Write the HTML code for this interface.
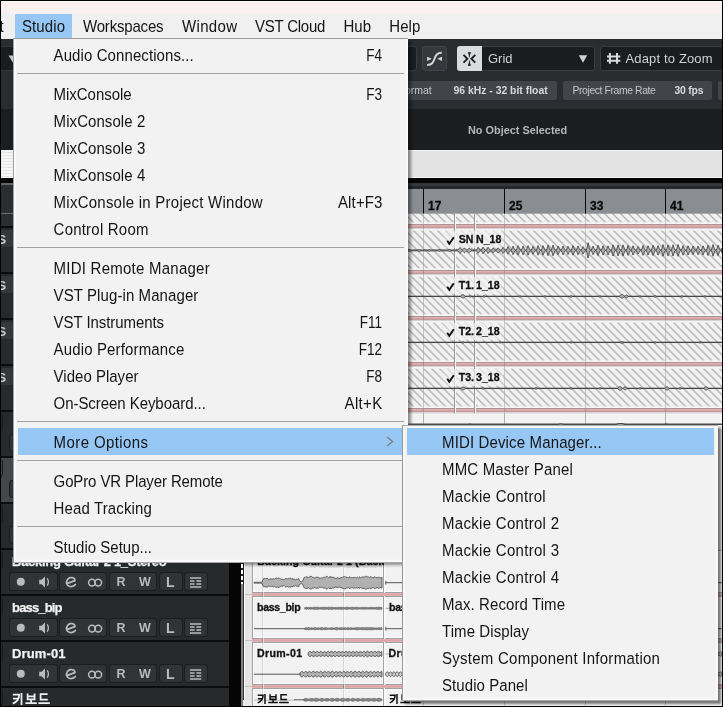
<!DOCTYPE html><html><head><meta charset="utf-8"><title>Cubase</title><style>
*{margin:0;padding:0;box-sizing:border-box}
html,body{width:723px;height:707px;overflow:hidden;background:#000}
body{font-family:"Liberation Sans",sans-serif;position:relative}
#root{position:absolute;left:0;top:0;width:723px;height:707px;overflow:hidden;background:#000;will-change:transform;transform:translateZ(0)}
.a{position:absolute}
.t{position:absolute;white-space:pre;line-height:1}
.mi{position:absolute;white-space:pre;font-size:15px;line-height:27px;height:27px;color:#141414;transform:scaleY(1.07);transform-origin:0 19px}
.sc{position:absolute;white-space:pre;font-size:15px;line-height:27px;height:27px;color:#141414;text-align:right;transform:scaleY(1.07);transform-origin:100% 19px}
.sep{position:absolute;height:1px;background:#a2a2a2}
.grp{position:absolute;height:17.6px;background:#303437;box-shadow:0 0 0 0.9px #1b1d1f;border-radius:2.5px}
.tn{position:absolute;white-space:pre;font-size:13px;font-weight:700;color:#f2f2f2;line-height:1;-webkit-text-stroke:0.25px #f2f2f2}
.ev{position:absolute;background:#ececec;border:1px solid #8e8e8e;box-shadow:inset 0 0 0 1px #fbfbfb}
.el{position:absolute;white-space:pre;font-size:10.6px;font-weight:700;color:#111;line-height:1;-webkit-text-stroke:0.3px #111}
</style></head><body><div id="root">
<div class="a" style="left:1px;top:1px;width:721px;height:13px;background:#f8f0f0;border-top:1px solid #fcf8f8"></div>
<div class="a" style="left:1px;top:14px;width:721px;height:25px;background:#f0f0f0"></div>
<div class="a" style="left:1px;top:39px;width:721px;height:70px;background:#292d30"></div>
<div class="a" style="left:1px;top:46px;width:14px;height:25px;background:#1a1d1f;border-top:1px solid #34383b;border-bottom:1px solid #34383b"></div>
<svg class="a" style="left:6px;top:55px" width="10" height="8"><path d="M2.5 0.5 L11 0.5 L6.8 7.5Z" fill="#c4c6c8"/></svg>
<div class="a" style="left:1px;top:109px;width:721px;height:41px;background:#1b1d1f"></div>
<div class="a" style="left:1px;top:150px;width:721px;height:28px;background:#e3e3e3;border-top:1px solid #f4f4f4;border-bottom:1px solid #f4f4f4"></div>
<div class="a" style="left:1px;top:150px;width:13px;height:28px;background:repeating-linear-gradient(#f6f6f6 0,#f6f6f6 2px,#e6e6e6 2px,#e6e6e6 3px)"></div>
<div class="a" style="left:1px;top:178px;width:721px;height:5px;background:#050505"></div>
<div class="a" style="left:1px;top:183px;width:721px;height:3px;background:#34383c"></div>
<div class="a" style="left:1px;top:186px;width:721px;height:3px;background:#24282b"></div>
<div class="a" style="left:395px;top:46px;width:22px;height:25px;background:#1a1d1f;border:1px solid #3a3e41;border-radius:3px"></div>
<div class="a" style="left:422px;top:46px;width:25px;height:25px;background:#35393c;border:1px solid #41454a;border-radius:3px"></div>
<svg class="a" style="left:422px;top:46px" width="25" height="25" viewBox="0 0 25 25"><path d="M5.2 19 C10.5 19 11.3 15.8 12.5 12.8 C13.7 9.8 14.5 6.8 19.8 6.8" fill="none" stroke="#d6d8da" stroke-width="1.9"/><path d="M5.1 10.7 L9.9 12.8 L5.1 14.9Z M20 10.7 L15.3 12.8 L20 14.9Z" fill="#d6d8da"/></svg>
<div class="a" style="left:457px;top:46px;width:138px;height:25px;background:#1a1d1f;border:1px solid #3a3e41;border-radius:3px"></div>
<div class="a" style="left:457px;top:46px;width:25.2px;height:25px;background:#d9dbdc;border-radius:3px 0 0 3px"></div>
<svg class="a" style="left:457px;top:46px" width="26" height="25" viewBox="0 0 26 25"><g fill="none" stroke="#17191b" stroke-width="1.8"><path d="M6.5 8.9 L10.4 12.8 L6.5 16.7"/><path d="M18.3 8.9 L14.4 12.8 L18.3 16.7"/></g><path d="M10.7 6.2 L14.1 6.2 L12.95 9 L12.7 11.6 L12.1 11.6 L11.85 9 Z M10.7 19.7 L14.1 19.7 L12.95 16.9 L12.7 14.2 L12.1 14.2 L11.85 16.9 Z" fill="#17191b"/></svg>
<div class="t" style="left:488px;top:52px;font-size:13px;color:#cfd1d3">Grid</div>
<svg class="a" style="left:578px;top:54px" width="12" height="10"><path d="M0.8 1.2 L9.2 1.2 L5 8.7Z" fill="#d0d2d4"/></svg>
<div class="a" style="left:600px;top:46px;width:131px;height:25px;background:#1a1d1f;border:1px solid #3a3e41;border-radius:3px"></div>
<svg class="a" style="left:606px;top:51px" width="16" height="15" viewBox="0 0 16 15"><g stroke="#d8dadc" stroke-width="2" fill="none"><path d="M3.9 2 V12.8 M11 2 V12.8 M1 5.6 H14.3 M1 9.8 H14.3"/></g></svg>
<div class="t" style="left:625.5px;top:52px;font-size:13px;color:#cfd1d3;letter-spacing:0.15px">Adapt to Zoom</div>
<div class="a" style="left:380px;top:81px;width:177px;height:19px;background:#41454a;border-radius:2px"></div>
<div class="a" style="left:563px;top:81px;width:149px;height:19px;background:#41454a;border-radius:2px"></div>
<div class="a" style="left:718px;top:81px;width:10px;height:19px;background:#41454a;border-radius:2px"></div>
<div class="t" style="left:405px;top:85.5px;font-size:10.4px;color:#c4c6c8">ormat</div>
<div class="t" style="left:453.5px;top:85.5px;font-size:10.4px;font-weight:700;color:#d6d8da">96 kHz - 32 bit float</div>
<div class="t" style="left:572.5px;top:85.5px;font-size:10.4px;color:#c4c6c8;letter-spacing:-0.4px">Project Frame Rate</div>
<div class="t" style="left:674.5px;top:85.5px;font-size:10.4px;font-weight:700;color:#d6d8da;letter-spacing:-0.2px">30 fps</div>
<div class="t" style="left:468px;top:125px;font-size:10.9px;font-weight:700;color:#b4b7ba">No Object Selected</div>
<div class="a" style="left:229px;top:189px;width:493px;height:25px;background:#8a8d92"></div>
<div class="a" style="left:422.9px;top:189px;width:1.3px;height:25px;background:#0a0a0a"></div>
<div class="t" style="left:428px;top:199.7px;font-size:12px;font-weight:700;color:#0a0a0a;letter-spacing:0.1px;-webkit-text-stroke:0.3px #0a0a0a">17</div>
<div class="a" style="left:503.9px;top:189px;width:1.3px;height:25px;background:#0a0a0a"></div>
<div class="t" style="left:509px;top:199.7px;font-size:12px;font-weight:700;color:#0a0a0a;letter-spacing:0.1px;-webkit-text-stroke:0.3px #0a0a0a">25</div>
<div class="a" style="left:584.9px;top:189px;width:1.3px;height:25px;background:#0a0a0a"></div>
<div class="t" style="left:590px;top:199.7px;font-size:12px;font-weight:700;color:#0a0a0a;letter-spacing:0.1px;-webkit-text-stroke:0.3px #0a0a0a">33</div>
<div class="a" style="left:664.9px;top:189px;width:1.3px;height:25px;background:#0a0a0a"></div>
<div class="t" style="left:670px;top:199.7px;font-size:12px;font-weight:700;color:#0a0a0a;letter-spacing:0.1px;-webkit-text-stroke:0.3px #0a0a0a">41</div>
<div class="a" style="left:229px;top:214px;width:493px;height:215px;background:#f4f4f4"></div>
<svg class="a" style="left:0;top:0" width="723" height="707" viewBox="0 0 723 707"><defs><pattern id="h" width="8" height="8" patternUnits="userSpaceOnUse" patternTransform="translate(7.05 0)"><rect width="8" height="8" fill="#f1f1f1"/><path d="M-2 -2 L10 10 M-2 6 L2 10 M6 -2 L10 2" stroke="#b4b4b4" stroke-width="1.35" fill="none"/></pattern></defs><rect x="229" y="213.7" width="493" height="8.5" fill="url(#h)"/><rect x="229" y="230.7" width="493" height="37.6" fill="url(#h)"/><rect x="229" y="276.7" width="493" height="37.6" fill="url(#h)"/><rect x="229" y="322.7" width="493" height="37.6" fill="url(#h)"/><rect x="229" y="368.7" width="493" height="37.6" fill="url(#h)"/></svg>
<div class="a" style="left:229px;top:224px;width:493px;height:5px;background:linear-gradient(#a89494 0,#a89494 1px,#e6aeb0 1px,#e6aeb0 2px,#d2a5a7 2px,#d2a5a7 3px,#c29e9f 3px,#c29e9f 4px,#d9d2d2 4px,#d9d2d2 5px)"></div>
<div class="a" style="left:422.9px;top:224.2px;width:1.1px;height:4px;background:#858282"></div>
<div class="a" style="left:503.9px;top:224.2px;width:1.1px;height:4px;background:#858282"></div>
<div class="a" style="left:584.9px;top:224.2px;width:1.1px;height:4px;background:#858282"></div>
<div class="a" style="left:664.9px;top:224.2px;width:1.1px;height:4px;background:#858282"></div>
<div class="a" style="left:229px;top:270px;width:493px;height:5px;background:linear-gradient(#a89494 0,#a89494 1px,#e6aeb0 1px,#e6aeb0 2px,#d2a5a7 2px,#d2a5a7 3px,#c29e9f 3px,#c29e9f 4px,#d9d2d2 4px,#d9d2d2 5px)"></div>
<div class="a" style="left:422.9px;top:270.2px;width:1.1px;height:4px;background:#858282"></div>
<div class="a" style="left:503.9px;top:270.2px;width:1.1px;height:4px;background:#858282"></div>
<div class="a" style="left:584.9px;top:270.2px;width:1.1px;height:4px;background:#858282"></div>
<div class="a" style="left:664.9px;top:270.2px;width:1.1px;height:4px;background:#858282"></div>
<div class="a" style="left:229px;top:316px;width:493px;height:5px;background:linear-gradient(#a89494 0,#a89494 1px,#e6aeb0 1px,#e6aeb0 2px,#d2a5a7 2px,#d2a5a7 3px,#c29e9f 3px,#c29e9f 4px,#d9d2d2 4px,#d9d2d2 5px)"></div>
<div class="a" style="left:422.9px;top:316.2px;width:1.1px;height:4px;background:#858282"></div>
<div class="a" style="left:503.9px;top:316.2px;width:1.1px;height:4px;background:#858282"></div>
<div class="a" style="left:584.9px;top:316.2px;width:1.1px;height:4px;background:#858282"></div>
<div class="a" style="left:664.9px;top:316.2px;width:1.1px;height:4px;background:#858282"></div>
<div class="a" style="left:229px;top:362px;width:493px;height:5px;background:linear-gradient(#a89494 0,#a89494 1px,#e6aeb0 1px,#e6aeb0 2px,#d2a5a7 2px,#d2a5a7 3px,#c29e9f 3px,#c29e9f 4px,#d9d2d2 4px,#d9d2d2 5px)"></div>
<div class="a" style="left:422.9px;top:362.2px;width:1.1px;height:4px;background:#858282"></div>
<div class="a" style="left:503.9px;top:362.2px;width:1.1px;height:4px;background:#858282"></div>
<div class="a" style="left:584.9px;top:362.2px;width:1.1px;height:4px;background:#858282"></div>
<div class="a" style="left:664.9px;top:362.2px;width:1.1px;height:4px;background:#858282"></div>
<div class="a" style="left:229px;top:408px;width:493px;height:5px;background:linear-gradient(#a89494 0,#a89494 1px,#e6aeb0 1px,#e6aeb0 2px,#d2a5a7 2px,#d2a5a7 3px,#c29e9f 3px,#c29e9f 4px,#d9d2d2 4px,#d9d2d2 5px)"></div>
<div class="a" style="left:422.9px;top:408.2px;width:1.1px;height:4px;background:#858282"></div>
<div class="a" style="left:503.9px;top:408.2px;width:1.1px;height:4px;background:#858282"></div>
<div class="a" style="left:584.9px;top:408.2px;width:1.1px;height:4px;background:#858282"></div>
<div class="a" style="left:664.9px;top:408.2px;width:1.1px;height:4px;background:#858282"></div>
<div class="a" style="left:423px;top:214px;width:1px;height:200px;background:rgba(165,165,165,0.6)"></div>
<div class="a" style="left:504px;top:214px;width:1px;height:200px;background:rgba(165,165,165,0.6)"></div>
<div class="a" style="left:585px;top:214px;width:1px;height:200px;background:rgba(165,165,165,0.6)"></div>
<div class="a" style="left:665px;top:214px;width:1px;height:200px;background:rgba(165,165,165,0.6)"></div>
<div class="a" style="left:453.8px;top:214px;width:1.1px;height:199px;background:#979797"></div>
<div class="a" style="left:454.90000000000003px;top:214px;width:1px;height:199px;background:#f8f8f8"></div>
<div class="a" style="left:473.8px;top:214px;width:1.1px;height:199px;background:#979797"></div>
<div class="a" style="left:474.90000000000003px;top:214px;width:1px;height:199px;background:#f8f8f8"></div>
<div class="a" style="left:438px;top:231px;width:68px;height:17px;background:linear-gradient(90deg,rgba(242,242,242,0),rgba(242,242,242,0.7) 22%,rgba(242,242,242,0.7) 85%,rgba(242,242,242,0))"></div>
<div class="a" style="left:438px;top:277px;width:68px;height:17px;background:linear-gradient(90deg,rgba(242,242,242,0),rgba(242,242,242,0.7) 22%,rgba(242,242,242,0.7) 85%,rgba(242,242,242,0))"></div>
<div class="a" style="left:438px;top:323px;width:68px;height:17px;background:linear-gradient(90deg,rgba(242,242,242,0),rgba(242,242,242,0.7) 22%,rgba(242,242,242,0.7) 85%,rgba(242,242,242,0))"></div>
<div class="a" style="left:438px;top:369px;width:68px;height:17px;background:linear-gradient(90deg,rgba(242,242,242,0),rgba(242,242,242,0.7) 22%,rgba(242,242,242,0.7) 85%,rgba(242,242,242,0))"></div>
<svg class="a" style="left:0;top:0" width="723" height="707" viewBox="0 0 723 707"><path d="M408 250.4 H722" stroke="#3a3a3a" stroke-width="0.9" fill="none"/><path d="M408.0 249.95 L408.5 249.66 L409.0 249.48 L409.5 249.47 L410.0 249.65 L410.5 249.94 L411.0 249.95 L411.5 249.95 L412.0 249.95 L412.5 249.95 L413.0 249.95 L413.5 249.87 L414.0 249.81 L414.5 249.81 L415.0 249.86 L415.5 249.94 L416.0 249.95 L416.5 249.95 L417.0 249.95 L417.5 249.95 L418.0 249.95 L418.5 249.68 L419.0 249.49 L419.5 249.46 L420.0 249.62 L420.5 249.91 L421.0 249.95 L421.5 249.95 L422.0 249.95 L422.5 249.95 L423.0 249.95 L423.5 249.87 L424.0 249.81 L424.5 249.80 L425.0 249.85 L425.5 249.93 L426.0 249.95 L426.5 249.95 L427.0 249.95 L427.5 249.95 L428.0 249.95 L428.5 249.71 L429.0 249.50 L429.5 249.46 L430.0 249.60 L430.5 249.88 L431.0 249.95 L431.5 249.95 L432.0 249.95 L432.5 249.95 L433.0 249.95 L433.5 249.88 L434.0 249.82 L434.5 249.80 L435.0 249.84 L435.5 249.92 L436.0 249.95 L436.5 249.95 L437.0 249.95 L437.5 249.95 L438.0 249.95 L438.5 249.74 L439.0 249.52 L439.5 249.45 L440.0 249.58 L440.5 249.84 L441.0 249.95 L441.5 249.95 L442.0 249.95 L442.5 249.95 L443.0 249.95 L443.5 249.89 L444.0 249.82 L444.5 249.80 L445.0 249.83 L445.5 249.91 L446.0 249.95 L446.5 249.95 L447.0 249.95 L447.5 249.95 L448.0 249.95 L448.5 249.77 L449.0 249.53 L449.5 249.45 L450.0 249.56 L450.5 249.81 L451.0 249.95 L451.5 249.95 L452.0 249.95 L452.5 249.95 L453.0 249.95 L453.5 249.90 L454.0 249.83 L454.5 249.95 L455.0 249.95 L455.5 249.95 L456.0 249.95 L456.5 249.95 L457.0 249.95 L457.5 249.95 L458.0 249.95 L458.5 249.29 L459.0 248.62 L459.5 247.96 L460.0 247.41 L460.5 248.07 L461.0 248.74 L461.5 249.40 L462.0 249.95 L462.5 249.95 L463.0 249.54 L463.5 249.03 L464.0 248.52 L464.5 248.01 L465.0 248.41 L465.5 248.92 L466.0 249.43 L466.5 249.94 L467.0 249.95 L467.5 249.64 L468.0 249.13 L468.5 248.62 L469.0 248.11 L469.5 248.30 L470.0 248.81 L470.5 249.33 L471.0 249.84 L471.5 249.95 L472.0 249.75 L472.5 249.95 L473.0 249.95 L473.5 249.95 L474.0 249.95 L474.5 249.95 L475.0 249.95 L475.5 249.95 L476.0 249.95 L476.5 249.95 L477.0 249.11 L477.5 248.26 L478.0 247.42 L478.5 247.93 L479.0 248.77 L479.5 249.61 L480.0 249.95 L480.5 249.95 L481.0 249.95 L481.5 249.95 L482.0 248.99 L482.5 248.02 L483.0 247.06 L483.5 247.64 L484.0 248.60 L484.5 249.56 L485.0 249.95 L485.5 249.95 L486.0 249.95 L486.5 249.95 L487.0 249.04 L487.5 248.13 L488.0 247.23 L488.5 247.77 L489.0 248.68 L489.5 249.59 L490.0 249.95 L490.5 249.95 L491.0 249.95 L491.5 249.95 L492.0 249.19 L492.5 248.43 L493.0 247.68 L493.5 248.13 L494.0 248.89 L494.5 249.65 L495.0 249.95 L495.5 249.95 L496.0 249.95 L496.5 249.95 L497.0 249.22 L497.5 248.48 L498.0 247.75 L498.5 248.19 L499.0 248.92 L499.5 249.66 L500.0 249.95 L500.5 249.95 L501.0 249.95 L501.5 249.95 L502.0 249.08 L502.5 248.21 L503.0 247.34 L503.5 247.86 L504.0 248.73 L504.5 249.60 L505.0 249.95 L505.5 249.95 L506.0 249.95 L506.5 249.95 L507.0 248.79 L507.5 247.62 L508.0 246.46 L508.5 247.15 L509.0 248.32 L509.5 249.48 L510.0 249.95 L510.5 249.95 L511.0 249.95 L511.5 249.95 L512.0 248.68 L512.5 247.41 L513.0 246.14 L513.5 246.90 L514.0 248.17 L514.5 249.44 L515.0 249.95 L515.5 249.95 L516.0 249.95 L516.5 249.95 L517.0 248.52 L517.5 247.10 L518.0 245.67 L518.5 246.52 L519.0 247.95 L519.5 249.38 L520.0 249.95 L520.5 249.95 L521.0 249.95 L521.5 249.95 L522.0 248.66 L522.5 247.37 L523.0 246.08 L523.5 246.85 L524.0 248.14 L524.5 249.43 L525.0 249.95 L525.5 249.95 L526.0 249.95 L526.5 249.95 L527.0 248.50 L527.5 247.04 L528.0 245.59 L528.5 246.46 L529.0 247.91 L529.5 249.37 L530.0 249.95 L530.5 249.95 L531.0 249.95 L531.5 249.95 L532.0 248.76 L532.5 247.57 L533.0 246.38 L533.5 247.10 L534.0 248.29 L534.5 249.47 L535.0 249.95 L535.5 249.95 L536.0 249.95 L536.5 249.95 L537.0 248.50 L537.5 247.05 L538.0 245.60 L538.5 246.47 L539.0 247.92 L539.5 249.37 L540.0 249.95 L540.5 249.95 L541.0 249.95 L541.5 249.95 L542.0 248.51 L542.5 247.08 L543.0 245.64 L543.5 246.51 L544.0 247.94 L544.5 249.38 L545.0 249.95 L545.5 249.95 L546.0 249.95 L546.5 249.95 L547.0 248.34 L547.5 246.73 L548.0 245.12 L548.5 246.08 L549.0 247.69 L549.5 249.31 L550.0 249.95 L550.5 249.95 L551.0 249.95 L551.5 249.95 L552.0 248.34 L552.5 246.72 L553.0 245.11 L553.5 246.08 L554.0 247.69 L554.5 249.30 L555.0 249.95 L555.5 249.95 L556.0 249.95 L556.5 249.95 L557.0 248.65 L557.5 247.36 L558.0 246.06 L558.5 246.84 L559.0 248.13 L559.5 249.43 L560.0 249.95 L560.5 249.95 L561.0 249.95 L561.5 249.95 L562.0 248.66 L562.5 247.36 L563.0 246.07 L563.5 246.85 L564.0 248.14 L564.5 249.43 L565.0 249.95 L565.5 249.95 L566.0 249.95 L566.5 249.95 L567.0 248.73 L567.5 247.51 L568.0 246.29 L568.5 247.02 L569.0 248.24 L569.5 249.46 L570.0 249.95 L570.5 249.95 L571.0 249.95 L571.5 249.95 L572.0 248.52 L572.5 247.08 L573.0 245.65 L573.5 246.51 L574.0 247.94 L574.5 249.38 L575.0 249.95 L575.5 249.95 L576.0 249.95 L576.5 249.95 L577.0 248.61 L577.5 247.27 L578.0 245.94 L578.5 246.74 L579.0 248.08 L579.5 249.41 L580.0 249.95 L580.5 249.95 L581.0 249.95 L581.5 249.95 L582.0 248.86 L582.5 247.76 L583.0 246.67 L583.5 247.33 L584.0 248.42 L584.5 249.51 L585.0 249.95 L585.5 249.95 L586.0 249.95 L586.5 249.95 L587.0 247.58 L587.5 245.20 L588.0 242.83 L588.5 244.25 L589.0 246.62 L589.5 249.00 L590.0 249.95 L590.5 249.95 L591.0 249.95 L591.5 249.95 L592.0 248.69 L592.5 247.43 L593.0 246.17 L593.5 246.93 L594.0 248.19 L594.5 249.45 L595.0 249.95 L595.5 249.95 L596.0 249.95 L596.5 249.95 L597.0 248.38 L597.5 246.81 L598.0 245.24 L598.5 246.18 L599.0 247.75 L599.5 249.32 L600.0 249.95 L600.5 249.95 L601.0 249.95 L601.5 249.95 L602.0 248.54 L602.5 247.13 L603.0 245.71 L603.5 246.56 L604.0 247.97 L604.5 249.39 L605.0 249.95 L605.5 249.95 L606.0 249.95 L606.5 249.95 L607.0 248.58 L607.5 247.22 L608.0 245.85 L608.5 246.67 L609.0 248.04 L609.5 249.40 L610.0 249.95 L610.5 249.95 L611.0 249.95 L611.5 249.95 L612.0 248.23 L612.5 246.52 L613.0 244.80 L613.5 245.83 L614.0 247.55 L614.5 249.26 L615.0 249.95 L615.5 249.95 L616.0 249.95 L616.5 249.95 L617.0 248.26 L617.5 246.58 L618.0 244.89 L618.5 245.90 L619.0 247.59 L619.5 249.28 L620.0 249.95 L620.5 249.95 L621.0 249.95 L621.5 249.95 L622.0 248.26 L622.5 246.58 L623.0 244.89 L623.5 245.90 L624.0 247.59 L624.5 249.28 L625.0 249.95 L625.5 249.95 L626.0 249.95 L626.5 249.95 L627.0 248.46 L627.5 246.97 L628.0 245.48 L628.5 246.37 L629.0 247.86 L629.5 249.35 L630.0 249.95 L630.5 249.95 L631.0 249.95 L631.5 249.95 L632.0 248.56 L632.5 247.17 L633.0 245.78 L633.5 246.61 L634.0 248.00 L634.5 249.39 L635.0 249.95 L635.5 249.95 L636.0 249.95 L636.5 249.95 L637.0 248.82 L637.5 247.68 L638.0 246.55 L638.5 247.23 L639.0 248.36 L639.5 249.50 L640.0 249.95 L640.5 249.95 L641.0 249.95 L641.5 249.95 L642.0 248.46 L642.5 246.96 L643.0 245.47 L643.5 246.37 L644.0 247.86 L644.5 249.35 L645.0 249.95 L645.5 249.95 L646.0 249.95 L646.5 249.95 L647.0 248.55 L647.5 247.16 L648.0 245.76 L648.5 246.60 L649.0 248.00 L649.5 249.39 L650.0 249.95 L650.5 249.95 L651.0 249.95 L651.5 249.95 L652.0 248.39 L652.5 246.83 L653.0 245.27 L653.5 246.21 L654.0 247.77 L654.5 249.33 L655.0 249.95 L655.5 249.95 L656.0 249.95 L656.5 249.95 L657.0 248.52 L657.5 247.10 L658.0 245.67 L658.5 246.53 L659.0 247.95 L659.5 249.38 L660.0 249.95 L660.5 249.95 L661.0 249.95 L661.5 249.95 L662.0 248.16 L662.5 246.37 L663.0 244.57 L663.5 245.65 L664.0 247.44 L664.5 249.23 L665.0 249.95 L665.5 249.95 L666.0 249.95 L666.5 249.95 L667.0 248.29 L667.5 246.63 L668.0 244.97 L668.5 245.97 L669.0 247.63 L669.5 249.29 L670.0 249.95 L670.5 249.95 L671.0 249.95 L671.5 249.95 L672.0 248.24 L672.5 246.52 L673.0 244.81 L673.5 245.84 L674.0 247.55 L674.5 249.26 L675.0 249.95 L675.5 249.95 L676.0 249.95 L676.5 249.95 L677.0 248.15 L677.5 246.35 L678.0 244.55 L678.5 245.63 L679.0 247.43 L679.5 249.23 L680.0 249.95 L680.5 249.95 L681.0 249.95 L681.5 249.95 L682.0 248.51 L682.5 247.08 L683.0 245.64 L683.5 246.51 L684.0 247.94 L684.5 249.38 L685.0 249.95 L685.5 249.95 L686.0 249.95 L686.5 249.95 L687.0 248.56 L687.5 247.16 L688.0 245.77 L688.5 246.60 L689.0 248.00 L689.5 249.39 L690.0 249.95 L690.5 249.95 L691.0 249.95 L691.5 249.95 L692.0 248.66 L692.5 247.37 L693.0 246.09 L693.5 246.86 L694.0 248.15 L694.5 249.43 L695.0 249.95 L695.5 249.95 L696.0 249.95 L696.5 249.95 L697.0 248.64 L697.5 247.32 L698.0 246.01 L698.5 246.79 L699.0 248.11 L699.5 249.42 L700.0 249.95 L700.5 249.95 L701.0 249.95 L701.5 249.95 L702.0 248.59 L702.5 247.23 L703.0 245.87 L703.5 246.69 L704.0 248.05 L704.5 249.41 L705.0 249.95 L705.5 249.95 L706.0 249.95 L706.5 249.95 L707.0 248.38 L707.5 246.82 L708.0 245.25 L708.5 246.19 L709.0 247.76 L709.5 249.32 L710.0 249.95 L710.5 249.95 L711.0 249.95 L711.5 249.95 L712.0 248.16 L712.5 246.36 L713.0 244.57 L713.5 245.64 L714.0 247.44 L714.5 249.23 L715.0 249.95 L715.5 249.95 L716.0 249.95 L716.5 249.95 L717.0 248.37 L717.5 246.79 L718.0 245.21 L718.5 246.16 L719.0 247.74 L719.5 249.32 L720.0 249.95 L720.5 249.95 L721.0 249.95 L721.5 249.95 L722.0 248.06 L722.0 252.74 L721.5 250.85 L721.0 250.85 L720.5 250.85 L720.0 250.85 L719.5 251.48 L719.0 253.06 L718.5 254.64 L718.0 255.59 L717.5 254.01 L717.0 252.43 L716.5 250.85 L716.0 250.85 L715.5 250.85 L715.0 250.85 L714.5 251.57 L714.0 253.36 L713.5 255.16 L713.0 256.23 L712.5 254.44 L712.0 252.64 L711.5 250.85 L711.0 250.85 L710.5 250.85 L710.0 250.85 L709.5 251.48 L709.0 253.04 L708.5 254.61 L708.0 255.55 L707.5 253.98 L707.0 252.42 L706.5 250.85 L706.0 250.85 L705.5 250.85 L705.0 250.85 L704.5 251.39 L704.0 252.75 L703.5 254.11 L703.0 254.93 L702.5 253.57 L702.0 252.21 L701.5 250.85 L701.0 250.85 L700.5 250.85 L700.0 250.85 L699.5 251.38 L699.0 252.69 L698.5 254.01 L698.0 254.79 L697.5 253.48 L697.0 252.16 L696.5 250.85 L696.0 250.85 L695.5 250.85 L695.0 250.85 L694.5 251.37 L694.0 252.65 L693.5 253.94 L693.0 254.71 L692.5 253.43 L692.0 252.14 L691.5 250.85 L691.0 250.85 L690.5 250.85 L690.0 250.85 L689.5 251.41 L689.0 252.80 L688.5 254.20 L688.0 255.03 L687.5 253.64 L687.0 252.24 L686.5 250.85 L686.0 250.85 L685.5 250.85 L685.0 250.85 L684.5 251.42 L684.0 252.86 L683.5 254.29 L683.0 255.16 L682.5 253.72 L682.0 252.29 L681.5 250.85 L681.0 250.85 L680.5 250.85 L680.0 250.85 L679.5 251.57 L679.0 253.37 L678.5 255.17 L678.0 256.25 L677.5 254.45 L677.0 252.65 L676.5 250.85 L676.0 250.85 L675.5 250.85 L675.0 250.85 L674.5 251.54 L674.0 253.25 L673.5 254.96 L673.0 255.99 L672.5 254.28 L672.0 252.56 L671.5 250.85 L671.0 250.85 L670.5 250.85 L670.0 250.85 L669.5 251.51 L669.0 253.17 L668.5 254.83 L668.0 255.83 L667.5 254.17 L667.0 252.51 L666.5 250.85 L666.0 250.85 L665.5 250.85 L665.0 250.85 L664.5 251.57 L664.0 253.36 L663.5 255.15 L663.0 256.23 L662.5 254.43 L662.0 252.64 L661.5 250.85 L661.0 250.85 L660.5 250.85 L660.0 250.85 L659.5 251.42 L659.0 252.85 L658.5 254.27 L658.0 255.13 L657.5 253.70 L657.0 252.28 L656.5 250.85 L656.0 250.85 L655.5 250.85 L655.0 250.85 L654.5 251.47 L654.0 253.03 L653.5 254.59 L653.0 255.53 L652.5 253.97 L652.0 252.41 L651.5 250.85 L651.0 250.85 L650.5 250.85 L650.0 250.85 L649.5 251.41 L649.0 252.80 L648.5 254.20 L648.0 255.04 L647.5 253.64 L647.0 252.25 L646.5 250.85 L646.0 250.85 L645.5 250.85 L645.0 250.85 L644.5 251.45 L644.0 252.94 L643.5 254.43 L643.0 255.33 L642.5 253.84 L642.0 252.34 L641.5 250.85 L641.0 250.85 L640.5 250.85 L640.0 250.85 L639.5 251.30 L639.0 252.44 L638.5 253.57 L638.0 254.25 L637.5 253.12 L637.0 251.98 L636.5 250.85 L636.0 250.85 L635.5 250.85 L635.0 250.85 L634.5 251.41 L634.0 252.80 L633.5 254.19 L633.0 255.02 L632.5 253.63 L632.0 252.24 L631.5 250.85 L631.0 250.85 L630.5 250.85 L630.0 250.85 L629.5 251.45 L629.0 252.94 L628.5 254.43 L628.0 255.32 L627.5 253.83 L627.0 252.34 L626.5 250.85 L626.0 250.85 L625.5 250.85 L625.0 250.85 L624.5 251.53 L624.0 253.21 L623.5 254.90 L623.0 255.91 L622.5 254.22 L622.0 252.54 L621.5 250.85 L621.0 250.85 L620.5 250.85 L620.0 250.85 L619.5 251.53 L619.0 253.21 L618.5 254.90 L618.0 255.91 L617.5 254.22 L617.0 252.54 L616.5 250.85 L616.0 250.85 L615.5 250.85 L615.0 250.85 L614.5 251.54 L614.0 253.25 L613.5 254.97 L613.0 256.00 L612.5 254.28 L612.0 252.57 L611.5 250.85 L611.0 250.85 L610.5 250.85 L610.0 250.85 L609.5 251.40 L609.0 252.76 L608.5 254.13 L608.0 254.95 L607.5 253.58 L607.0 252.22 L606.5 250.85 L606.0 250.85 L605.5 250.85 L605.0 250.85 L604.5 251.41 L604.0 252.83 L603.5 254.24 L603.0 255.09 L602.5 253.67 L602.0 252.26 L601.5 250.85 L601.0 250.85 L600.5 250.85 L600.0 250.85 L599.5 251.48 L599.0 253.05 L598.5 254.62 L598.0 255.56 L597.5 253.99 L597.0 252.42 L596.5 250.85 L596.0 250.85 L595.5 250.85 L595.0 250.85 L594.5 251.35 L594.0 252.61 L593.5 253.87 L593.0 254.63 L592.5 253.37 L592.0 252.11 L591.5 250.85 L591.0 250.85 L590.5 250.85 L590.0 250.85 L589.5 251.80 L589.0 254.18 L588.5 256.55 L588.0 257.98 L587.5 255.60 L587.0 253.22 L586.5 250.85 L586.0 250.85 L585.5 250.85 L585.0 250.85 L584.5 251.29 L584.0 252.38 L583.5 253.47 L583.0 254.13 L582.5 253.04 L582.0 251.94 L581.5 250.85 L581.0 250.85 L580.5 250.85 L580.0 250.85 L579.5 251.39 L579.0 252.72 L578.5 254.06 L578.0 254.86 L577.5 253.53 L577.0 252.19 L576.5 250.85 L576.0 250.85 L575.5 250.85 L575.0 250.85 L574.5 251.42 L574.0 252.86 L573.5 254.29 L573.0 255.15 L572.5 253.72 L572.0 252.28 L571.5 250.85 L571.0 250.85 L570.5 250.85 L570.0 250.85 L569.5 251.34 L569.0 252.56 L568.5 253.78 L568.0 254.51 L567.5 253.29 L567.0 252.07 L566.5 250.85 L566.0 250.85 L565.5 250.85 L565.0 250.85 L564.5 251.37 L564.0 252.66 L563.5 253.95 L563.0 254.73 L562.5 253.44 L562.0 252.14 L561.5 250.85 L561.0 250.85 L560.5 250.85 L560.0 250.85 L559.5 251.37 L559.0 252.67 L558.5 253.96 L558.0 254.74 L557.5 253.44 L557.0 252.15 L556.5 250.85 L556.0 250.85 L555.5 250.85 L555.0 250.85 L554.5 251.50 L554.0 253.11 L553.5 254.72 L553.0 255.69 L552.5 254.08 L552.0 252.46 L551.5 250.85 L551.0 250.85 L550.5 250.85 L550.0 250.85 L549.5 251.49 L549.0 253.11 L548.5 254.72 L548.0 255.68 L547.5 254.07 L547.0 252.46 L546.5 250.85 L546.0 250.85 L545.5 250.85 L545.0 250.85 L544.5 251.42 L544.0 252.86 L543.5 254.29 L543.0 255.16 L542.5 253.72 L542.0 252.29 L541.5 250.85 L541.0 250.85 L540.5 250.85 L540.0 250.85 L539.5 251.43 L539.0 252.88 L538.5 254.33 L538.0 255.20 L537.5 253.75 L537.0 252.30 L536.5 250.85 L536.0 250.85 L535.5 250.85 L535.0 250.85 L534.5 251.33 L534.0 252.51 L533.5 253.70 L533.0 254.42 L532.5 253.23 L532.0 252.04 L531.5 250.85 L531.0 250.85 L530.5 250.85 L530.0 250.85 L529.5 251.43 L529.0 252.89 L528.5 254.34 L528.0 255.21 L527.5 253.76 L527.0 252.30 L526.5 250.85 L526.0 250.85 L525.5 250.85 L525.0 250.85 L524.5 251.37 L524.0 252.66 L523.5 253.95 L523.0 254.72 L522.5 253.43 L522.0 252.14 L521.5 250.85 L521.0 250.85 L520.5 250.85 L520.0 250.85 L519.5 251.42 L519.0 252.85 L518.5 254.28 L518.0 255.13 L517.5 253.70 L517.0 252.28 L516.5 250.85 L516.0 250.85 L515.5 250.85 L515.0 250.85 L514.5 251.36 L514.0 252.63 L513.5 253.90 L513.0 254.66 L512.5 253.39 L512.0 252.12 L511.5 250.85 L511.0 250.85 L510.5 250.85 L510.0 250.85 L509.5 251.32 L509.0 252.48 L508.5 253.65 L508.0 254.34 L507.5 253.18 L507.0 252.01 L506.5 250.85 L506.0 250.85 L505.5 250.85 L505.0 250.85 L504.5 251.20 L504.0 252.07 L503.5 252.94 L503.0 253.46 L502.5 252.59 L502.0 251.72 L501.5 250.85 L501.0 250.85 L500.5 250.85 L500.0 250.85 L499.5 251.14 L499.0 251.88 L498.5 252.61 L498.0 253.05 L497.5 252.32 L497.0 251.58 L496.5 250.85 L496.0 250.85 L495.5 250.85 L495.0 250.85 L494.5 251.15 L494.0 251.91 L493.5 252.67 L493.0 253.12 L492.5 252.37 L492.0 251.61 L491.5 250.85 L491.0 250.85 L490.5 250.85 L490.0 250.85 L489.5 251.21 L489.0 252.12 L488.5 253.03 L488.0 253.57 L487.5 252.67 L487.0 251.76 L486.5 250.85 L486.0 250.85 L485.5 250.85 L485.0 250.85 L484.5 251.24 L484.0 252.20 L483.5 253.16 L483.0 253.74 L482.5 252.78 L482.0 251.81 L481.5 250.85 L481.0 250.85 L480.5 250.85 L480.0 250.85 L479.5 251.19 L479.0 252.03 L478.5 252.88 L478.0 253.38 L477.5 252.54 L477.0 251.69 L476.5 250.85 L476.0 250.85 L475.5 250.85 L475.0 250.85 L474.5 250.85 L474.0 250.85 L473.5 250.85 L473.0 250.85 L472.5 250.85 L472.0 251.05 L471.5 250.85 L471.0 250.96 L470.5 251.47 L470.0 251.99 L469.5 252.50 L469.0 252.69 L468.5 252.18 L468.0 251.67 L467.5 251.16 L467.0 250.85 L466.5 250.86 L466.0 251.37 L465.5 251.88 L465.0 252.39 L464.5 252.79 L464.0 252.28 L463.5 251.77 L463.0 251.26 L462.5 250.85 L462.0 250.85 L461.5 251.40 L461.0 252.06 L460.5 252.73 L460.0 253.39 L459.5 252.84 L459.0 252.18 L458.5 251.51 L458.0 250.85 L457.5 250.85 L457.0 250.85 L456.5 250.85 L456.0 250.85 L455.5 250.85 L455.0 250.85 L454.5 250.85 L454.0 250.97 L453.5 250.90 L453.0 250.85 L452.5 250.85 L452.0 250.85 L451.5 250.85 L451.0 250.85 L450.5 250.99 L450.0 251.24 L449.5 251.35 L449.0 251.27 L448.5 251.03 L448.0 250.85 L447.5 250.85 L447.0 250.85 L446.5 250.85 L446.0 250.85 L445.5 250.89 L445.0 250.97 L444.5 251.00 L444.0 250.98 L443.5 250.91 L443.0 250.85 L442.5 250.85 L442.0 250.85 L441.5 250.85 L441.0 250.85 L440.5 250.96 L440.0 251.22 L439.5 251.35 L439.0 251.28 L438.5 251.06 L438.0 250.85 L437.5 250.85 L437.0 250.85 L436.5 250.85 L436.0 250.85 L435.5 250.88 L435.0 250.96 L434.5 251.00 L434.0 250.98 L433.5 250.92 L433.0 250.85 L432.5 250.85 L432.0 250.85 L431.5 250.85 L431.0 250.85 L430.5 250.92 L430.0 251.20 L429.5 251.34 L429.0 251.30 L428.5 251.09 L428.0 250.85 L427.5 250.85 L427.0 250.85 L426.5 250.85 L426.0 250.85 L425.5 250.87 L425.0 250.95 L424.5 251.00 L424.0 250.99 L423.5 250.93 L423.0 250.85 L422.5 250.85 L422.0 250.85 L421.5 250.85 L421.0 250.85 L420.5 250.89 L420.0 251.18 L419.5 251.34 L419.0 251.31 L418.5 251.12 L418.0 250.85 L417.5 250.85 L417.0 250.85 L416.5 250.85 L416.0 250.85 L415.5 250.86 L415.0 250.94 L414.5 250.99 L414.0 250.99 L413.5 250.93 L413.0 250.85 L412.5 250.85 L412.0 250.85 L411.5 250.85 L411.0 250.85 L410.5 250.86 L410.0 251.15 L409.5 251.33 L409.0 251.32 L408.5 251.14 L408.0 250.85Z" fill="#b0b0b0" stroke="#404040" stroke-width="0.9" stroke-linejoin="round"/><path d="M408 296.4 H722" stroke="#3a3a3a" stroke-width="0.9" fill="none"/><path d="M408.0 296.28 L408.5 296.28 L409.0 296.28 L409.5 296.28 L410.0 296.28 L410.5 296.28 L411.0 296.28 L411.5 296.28 L412.0 296.28 L412.5 296.28 L413.0 296.28 L413.5 296.28 L414.0 296.28 L414.5 296.28 L415.0 296.28 L415.5 296.28 L416.0 296.28 L416.5 296.28 L417.0 296.28 L417.5 296.28 L418.0 296.28 L418.5 296.28 L419.0 296.28 L419.5 296.28 L420.0 296.28 L420.5 296.28 L421.0 296.28 L421.5 296.28 L422.0 296.28 L422.5 296.28 L423.0 296.28 L423.5 296.28 L424.0 296.28 L424.5 296.28 L425.0 296.28 L425.5 296.28 L426.0 296.28 L426.5 296.28 L427.0 296.28 L427.5 296.28 L428.0 296.28 L428.5 296.28 L429.0 296.28 L429.5 296.28 L430.0 296.28 L430.5 296.28 L431.0 296.28 L431.5 296.28 L432.0 296.28 L432.5 296.28 L433.0 296.28 L433.5 296.28 L434.0 296.28 L434.5 296.28 L435.0 296.28 L435.5 296.28 L436.0 296.28 L436.5 296.28 L437.0 296.28 L437.5 296.28 L438.0 296.28 L438.5 296.28 L439.0 296.28 L439.5 296.28 L440.0 296.28 L440.5 296.28 L441.0 296.28 L441.5 296.28 L442.0 296.28 L442.5 296.28 L443.0 296.28 L443.5 296.28 L444.0 296.28 L444.5 296.28 L445.0 296.28 L445.5 296.28 L446.0 296.28 L446.5 296.28 L447.0 296.28 L447.5 296.28 L448.0 296.28 L448.5 296.28 L449.0 296.28 L449.5 296.28 L450.0 296.28 L450.5 296.28 L451.0 296.28 L451.5 296.28 L452.0 296.28 L452.5 296.28 L453.0 296.28 L453.5 296.28 L454.0 296.28 L454.5 296.28 L455.0 296.28 L455.5 296.28 L456.0 296.28 L456.5 296.28 L457.0 296.28 L457.5 296.28 L458.0 296.28 L458.5 296.28 L459.0 296.28 L459.5 296.28 L460.0 296.28 L460.5 296.28 L461.0 295.85 L461.5 295.54 L462.0 295.22 L462.5 294.91 L463.0 294.60 L463.5 294.91 L464.0 295.22 L464.5 295.54 L465.0 295.85 L465.5 296.28 L466.0 296.28 L466.5 296.28 L467.0 296.28 L467.5 296.28 L468.0 296.28 L468.5 296.28 L469.0 295.97 L469.5 295.83 L470.0 295.70 L470.5 295.83 L471.0 295.97 L471.5 296.28 L472.0 296.28 L472.5 296.28 L473.0 296.28 L473.5 296.28 L474.0 296.28 L474.5 296.28 L475.0 296.28 L475.5 296.28 L476.0 296.28 L476.5 296.28 L477.0 296.28 L477.5 296.28 L478.0 296.28 L478.5 296.28 L479.0 296.28 L479.5 296.28 L480.0 296.28 L480.5 296.28 L481.0 296.28 L481.5 296.28 L482.0 296.28 L482.5 296.28 L483.0 295.97 L483.5 295.83 L484.0 295.70 L484.5 295.83 L485.0 295.97 L485.5 296.28 L486.0 296.28 L486.5 296.28 L487.0 296.28 L487.5 296.28 L488.0 296.28 L488.5 296.28 L489.0 296.28 L489.5 296.28 L490.0 296.28 L490.5 296.28 L491.0 296.28 L491.5 296.28 L492.0 296.28 L492.5 296.28 L493.0 296.28 L493.5 296.28 L494.0 296.28 L494.5 296.28 L495.0 296.28 L495.5 296.28 L496.0 296.28 L496.5 296.28 L497.0 296.28 L497.5 296.28 L498.0 296.28 L498.5 296.28 L499.0 296.28 L499.5 296.28 L500.0 296.28 L500.5 296.28 L501.0 296.28 L501.5 296.28 L502.0 296.28 L502.5 296.28 L503.0 296.28 L503.5 296.28 L504.0 296.28 L504.5 296.28 L505.0 296.28 L505.5 296.28 L506.0 296.28 L506.5 296.28 L507.0 296.28 L507.5 296.28 L508.0 296.28 L508.5 296.28 L509.0 296.28 L509.5 296.28 L510.0 296.28 L510.5 296.28 L511.0 296.28 L511.5 296.28 L512.0 296.28 L512.5 296.28 L513.0 296.28 L513.5 296.28 L514.0 296.28 L514.5 296.28 L515.0 296.28 L515.5 296.28 L516.0 296.28 L516.5 296.28 L517.0 296.28 L517.5 296.28 L518.0 296.28 L518.5 296.28 L519.0 295.98 L519.5 295.87 L520.0 295.75 L520.5 295.87 L521.0 295.98 L521.5 296.28 L522.0 296.28 L522.5 296.28 L523.0 296.28 L523.5 296.28 L524.0 296.28 L524.5 296.28 L525.0 296.28 L525.5 296.28 L526.0 296.28 L526.5 296.28 L527.0 296.28 L527.5 296.28 L528.0 296.28 L528.5 296.28 L529.0 296.28 L529.5 296.28 L530.0 296.28 L530.5 296.28 L531.0 296.28 L531.5 296.28 L532.0 296.28 L532.5 296.28 L533.0 296.28 L533.5 296.28 L534.0 296.28 L534.5 296.28 L535.0 296.28 L535.5 296.28 L536.0 296.28 L536.5 296.28 L537.0 296.28 L537.5 296.28 L538.0 296.28 L538.5 296.28 L539.0 296.28 L539.5 296.28 L540.0 296.28 L540.5 296.28 L541.0 296.28 L541.5 296.28 L542.0 296.28 L542.5 296.28 L543.0 296.28 L543.5 296.28 L544.0 295.97 L544.5 295.83 L545.0 295.70 L545.5 295.83 L546.0 295.97 L546.5 296.28 L547.0 296.28 L547.5 296.28 L548.0 296.28 L548.5 296.28 L549.0 296.28 L549.5 296.28 L550.0 296.28 L550.5 296.28 L551.0 296.28 L551.5 296.28 L552.0 296.28 L552.5 296.28 L553.0 296.28 L553.5 296.28 L554.0 296.28 L554.5 296.28 L555.0 296.28 L555.5 296.28 L556.0 296.28 L556.5 296.28 L557.0 296.28 L557.5 296.28 L558.0 296.28 L558.5 296.28 L559.0 296.28 L559.5 296.28 L560.0 296.28 L560.5 296.28 L561.0 296.28 L561.5 296.28 L562.0 296.28 L562.5 296.28 L563.0 296.28 L563.5 296.28 L564.0 296.28 L564.5 296.28 L565.0 296.28 L565.5 296.28 L566.0 296.28 L566.5 296.28 L567.0 296.28 L567.5 296.28 L568.0 296.28 L568.5 296.28 L569.0 296.28 L569.5 296.28 L570.0 295.93 L570.5 295.77 L571.0 295.60 L571.5 295.77 L572.0 295.93 L572.5 296.28 L573.0 296.28 L573.5 296.28 L574.0 296.28 L574.5 296.28 L575.0 296.28 L575.5 296.28 L576.0 296.28 L576.5 296.28 L577.0 296.28 L577.5 296.28 L578.0 296.28 L578.5 296.28 L579.0 296.28 L579.5 296.28 L580.0 296.28 L580.5 296.28 L581.0 296.28 L581.5 296.28 L582.0 296.28 L582.5 296.28 L583.0 296.28 L583.5 296.28 L584.0 296.28 L584.5 296.28 L585.0 296.28 L585.5 296.28 L586.0 296.28 L586.5 296.28 L587.0 296.28 L587.5 296.28 L588.0 296.28 L588.5 296.28 L589.0 296.28 L589.5 296.28 L590.0 296.28 L590.5 296.28 L591.0 296.28 L591.5 296.28 L592.0 296.28 L592.5 296.28 L593.0 296.28 L593.5 296.28 L594.0 296.28 L594.5 296.28 L595.0 296.28 L595.5 296.28 L596.0 296.28 L596.5 296.28 L597.0 296.28 L597.5 296.28 L598.0 296.28 L598.5 296.28 L599.0 295.97 L599.5 295.83 L600.0 295.70 L600.5 295.83 L601.0 295.97 L601.5 296.28 L602.0 296.28 L602.5 296.28 L603.0 296.28 L603.5 296.28 L604.0 296.28 L604.5 296.28 L605.0 296.28 L605.5 296.28 L606.0 296.28 L606.5 296.28 L607.0 296.28 L607.5 296.28 L608.0 296.28 L608.5 296.28 L609.0 296.28 L609.5 296.28 L610.0 296.28 L610.5 296.28 L611.0 296.28 L611.5 296.28 L612.0 296.28 L612.5 296.28 L613.0 296.28 L613.5 296.28 L614.0 296.28 L614.5 296.28 L615.0 296.28 L615.5 296.28 L616.0 296.28 L616.5 296.28 L617.0 296.28 L617.5 296.28 L618.0 296.28 L618.5 296.28 L619.0 296.28 L619.5 296.03 L620.0 295.68 L620.5 295.34 L621.0 294.99 L621.5 294.65 L622.0 294.30 L622.5 294.65 L623.0 294.99 L623.5 295.34 L624.0 295.68 L624.5 296.03 L625.0 295.82 L625.5 295.55 L626.0 295.27 L626.5 295.00 L627.0 295.27 L627.5 295.55 L628.0 295.82 L628.5 296.28 L629.0 296.28 L629.5 296.28 L630.0 296.28 L630.5 296.28 L631.0 296.28 L631.5 296.28 L632.0 296.28 L632.5 296.28 L633.0 296.28 L633.5 296.28 L634.0 296.28 L634.5 296.28 L635.0 296.28 L635.5 296.28 L636.0 296.28 L636.5 296.28 L637.0 296.28 L637.5 296.28 L638.0 296.28 L638.5 296.28 L639.0 295.97 L639.5 295.83 L640.0 295.70 L640.5 295.83 L641.0 295.97 L641.5 296.28 L642.0 296.28 L642.5 296.28 L643.0 296.28 L643.5 296.28 L644.0 296.28 L644.5 296.28 L645.0 296.28 L645.5 296.28 L646.0 296.28 L646.5 296.28 L647.0 296.28 L647.5 296.28 L648.0 296.28 L648.5 296.28 L649.0 296.28 L649.5 296.28 L650.0 296.28 L650.5 296.28 L651.0 296.28 L651.5 296.28 L652.0 296.28 L652.5 296.28 L653.0 296.28 L653.5 296.28 L654.0 295.90 L654.5 295.70 L655.0 295.50 L655.5 295.70 L656.0 295.90 L656.5 296.28 L657.0 296.28 L657.5 296.28 L658.0 296.28 L658.5 296.28 L659.0 296.28 L659.5 296.28 L660.0 296.28 L660.5 296.28 L661.0 296.28 L661.5 296.28 L662.0 296.28 L662.5 296.28 L663.0 296.28 L663.5 296.28 L664.0 296.28 L664.5 296.28 L665.0 296.28 L665.5 296.28 L666.0 296.28 L666.5 296.28 L667.0 296.28 L667.5 296.28 L668.0 296.28 L668.5 296.28 L669.0 296.28 L669.5 296.28 L670.0 296.28 L670.5 296.28 L671.0 296.28 L671.5 296.28 L672.0 296.28 L672.5 296.28 L673.0 296.28 L673.5 296.28 L674.0 296.28 L674.5 296.28 L675.0 296.28 L675.5 296.28 L676.0 296.28 L676.5 296.28 L677.0 296.28 L677.5 296.28 L678.0 296.28 L678.5 296.28 L679.0 296.28 L679.5 296.28 L680.0 296.28 L680.5 296.28 L681.0 295.93 L681.5 295.77 L682.0 295.60 L682.5 295.77 L683.0 295.93 L683.5 296.28 L684.0 296.28 L684.5 296.28 L685.0 296.28 L685.5 296.28 L686.0 296.28 L686.5 296.28 L687.0 296.28 L687.5 296.28 L688.0 296.28 L688.5 296.28 L689.0 296.28 L689.5 296.28 L690.0 296.28 L690.5 296.28 L691.0 296.28 L691.5 296.28 L692.0 296.28 L692.5 296.28 L693.0 296.28 L693.5 296.28 L694.0 296.28 L694.5 296.28 L695.0 296.28 L695.5 296.28 L696.0 296.28 L696.5 296.28 L697.0 296.28 L697.5 296.28 L698.0 296.28 L698.5 296.28 L699.0 296.28 L699.5 296.28 L700.0 296.28 L700.5 296.28 L701.0 296.28 L701.5 296.28 L702.0 296.28 L702.5 296.28 L703.0 296.28 L703.5 296.28 L704.0 295.97 L704.5 295.83 L705.0 295.70 L705.5 295.83 L706.0 295.97 L706.5 296.28 L707.0 296.28 L707.5 296.28 L708.0 296.28 L708.5 296.28 L709.0 296.28 L709.5 296.28 L710.0 296.28 L710.5 296.28 L711.0 296.28 L711.5 296.28 L712.0 296.28 L712.5 296.28 L713.0 296.28 L713.5 296.28 L714.0 296.28 L714.5 296.28 L715.0 296.28 L715.5 296.28 L716.0 296.28 L716.5 296.28 L717.0 296.28 L717.5 296.28 L718.0 296.28 L718.5 296.28 L719.0 296.28 L719.5 296.28 L720.0 296.28 L720.5 296.28 L721.0 296.28 L721.5 296.28 L722.0 296.28 L722.0 296.52 L721.5 296.52 L721.0 296.52 L720.5 296.52 L720.0 296.52 L719.5 296.52 L719.0 296.52 L718.5 296.52 L718.0 296.52 L717.5 296.52 L717.0 296.52 L716.5 296.52 L716.0 296.52 L715.5 296.52 L715.0 296.52 L714.5 296.52 L714.0 296.52 L713.5 296.52 L713.0 296.52 L712.5 296.52 L712.0 296.52 L711.5 296.52 L711.0 296.52 L710.5 296.52 L710.0 296.52 L709.5 296.52 L709.0 296.52 L708.5 296.52 L708.0 296.52 L707.5 296.52 L707.0 296.52 L706.5 296.52 L706.0 296.83 L705.5 296.97 L705.0 297.10 L704.5 296.97 L704.0 296.83 L703.5 296.52 L703.0 296.52 L702.5 296.52 L702.0 296.52 L701.5 296.52 L701.0 296.52 L700.5 296.52 L700.0 296.52 L699.5 296.52 L699.0 296.52 L698.5 296.52 L698.0 296.52 L697.5 296.52 L697.0 296.52 L696.5 296.52 L696.0 296.52 L695.5 296.52 L695.0 296.52 L694.5 296.52 L694.0 296.52 L693.5 296.52 L693.0 296.52 L692.5 296.52 L692.0 296.52 L691.5 296.52 L691.0 296.52 L690.5 296.52 L690.0 296.52 L689.5 296.52 L689.0 296.52 L688.5 296.52 L688.0 296.52 L687.5 296.52 L687.0 296.52 L686.5 296.52 L686.0 296.52 L685.5 296.52 L685.0 296.52 L684.5 296.52 L684.0 296.52 L683.5 296.52 L683.0 296.87 L682.5 297.03 L682.0 297.20 L681.5 297.03 L681.0 296.87 L680.5 296.52 L680.0 296.52 L679.5 296.52 L679.0 296.52 L678.5 296.52 L678.0 296.52 L677.5 296.52 L677.0 296.52 L676.5 296.52 L676.0 296.52 L675.5 296.52 L675.0 296.52 L674.5 296.52 L674.0 296.52 L673.5 296.52 L673.0 296.52 L672.5 296.52 L672.0 296.52 L671.5 296.52 L671.0 296.52 L670.5 296.52 L670.0 296.52 L669.5 296.52 L669.0 296.52 L668.5 296.52 L668.0 296.52 L667.5 296.52 L667.0 296.52 L666.5 296.52 L666.0 296.52 L665.5 296.52 L665.0 296.52 L664.5 296.52 L664.0 296.52 L663.5 296.52 L663.0 296.52 L662.5 296.52 L662.0 296.52 L661.5 296.52 L661.0 296.52 L660.5 296.52 L660.0 296.52 L659.5 296.52 L659.0 296.52 L658.5 296.52 L658.0 296.52 L657.5 296.52 L657.0 296.52 L656.5 296.52 L656.0 296.90 L655.5 297.10 L655.0 297.30 L654.5 297.10 L654.0 296.90 L653.5 296.52 L653.0 296.52 L652.5 296.52 L652.0 296.52 L651.5 296.52 L651.0 296.52 L650.5 296.52 L650.0 296.52 L649.5 296.52 L649.0 296.52 L648.5 296.52 L648.0 296.52 L647.5 296.52 L647.0 296.52 L646.5 296.52 L646.0 296.52 L645.5 296.52 L645.0 296.52 L644.5 296.52 L644.0 296.52 L643.5 296.52 L643.0 296.52 L642.5 296.52 L642.0 296.52 L641.5 296.52 L641.0 296.83 L640.5 296.97 L640.0 297.10 L639.5 296.97 L639.0 296.83 L638.5 296.52 L638.0 296.52 L637.5 296.52 L637.0 296.52 L636.5 296.52 L636.0 296.52 L635.5 296.52 L635.0 296.52 L634.5 296.52 L634.0 296.52 L633.5 296.52 L633.0 296.52 L632.5 296.52 L632.0 296.52 L631.5 296.52 L631.0 296.52 L630.5 296.52 L630.0 296.52 L629.5 296.52 L629.0 296.52 L628.5 296.52 L628.0 296.97 L627.5 297.25 L627.0 297.52 L626.5 297.80 L626.0 297.52 L625.5 297.25 L625.0 296.97 L624.5 296.77 L624.0 297.12 L623.5 297.46 L623.0 297.81 L622.5 298.15 L622.0 298.50 L621.5 298.15 L621.0 297.81 L620.5 297.46 L620.0 297.12 L619.5 296.77 L619.0 296.52 L618.5 296.52 L618.0 296.52 L617.5 296.52 L617.0 296.52 L616.5 296.52 L616.0 296.52 L615.5 296.52 L615.0 296.52 L614.5 296.52 L614.0 296.52 L613.5 296.52 L613.0 296.52 L612.5 296.52 L612.0 296.52 L611.5 296.52 L611.0 296.52 L610.5 296.52 L610.0 296.52 L609.5 296.52 L609.0 296.52 L608.5 296.52 L608.0 296.52 L607.5 296.52 L607.0 296.52 L606.5 296.52 L606.0 296.52 L605.5 296.52 L605.0 296.52 L604.5 296.52 L604.0 296.52 L603.5 296.52 L603.0 296.52 L602.5 296.52 L602.0 296.52 L601.5 296.52 L601.0 296.83 L600.5 296.97 L600.0 297.10 L599.5 296.97 L599.0 296.83 L598.5 296.52 L598.0 296.52 L597.5 296.52 L597.0 296.52 L596.5 296.52 L596.0 296.52 L595.5 296.52 L595.0 296.52 L594.5 296.52 L594.0 296.52 L593.5 296.52 L593.0 296.52 L592.5 296.52 L592.0 296.52 L591.5 296.52 L591.0 296.52 L590.5 296.52 L590.0 296.52 L589.5 296.52 L589.0 296.52 L588.5 296.52 L588.0 296.52 L587.5 296.52 L587.0 296.52 L586.5 296.52 L586.0 296.52 L585.5 296.52 L585.0 296.52 L584.5 296.52 L584.0 296.52 L583.5 296.52 L583.0 296.52 L582.5 296.52 L582.0 296.52 L581.5 296.52 L581.0 296.52 L580.5 296.52 L580.0 296.52 L579.5 296.52 L579.0 296.52 L578.5 296.52 L578.0 296.52 L577.5 296.52 L577.0 296.52 L576.5 296.52 L576.0 296.52 L575.5 296.52 L575.0 296.52 L574.5 296.52 L574.0 296.52 L573.5 296.52 L573.0 296.52 L572.5 296.52 L572.0 296.87 L571.5 297.03 L571.0 297.20 L570.5 297.03 L570.0 296.87 L569.5 296.52 L569.0 296.52 L568.5 296.52 L568.0 296.52 L567.5 296.52 L567.0 296.52 L566.5 296.52 L566.0 296.52 L565.5 296.52 L565.0 296.52 L564.5 296.52 L564.0 296.52 L563.5 296.52 L563.0 296.52 L562.5 296.52 L562.0 296.52 L561.5 296.52 L561.0 296.52 L560.5 296.52 L560.0 296.52 L559.5 296.52 L559.0 296.52 L558.5 296.52 L558.0 296.52 L557.5 296.52 L557.0 296.52 L556.5 296.52 L556.0 296.52 L555.5 296.52 L555.0 296.52 L554.5 296.52 L554.0 296.52 L553.5 296.52 L553.0 296.52 L552.5 296.52 L552.0 296.52 L551.5 296.52 L551.0 296.52 L550.5 296.52 L550.0 296.52 L549.5 296.52 L549.0 296.52 L548.5 296.52 L548.0 296.52 L547.5 296.52 L547.0 296.52 L546.5 296.52 L546.0 296.83 L545.5 296.97 L545.0 297.10 L544.5 296.97 L544.0 296.83 L543.5 296.52 L543.0 296.52 L542.5 296.52 L542.0 296.52 L541.5 296.52 L541.0 296.52 L540.5 296.52 L540.0 296.52 L539.5 296.52 L539.0 296.52 L538.5 296.52 L538.0 296.52 L537.5 296.52 L537.0 296.52 L536.5 296.52 L536.0 296.52 L535.5 296.52 L535.0 296.52 L534.5 296.52 L534.0 296.52 L533.5 296.52 L533.0 296.52 L532.5 296.52 L532.0 296.52 L531.5 296.52 L531.0 296.52 L530.5 296.52 L530.0 296.52 L529.5 296.52 L529.0 296.52 L528.5 296.52 L528.0 296.52 L527.5 296.52 L527.0 296.52 L526.5 296.52 L526.0 296.52 L525.5 296.52 L525.0 296.52 L524.5 296.52 L524.0 296.52 L523.5 296.52 L523.0 296.52 L522.5 296.52 L522.0 296.52 L521.5 296.52 L521.0 296.82 L520.5 296.93 L520.0 297.05 L519.5 296.93 L519.0 296.82 L518.5 296.52 L518.0 296.52 L517.5 296.52 L517.0 296.52 L516.5 296.52 L516.0 296.52 L515.5 296.52 L515.0 296.52 L514.5 296.52 L514.0 296.52 L513.5 296.52 L513.0 296.52 L512.5 296.52 L512.0 296.52 L511.5 296.52 L511.0 296.52 L510.5 296.52 L510.0 296.52 L509.5 296.52 L509.0 296.52 L508.5 296.52 L508.0 296.52 L507.5 296.52 L507.0 296.52 L506.5 296.52 L506.0 296.52 L505.5 296.52 L505.0 296.52 L504.5 296.52 L504.0 296.52 L503.5 296.52 L503.0 296.52 L502.5 296.52 L502.0 296.52 L501.5 296.52 L501.0 296.52 L500.5 296.52 L500.0 296.52 L499.5 296.52 L499.0 296.52 L498.5 296.52 L498.0 296.52 L497.5 296.52 L497.0 296.52 L496.5 296.52 L496.0 296.52 L495.5 296.52 L495.0 296.52 L494.5 296.52 L494.0 296.52 L493.5 296.52 L493.0 296.52 L492.5 296.52 L492.0 296.52 L491.5 296.52 L491.0 296.52 L490.5 296.52 L490.0 296.52 L489.5 296.52 L489.0 296.52 L488.5 296.52 L488.0 296.52 L487.5 296.52 L487.0 296.52 L486.5 296.52 L486.0 296.52 L485.5 296.52 L485.0 296.83 L484.5 296.97 L484.0 297.10 L483.5 296.97 L483.0 296.83 L482.5 296.52 L482.0 296.52 L481.5 296.52 L481.0 296.52 L480.5 296.52 L480.0 296.52 L479.5 296.52 L479.0 296.52 L478.5 296.52 L478.0 296.52 L477.5 296.52 L477.0 296.52 L476.5 296.52 L476.0 296.52 L475.5 296.52 L475.0 296.52 L474.5 296.52 L474.0 296.52 L473.5 296.52 L473.0 296.52 L472.5 296.52 L472.0 296.52 L471.5 296.52 L471.0 296.83 L470.5 296.97 L470.0 297.10 L469.5 296.97 L469.0 296.83 L468.5 296.52 L468.0 296.52 L467.5 296.52 L467.0 296.52 L466.5 296.52 L466.0 296.52 L465.5 296.52 L465.0 296.95 L464.5 297.26 L464.0 297.57 L463.5 297.89 L463.0 298.20 L462.5 297.89 L462.0 297.57 L461.5 297.26 L461.0 296.95 L460.5 296.52 L460.0 296.52 L459.5 296.52 L459.0 296.52 L458.5 296.52 L458.0 296.52 L457.5 296.52 L457.0 296.52 L456.5 296.52 L456.0 296.52 L455.5 296.52 L455.0 296.52 L454.5 296.52 L454.0 296.52 L453.5 296.52 L453.0 296.52 L452.5 296.52 L452.0 296.52 L451.5 296.52 L451.0 296.52 L450.5 296.52 L450.0 296.52 L449.5 296.52 L449.0 296.52 L448.5 296.52 L448.0 296.52 L447.5 296.52 L447.0 296.52 L446.5 296.52 L446.0 296.52 L445.5 296.52 L445.0 296.52 L444.5 296.52 L444.0 296.52 L443.5 296.52 L443.0 296.52 L442.5 296.52 L442.0 296.52 L441.5 296.52 L441.0 296.52 L440.5 296.52 L440.0 296.52 L439.5 296.52 L439.0 296.52 L438.5 296.52 L438.0 296.52 L437.5 296.52 L437.0 296.52 L436.5 296.52 L436.0 296.52 L435.5 296.52 L435.0 296.52 L434.5 296.52 L434.0 296.52 L433.5 296.52 L433.0 296.52 L432.5 296.52 L432.0 296.52 L431.5 296.52 L431.0 296.52 L430.5 296.52 L430.0 296.52 L429.5 296.52 L429.0 296.52 L428.5 296.52 L428.0 296.52 L427.5 296.52 L427.0 296.52 L426.5 296.52 L426.0 296.52 L425.5 296.52 L425.0 296.52 L424.5 296.52 L424.0 296.52 L423.5 296.52 L423.0 296.52 L422.5 296.52 L422.0 296.52 L421.5 296.52 L421.0 296.52 L420.5 296.52 L420.0 296.52 L419.5 296.52 L419.0 296.52 L418.5 296.52 L418.0 296.52 L417.5 296.52 L417.0 296.52 L416.5 296.52 L416.0 296.52 L415.5 296.52 L415.0 296.52 L414.5 296.52 L414.0 296.52 L413.5 296.52 L413.0 296.52 L412.5 296.52 L412.0 296.52 L411.5 296.52 L411.0 296.52 L410.5 296.52 L410.0 296.52 L409.5 296.52 L409.0 296.52 L408.5 296.52 L408.0 296.52Z" fill="#b0b0b0" stroke="#404040" stroke-width="0.9" stroke-linejoin="round"/><path d="M408 342.4 H722" stroke="#3a3a3a" stroke-width="0.9" fill="none"/><path d="M408.0 342.28 L408.5 342.28 L409.0 342.28 L409.5 342.28 L410.0 342.28 L410.5 342.28 L411.0 342.28 L411.5 342.28 L412.0 342.28 L412.5 342.28 L413.0 342.28 L413.5 342.28 L414.0 342.28 L414.5 342.28 L415.0 342.28 L415.5 342.28 L416.0 342.28 L416.5 342.28 L417.0 342.28 L417.5 342.28 L418.0 342.28 L418.5 342.28 L419.0 342.28 L419.5 342.28 L420.0 342.28 L420.5 342.28 L421.0 342.28 L421.5 342.28 L422.0 342.28 L422.5 342.28 L423.0 342.28 L423.5 342.28 L424.0 342.28 L424.5 342.28 L425.0 342.28 L425.5 342.28 L426.0 342.28 L426.5 342.28 L427.0 342.28 L427.5 342.28 L428.0 342.28 L428.5 342.28 L429.0 342.28 L429.5 342.28 L430.0 342.28 L430.5 342.28 L431.0 342.28 L431.5 342.28 L432.0 342.28 L432.5 342.28 L433.0 342.28 L433.5 342.28 L434.0 342.28 L434.5 342.28 L435.0 342.28 L435.5 342.28 L436.0 342.28 L436.5 342.28 L437.0 342.28 L437.5 342.28 L438.0 342.28 L438.5 342.28 L439.0 342.28 L439.5 342.28 L440.0 342.28 L440.5 342.28 L441.0 342.28 L441.5 342.28 L442.0 342.28 L442.5 342.28 L443.0 342.28 L443.5 342.28 L444.0 342.28 L444.5 342.28 L445.0 342.28 L445.5 342.28 L446.0 342.28 L446.5 342.28 L447.0 342.28 L447.5 342.28 L448.0 342.28 L448.5 342.28 L449.0 342.28 L449.5 342.28 L450.0 342.28 L450.5 342.28 L451.0 342.28 L451.5 342.28 L452.0 342.28 L452.5 342.28 L453.0 342.28 L453.5 342.28 L454.0 342.28 L454.5 342.28 L455.0 342.28 L455.5 342.28 L456.0 342.28 L456.5 342.28 L457.0 342.28 L457.5 342.28 L458.0 342.28 L458.5 342.28 L459.0 342.28 L459.5 342.28 L460.0 342.28 L460.5 342.28 L461.0 342.28 L461.5 342.28 L462.0 341.93 L462.5 341.77 L463.0 341.60 L463.5 341.77 L464.0 341.93 L464.5 342.28 L465.0 342.28 L465.5 342.28 L466.0 342.28 L466.5 342.28 L467.0 342.28 L467.5 342.28 L468.0 342.28 L468.5 342.28 L469.0 342.28 L469.5 342.28 L470.0 342.28 L470.5 342.28 L471.0 342.28 L471.5 342.28 L472.0 342.28 L472.5 342.28 L473.0 342.28 L473.5 342.28 L474.0 342.28 L474.5 342.28 L475.0 342.28 L475.5 342.28 L476.0 342.28 L476.5 342.28 L477.0 342.28 L477.5 342.28 L478.0 342.28 L478.5 342.28 L479.0 342.28 L479.5 342.28 L480.0 342.28 L480.5 342.28 L481.0 342.28 L481.5 342.28 L482.0 342.28 L482.5 342.28 L483.0 342.28 L483.5 342.28 L484.0 342.28 L484.5 342.28 L485.0 342.28 L485.5 342.28 L486.0 342.28 L486.5 342.28 L487.0 342.28 L487.5 342.28 L488.0 342.28 L488.5 342.28 L489.0 342.28 L489.5 342.28 L490.0 342.28 L490.5 342.28 L491.0 342.28 L491.5 342.28 L492.0 342.28 L492.5 342.28 L493.0 342.28 L493.5 342.28 L494.0 342.28 L494.5 342.28 L495.0 342.28 L495.5 342.28 L496.0 342.28 L496.5 342.28 L497.0 342.28 L497.5 342.28 L498.0 342.28 L498.5 342.28 L499.0 342.00 L499.5 341.90 L500.0 341.80 L500.5 341.90 L501.0 342.00 L501.5 342.28 L502.0 342.28 L502.5 342.28 L503.0 342.28 L503.5 342.28 L504.0 342.28 L504.5 342.28 L505.0 342.28 L505.5 342.28 L506.0 342.28 L506.5 342.28 L507.0 342.28 L507.5 342.28 L508.0 342.28 L508.5 342.28 L509.0 342.28 L509.5 342.28 L510.0 342.28 L510.5 342.28 L511.0 342.28 L511.5 342.28 L512.0 342.28 L512.5 342.28 L513.0 342.28 L513.5 342.28 L514.0 342.28 L514.5 342.28 L515.0 342.28 L515.5 342.28 L516.0 342.28 L516.5 342.28 L517.0 342.28 L517.5 342.28 L518.0 342.28 L518.5 342.28 L519.0 342.28 L519.5 342.28 L520.0 342.28 L520.5 342.28 L521.0 342.28 L521.5 342.28 L522.0 342.28 L522.5 342.28 L523.0 342.28 L523.5 342.28 L524.0 342.28 L524.5 342.28 L525.0 342.28 L525.5 342.28 L526.0 342.28 L526.5 342.28 L527.0 342.28 L527.5 342.28 L528.0 342.28 L528.5 342.28 L529.0 342.28 L529.5 342.28 L530.0 342.28 L530.5 342.28 L531.0 342.28 L531.5 342.28 L532.0 342.28 L532.5 342.28 L533.0 342.28 L533.5 342.28 L534.0 342.28 L534.5 342.28 L535.0 342.28 L535.5 342.28 L536.0 342.28 L536.5 342.28 L537.0 342.28 L537.5 342.28 L538.0 342.28 L538.5 342.28 L539.0 342.28 L539.5 342.28 L540.0 342.28 L540.5 342.28 L541.0 342.28 L541.5 342.28 L542.0 342.28 L542.5 342.28 L543.0 342.28 L543.5 342.28 L544.0 342.28 L544.5 342.28 L545.0 342.28 L545.5 342.28 L546.0 342.28 L546.5 342.28 L547.0 342.28 L547.5 342.28 L548.0 342.28 L548.5 342.28 L549.0 342.28 L549.5 342.28 L550.0 342.28 L550.5 342.28 L551.0 342.28 L551.5 342.28 L552.0 342.28 L552.5 342.28 L553.0 342.28 L553.5 342.28 L554.0 342.28 L554.5 342.28 L555.0 342.28 L555.5 342.28 L556.0 342.28 L556.5 342.28 L557.0 342.28 L557.5 342.28 L558.0 342.28 L558.5 342.28 L559.0 342.28 L559.5 342.28 L560.0 342.28 L560.5 342.28 L561.0 342.28 L561.5 342.28 L562.0 342.28 L562.5 342.28 L563.0 342.28 L563.5 342.28 L564.0 342.28 L564.5 342.28 L565.0 342.28 L565.5 342.28 L566.0 342.28 L566.5 342.28 L567.0 342.28 L567.5 342.28 L568.0 342.28 L568.5 342.28 L569.0 342.28 L569.5 342.28 L570.0 342.00 L570.5 341.90 L571.0 341.80 L571.5 341.90 L572.0 342.00 L572.5 342.28 L573.0 342.28 L573.5 342.28 L574.0 342.28 L574.5 342.28 L575.0 342.28 L575.5 342.28 L576.0 342.28 L576.5 342.28 L577.0 342.28 L577.5 342.28 L578.0 342.28 L578.5 342.28 L579.0 342.28 L579.5 342.28 L580.0 342.28 L580.5 342.28 L581.0 342.28 L581.5 342.28 L582.0 342.28 L582.5 342.28 L583.0 342.28 L583.5 342.28 L584.0 342.28 L584.5 342.28 L585.0 342.28 L585.5 342.28 L586.0 342.28 L586.5 342.28 L587.0 342.28 L587.5 342.28 L588.0 342.28 L588.5 342.28 L589.0 342.28 L589.5 342.28 L590.0 342.28 L590.5 342.28 L591.0 342.28 L591.5 342.28 L592.0 342.28 L592.5 342.28 L593.0 342.28 L593.5 342.28 L594.0 342.28 L594.5 342.28 L595.0 342.28 L595.5 342.28 L596.0 342.28 L596.5 342.28 L597.0 342.28 L597.5 342.28 L598.0 342.28 L598.5 342.28 L599.0 342.28 L599.5 342.28 L600.0 342.28 L600.5 342.28 L601.0 342.28 L601.5 342.28 L602.0 342.28 L602.5 342.28 L603.0 342.28 L603.5 342.28 L604.0 342.28 L604.5 342.28 L605.0 342.28 L605.5 342.28 L606.0 342.28 L606.5 342.28 L607.0 342.28 L607.5 342.28 L608.0 342.28 L608.5 342.28 L609.0 342.28 L609.5 342.28 L610.0 342.28 L610.5 342.28 L611.0 342.28 L611.5 342.28 L612.0 342.28 L612.5 342.28 L613.0 342.28 L613.5 342.28 L614.0 342.28 L614.5 342.28 L615.0 342.28 L615.5 342.28 L616.0 342.28 L616.5 342.28 L617.0 342.28 L617.5 342.28 L618.0 342.28 L618.5 342.28 L619.0 342.28 L619.5 342.28 L620.0 342.28 L620.5 341.95 L621.0 341.80 L621.5 341.65 L622.0 341.50 L622.5 341.65 L623.0 341.80 L623.5 341.95 L624.0 342.28 L624.5 342.28 L625.0 342.28 L625.5 342.28 L626.0 342.28 L626.5 342.28 L627.0 342.28 L627.5 342.28 L628.0 342.28 L628.5 342.28 L629.0 342.28 L629.5 342.28 L630.0 342.28 L630.5 342.28 L631.0 342.28 L631.5 342.28 L632.0 342.28 L632.5 342.28 L633.0 342.28 L633.5 342.28 L634.0 342.28 L634.5 342.28 L635.0 342.28 L635.5 342.28 L636.0 342.28 L636.5 342.28 L637.0 342.28 L637.5 342.28 L638.0 342.28 L638.5 342.28 L639.0 342.28 L639.5 342.28 L640.0 342.28 L640.5 342.28 L641.0 342.28 L641.5 342.28 L642.0 342.28 L642.5 342.28 L643.0 342.28 L643.5 342.28 L644.0 342.28 L644.5 342.28 L645.0 342.28 L645.5 342.28 L646.0 342.28 L646.5 342.28 L647.0 342.28 L647.5 342.28 L648.0 342.28 L648.5 342.28 L649.0 342.28 L649.5 342.28 L650.0 342.28 L650.5 342.28 L651.0 342.28 L651.5 342.28 L652.0 342.28 L652.5 342.28 L653.0 342.28 L653.5 342.28 L654.0 341.97 L654.5 341.83 L655.0 341.70 L655.5 341.83 L656.0 341.97 L656.5 342.28 L657.0 342.28 L657.5 342.28 L658.0 342.28 L658.5 342.28 L659.0 342.28 L659.5 342.28 L660.0 342.28 L660.5 342.28 L661.0 342.28 L661.5 342.28 L662.0 342.28 L662.5 342.28 L663.0 342.28 L663.5 342.28 L664.0 342.28 L664.5 342.28 L665.0 342.28 L665.5 342.28 L666.0 342.28 L666.5 342.28 L667.0 342.28 L667.5 342.28 L668.0 342.28 L668.5 342.28 L669.0 342.28 L669.5 342.28 L670.0 342.28 L670.5 342.28 L671.0 342.28 L671.5 342.28 L672.0 342.28 L672.5 342.28 L673.0 342.28 L673.5 342.28 L674.0 342.28 L674.5 342.28 L675.0 342.28 L675.5 342.28 L676.0 342.28 L676.5 342.28 L677.0 342.28 L677.5 342.28 L678.0 342.28 L678.5 342.28 L679.0 342.28 L679.5 342.28 L680.0 342.28 L680.5 342.28 L681.0 342.28 L681.5 342.28 L682.0 342.28 L682.5 342.28 L683.0 342.28 L683.5 342.28 L684.0 342.28 L684.5 342.28 L685.0 342.28 L685.5 342.28 L686.0 342.28 L686.5 342.28 L687.0 342.28 L687.5 342.28 L688.0 342.28 L688.5 342.28 L689.0 342.28 L689.5 342.28 L690.0 342.28 L690.5 342.28 L691.0 342.28 L691.5 342.28 L692.0 342.28 L692.5 342.28 L693.0 342.28 L693.5 342.28 L694.0 342.28 L694.5 342.28 L695.0 342.28 L695.5 342.28 L696.0 342.28 L696.5 342.28 L697.0 342.28 L697.5 342.28 L698.0 342.28 L698.5 342.28 L699.0 342.00 L699.5 341.90 L700.0 341.80 L700.5 341.90 L701.0 342.00 L701.5 342.28 L702.0 342.28 L702.5 342.28 L703.0 342.28 L703.5 342.28 L704.0 342.28 L704.5 342.28 L705.0 342.28 L705.5 342.28 L706.0 342.28 L706.5 342.28 L707.0 342.28 L707.5 342.28 L708.0 342.28 L708.5 342.28 L709.0 342.28 L709.5 342.28 L710.0 342.28 L710.5 342.28 L711.0 342.28 L711.5 342.28 L712.0 342.28 L712.5 342.28 L713.0 342.28 L713.5 342.28 L714.0 342.28 L714.5 342.28 L715.0 342.28 L715.5 342.28 L716.0 342.28 L716.5 342.28 L717.0 342.28 L717.5 342.28 L718.0 342.28 L718.5 342.28 L719.0 342.28 L719.5 342.28 L720.0 342.28 L720.5 342.28 L721.0 342.28 L721.5 342.28 L722.0 342.28 L722.0 342.52 L721.5 342.52 L721.0 342.52 L720.5 342.52 L720.0 342.52 L719.5 342.52 L719.0 342.52 L718.5 342.52 L718.0 342.52 L717.5 342.52 L717.0 342.52 L716.5 342.52 L716.0 342.52 L715.5 342.52 L715.0 342.52 L714.5 342.52 L714.0 342.52 L713.5 342.52 L713.0 342.52 L712.5 342.52 L712.0 342.52 L711.5 342.52 L711.0 342.52 L710.5 342.52 L710.0 342.52 L709.5 342.52 L709.0 342.52 L708.5 342.52 L708.0 342.52 L707.5 342.52 L707.0 342.52 L706.5 342.52 L706.0 342.52 L705.5 342.52 L705.0 342.52 L704.5 342.52 L704.0 342.52 L703.5 342.52 L703.0 342.52 L702.5 342.52 L702.0 342.52 L701.5 342.52 L701.0 342.80 L700.5 342.90 L700.0 343.00 L699.5 342.90 L699.0 342.80 L698.5 342.52 L698.0 342.52 L697.5 342.52 L697.0 342.52 L696.5 342.52 L696.0 342.52 L695.5 342.52 L695.0 342.52 L694.5 342.52 L694.0 342.52 L693.5 342.52 L693.0 342.52 L692.5 342.52 L692.0 342.52 L691.5 342.52 L691.0 342.52 L690.5 342.52 L690.0 342.52 L689.5 342.52 L689.0 342.52 L688.5 342.52 L688.0 342.52 L687.5 342.52 L687.0 342.52 L686.5 342.52 L686.0 342.52 L685.5 342.52 L685.0 342.52 L684.5 342.52 L684.0 342.52 L683.5 342.52 L683.0 342.52 L682.5 342.52 L682.0 342.52 L681.5 342.52 L681.0 342.52 L680.5 342.52 L680.0 342.52 L679.5 342.52 L679.0 342.52 L678.5 342.52 L678.0 342.52 L677.5 342.52 L677.0 342.52 L676.5 342.52 L676.0 342.52 L675.5 342.52 L675.0 342.52 L674.5 342.52 L674.0 342.52 L673.5 342.52 L673.0 342.52 L672.5 342.52 L672.0 342.52 L671.5 342.52 L671.0 342.52 L670.5 342.52 L670.0 342.52 L669.5 342.52 L669.0 342.52 L668.5 342.52 L668.0 342.52 L667.5 342.52 L667.0 342.52 L666.5 342.52 L666.0 342.52 L665.5 342.52 L665.0 342.52 L664.5 342.52 L664.0 342.52 L663.5 342.52 L663.0 342.52 L662.5 342.52 L662.0 342.52 L661.5 342.52 L661.0 342.52 L660.5 342.52 L660.0 342.52 L659.5 342.52 L659.0 342.52 L658.5 342.52 L658.0 342.52 L657.5 342.52 L657.0 342.52 L656.5 342.52 L656.0 342.83 L655.5 342.97 L655.0 343.10 L654.5 342.97 L654.0 342.83 L653.5 342.52 L653.0 342.52 L652.5 342.52 L652.0 342.52 L651.5 342.52 L651.0 342.52 L650.5 342.52 L650.0 342.52 L649.5 342.52 L649.0 342.52 L648.5 342.52 L648.0 342.52 L647.5 342.52 L647.0 342.52 L646.5 342.52 L646.0 342.52 L645.5 342.52 L645.0 342.52 L644.5 342.52 L644.0 342.52 L643.5 342.52 L643.0 342.52 L642.5 342.52 L642.0 342.52 L641.5 342.52 L641.0 342.52 L640.5 342.52 L640.0 342.52 L639.5 342.52 L639.0 342.52 L638.5 342.52 L638.0 342.52 L637.5 342.52 L637.0 342.52 L636.5 342.52 L636.0 342.52 L635.5 342.52 L635.0 342.52 L634.5 342.52 L634.0 342.52 L633.5 342.52 L633.0 342.52 L632.5 342.52 L632.0 342.52 L631.5 342.52 L631.0 342.52 L630.5 342.52 L630.0 342.52 L629.5 342.52 L629.0 342.52 L628.5 342.52 L628.0 342.52 L627.5 342.52 L627.0 342.52 L626.5 342.52 L626.0 342.52 L625.5 342.52 L625.0 342.52 L624.5 342.52 L624.0 342.52 L623.5 342.85 L623.0 343.00 L622.5 343.15 L622.0 343.30 L621.5 343.15 L621.0 343.00 L620.5 342.85 L620.0 342.52 L619.5 342.52 L619.0 342.52 L618.5 342.52 L618.0 342.52 L617.5 342.52 L617.0 342.52 L616.5 342.52 L616.0 342.52 L615.5 342.52 L615.0 342.52 L614.5 342.52 L614.0 342.52 L613.5 342.52 L613.0 342.52 L612.5 342.52 L612.0 342.52 L611.5 342.52 L611.0 342.52 L610.5 342.52 L610.0 342.52 L609.5 342.52 L609.0 342.52 L608.5 342.52 L608.0 342.52 L607.5 342.52 L607.0 342.52 L606.5 342.52 L606.0 342.52 L605.5 342.52 L605.0 342.52 L604.5 342.52 L604.0 342.52 L603.5 342.52 L603.0 342.52 L602.5 342.52 L602.0 342.52 L601.5 342.52 L601.0 342.52 L600.5 342.52 L600.0 342.52 L599.5 342.52 L599.0 342.52 L598.5 342.52 L598.0 342.52 L597.5 342.52 L597.0 342.52 L596.5 342.52 L596.0 342.52 L595.5 342.52 L595.0 342.52 L594.5 342.52 L594.0 342.52 L593.5 342.52 L593.0 342.52 L592.5 342.52 L592.0 342.52 L591.5 342.52 L591.0 342.52 L590.5 342.52 L590.0 342.52 L589.5 342.52 L589.0 342.52 L588.5 342.52 L588.0 342.52 L587.5 342.52 L587.0 342.52 L586.5 342.52 L586.0 342.52 L585.5 342.52 L585.0 342.52 L584.5 342.52 L584.0 342.52 L583.5 342.52 L583.0 342.52 L582.5 342.52 L582.0 342.52 L581.5 342.52 L581.0 342.52 L580.5 342.52 L580.0 342.52 L579.5 342.52 L579.0 342.52 L578.5 342.52 L578.0 342.52 L577.5 342.52 L577.0 342.52 L576.5 342.52 L576.0 342.52 L575.5 342.52 L575.0 342.52 L574.5 342.52 L574.0 342.52 L573.5 342.52 L573.0 342.52 L572.5 342.52 L572.0 342.80 L571.5 342.90 L571.0 343.00 L570.5 342.90 L570.0 342.80 L569.5 342.52 L569.0 342.52 L568.5 342.52 L568.0 342.52 L567.5 342.52 L567.0 342.52 L566.5 342.52 L566.0 342.52 L565.5 342.52 L565.0 342.52 L564.5 342.52 L564.0 342.52 L563.5 342.52 L563.0 342.52 L562.5 342.52 L562.0 342.52 L561.5 342.52 L561.0 342.52 L560.5 342.52 L560.0 342.52 L559.5 342.52 L559.0 342.52 L558.5 342.52 L558.0 342.52 L557.5 342.52 L557.0 342.52 L556.5 342.52 L556.0 342.52 L555.5 342.52 L555.0 342.52 L554.5 342.52 L554.0 342.52 L553.5 342.52 L553.0 342.52 L552.5 342.52 L552.0 342.52 L551.5 342.52 L551.0 342.52 L550.5 342.52 L550.0 342.52 L549.5 342.52 L549.0 342.52 L548.5 342.52 L548.0 342.52 L547.5 342.52 L547.0 342.52 L546.5 342.52 L546.0 342.52 L545.5 342.52 L545.0 342.52 L544.5 342.52 L544.0 342.52 L543.5 342.52 L543.0 342.52 L542.5 342.52 L542.0 342.52 L541.5 342.52 L541.0 342.52 L540.5 342.52 L540.0 342.52 L539.5 342.52 L539.0 342.52 L538.5 342.52 L538.0 342.52 L537.5 342.52 L537.0 342.52 L536.5 342.52 L536.0 342.52 L535.5 342.52 L535.0 342.52 L534.5 342.52 L534.0 342.52 L533.5 342.52 L533.0 342.52 L532.5 342.52 L532.0 342.52 L531.5 342.52 L531.0 342.52 L530.5 342.52 L530.0 342.52 L529.5 342.52 L529.0 342.52 L528.5 342.52 L528.0 342.52 L527.5 342.52 L527.0 342.52 L526.5 342.52 L526.0 342.52 L525.5 342.52 L525.0 342.52 L524.5 342.52 L524.0 342.52 L523.5 342.52 L523.0 342.52 L522.5 342.52 L522.0 342.52 L521.5 342.52 L521.0 342.52 L520.5 342.52 L520.0 342.52 L519.5 342.52 L519.0 342.52 L518.5 342.52 L518.0 342.52 L517.5 342.52 L517.0 342.52 L516.5 342.52 L516.0 342.52 L515.5 342.52 L515.0 342.52 L514.5 342.52 L514.0 342.52 L513.5 342.52 L513.0 342.52 L512.5 342.52 L512.0 342.52 L511.5 342.52 L511.0 342.52 L510.5 342.52 L510.0 342.52 L509.5 342.52 L509.0 342.52 L508.5 342.52 L508.0 342.52 L507.5 342.52 L507.0 342.52 L506.5 342.52 L506.0 342.52 L505.5 342.52 L505.0 342.52 L504.5 342.52 L504.0 342.52 L503.5 342.52 L503.0 342.52 L502.5 342.52 L502.0 342.52 L501.5 342.52 L501.0 342.80 L500.5 342.90 L500.0 343.00 L499.5 342.90 L499.0 342.80 L498.5 342.52 L498.0 342.52 L497.5 342.52 L497.0 342.52 L496.5 342.52 L496.0 342.52 L495.5 342.52 L495.0 342.52 L494.5 342.52 L494.0 342.52 L493.5 342.52 L493.0 342.52 L492.5 342.52 L492.0 342.52 L491.5 342.52 L491.0 342.52 L490.5 342.52 L490.0 342.52 L489.5 342.52 L489.0 342.52 L488.5 342.52 L488.0 342.52 L487.5 342.52 L487.0 342.52 L486.5 342.52 L486.0 342.52 L485.5 342.52 L485.0 342.52 L484.5 342.52 L484.0 342.52 L483.5 342.52 L483.0 342.52 L482.5 342.52 L482.0 342.52 L481.5 342.52 L481.0 342.52 L480.5 342.52 L480.0 342.52 L479.5 342.52 L479.0 342.52 L478.5 342.52 L478.0 342.52 L477.5 342.52 L477.0 342.52 L476.5 342.52 L476.0 342.52 L475.5 342.52 L475.0 342.52 L474.5 342.52 L474.0 342.52 L473.5 342.52 L473.0 342.52 L472.5 342.52 L472.0 342.52 L471.5 342.52 L471.0 342.52 L470.5 342.52 L470.0 342.52 L469.5 342.52 L469.0 342.52 L468.5 342.52 L468.0 342.52 L467.5 342.52 L467.0 342.52 L466.5 342.52 L466.0 342.52 L465.5 342.52 L465.0 342.52 L464.5 342.52 L464.0 342.87 L463.5 343.03 L463.0 343.20 L462.5 343.03 L462.0 342.87 L461.5 342.52 L461.0 342.52 L460.5 342.52 L460.0 342.52 L459.5 342.52 L459.0 342.52 L458.5 342.52 L458.0 342.52 L457.5 342.52 L457.0 342.52 L456.5 342.52 L456.0 342.52 L455.5 342.52 L455.0 342.52 L454.5 342.52 L454.0 342.52 L453.5 342.52 L453.0 342.52 L452.5 342.52 L452.0 342.52 L451.5 342.52 L451.0 342.52 L450.5 342.52 L450.0 342.52 L449.5 342.52 L449.0 342.52 L448.5 342.52 L448.0 342.52 L447.5 342.52 L447.0 342.52 L446.5 342.52 L446.0 342.52 L445.5 342.52 L445.0 342.52 L444.5 342.52 L444.0 342.52 L443.5 342.52 L443.0 342.52 L442.5 342.52 L442.0 342.52 L441.5 342.52 L441.0 342.52 L440.5 342.52 L440.0 342.52 L439.5 342.52 L439.0 342.52 L438.5 342.52 L438.0 342.52 L437.5 342.52 L437.0 342.52 L436.5 342.52 L436.0 342.52 L435.5 342.52 L435.0 342.52 L434.5 342.52 L434.0 342.52 L433.5 342.52 L433.0 342.52 L432.5 342.52 L432.0 342.52 L431.5 342.52 L431.0 342.52 L430.5 342.52 L430.0 342.52 L429.5 342.52 L429.0 342.52 L428.5 342.52 L428.0 342.52 L427.5 342.52 L427.0 342.52 L426.5 342.52 L426.0 342.52 L425.5 342.52 L425.0 342.52 L424.5 342.52 L424.0 342.52 L423.5 342.52 L423.0 342.52 L422.5 342.52 L422.0 342.52 L421.5 342.52 L421.0 342.52 L420.5 342.52 L420.0 342.52 L419.5 342.52 L419.0 342.52 L418.5 342.52 L418.0 342.52 L417.5 342.52 L417.0 342.52 L416.5 342.52 L416.0 342.52 L415.5 342.52 L415.0 342.52 L414.5 342.52 L414.0 342.52 L413.5 342.52 L413.0 342.52 L412.5 342.52 L412.0 342.52 L411.5 342.52 L411.0 342.52 L410.5 342.52 L410.0 342.52 L409.5 342.52 L409.0 342.52 L408.5 342.52 L408.0 342.52Z" fill="#b0b0b0" stroke="#404040" stroke-width="0.9" stroke-linejoin="round"/><path d="M408 388.4 H722" stroke="#3a3a3a" stroke-width="0.9" fill="none"/><path d="M408.0 388.28 L408.5 388.28 L409.0 388.28 L409.5 388.28 L410.0 388.28 L410.5 388.28 L411.0 388.28 L411.5 388.28 L412.0 388.28 L412.5 388.28 L413.0 388.28 L413.5 388.28 L414.0 388.28 L414.5 388.28 L415.0 388.28 L415.5 388.28 L416.0 388.28 L416.5 388.28 L417.0 388.28 L417.5 388.28 L418.0 388.28 L418.5 388.28 L419.0 388.28 L419.5 388.28 L420.0 388.28 L420.5 388.28 L421.0 388.28 L421.5 388.28 L422.0 388.28 L422.5 388.28 L423.0 388.28 L423.5 388.28 L424.0 388.28 L424.5 388.28 L425.0 388.28 L425.5 388.28 L426.0 388.28 L426.5 388.28 L427.0 388.28 L427.5 388.28 L428.0 388.28 L428.5 388.28 L429.0 388.28 L429.5 388.28 L430.0 388.28 L430.5 388.28 L431.0 388.28 L431.5 388.28 L432.0 388.28 L432.5 388.28 L433.0 388.28 L433.5 388.28 L434.0 388.28 L434.5 388.28 L435.0 388.28 L435.5 388.28 L436.0 388.28 L436.5 388.28 L437.0 388.28 L437.5 388.28 L438.0 388.28 L438.5 388.28 L439.0 388.28 L439.5 388.28 L440.0 388.28 L440.5 388.28 L441.0 388.28 L441.5 388.28 L442.0 388.28 L442.5 388.28 L443.0 388.28 L443.5 388.28 L444.0 388.28 L444.5 388.28 L445.0 388.28 L445.5 388.28 L446.0 388.28 L446.5 388.28 L447.0 388.28 L447.5 388.28 L448.0 388.28 L448.5 388.28 L449.0 388.28 L449.5 388.28 L450.0 388.28 L450.5 388.28 L451.0 388.28 L451.5 388.28 L452.0 388.28 L452.5 388.28 L453.0 388.28 L453.5 388.28 L454.0 388.28 L454.5 388.28 L455.0 388.28 L455.5 388.28 L456.0 388.28 L456.5 388.28 L457.0 388.28 L457.5 388.28 L458.0 388.28 L458.5 388.28 L459.0 388.28 L459.5 388.28 L460.0 388.28 L460.5 388.28 L461.0 387.93 L461.5 387.65 L462.0 387.37 L462.5 387.08 L463.0 386.80 L463.5 387.08 L464.0 387.37 L464.5 387.65 L465.0 387.93 L465.5 388.28 L466.0 388.28 L466.5 388.28 L467.0 388.28 L467.5 388.28 L468.0 388.28 L468.5 388.28 L469.0 388.28 L469.5 388.28 L470.0 388.28 L470.5 388.28 L471.0 388.28 L471.5 388.28 L472.0 388.28 L472.5 388.28 L473.0 388.28 L473.5 388.28 L474.0 388.28 L474.5 388.28 L475.0 388.28 L475.5 388.28 L476.0 388.28 L476.5 388.28 L477.0 388.28 L477.5 388.28 L478.0 388.28 L478.5 388.28 L479.0 388.28 L479.5 388.28 L480.0 388.28 L480.5 388.28 L481.0 388.28 L481.5 388.28 L482.0 387.97 L482.5 387.83 L483.0 387.70 L483.5 387.83 L484.0 387.97 L484.5 388.28 L485.0 388.28 L485.5 388.28 L486.0 388.28 L486.5 388.28 L487.0 388.28 L487.5 388.28 L488.0 388.28 L488.5 388.28 L489.0 388.28 L489.5 388.28 L490.0 388.28 L490.5 388.28 L491.0 388.28 L491.5 388.28 L492.0 388.28 L492.5 388.28 L493.0 388.28 L493.5 388.28 L494.0 388.28 L494.5 388.28 L495.0 388.28 L495.5 388.28 L496.0 388.28 L496.5 388.28 L497.0 388.28 L497.5 388.28 L498.0 388.28 L498.5 388.28 L499.0 388.28 L499.5 388.28 L500.0 388.28 L500.5 388.28 L501.0 388.28 L501.5 388.28 L502.0 388.28 L502.5 388.28 L503.0 388.28 L503.5 388.28 L504.0 388.28 L504.5 388.28 L505.0 388.28 L505.5 388.28 L506.0 388.28 L506.5 388.28 L507.0 388.28 L507.5 388.28 L508.0 388.28 L508.5 388.28 L509.0 388.28 L509.5 388.28 L510.0 388.28 L510.5 388.28 L511.0 388.28 L511.5 388.28 L512.0 388.28 L512.5 388.28 L513.0 388.28 L513.5 388.28 L514.0 388.28 L514.5 388.28 L515.0 388.28 L515.5 388.28 L516.0 388.28 L516.5 388.28 L517.0 388.28 L517.5 388.28 L518.0 388.28 L518.5 388.28 L519.0 388.28 L519.5 388.28 L520.0 388.28 L520.5 388.28 L521.0 388.28 L521.5 388.28 L522.0 388.28 L522.5 388.28 L523.0 388.28 L523.5 388.28 L524.0 388.28 L524.5 388.28 L525.0 388.28 L525.5 388.28 L526.0 388.28 L526.5 388.28 L527.0 388.28 L527.5 388.28 L528.0 388.28 L528.5 388.28 L529.0 388.28 L529.5 388.28 L530.0 388.28 L530.5 388.28 L531.0 388.28 L531.5 388.28 L532.0 388.28 L532.5 388.28 L533.0 388.28 L533.5 388.28 L534.0 388.28 L534.5 388.28 L535.0 387.93 L535.5 387.77 L536.0 387.60 L536.5 387.77 L537.0 387.93 L537.5 388.28 L538.0 388.28 L538.5 388.28 L539.0 388.28 L539.5 388.28 L540.0 388.28 L540.5 388.28 L541.0 388.28 L541.5 388.28 L542.0 388.28 L542.5 388.28 L543.0 388.28 L543.5 388.28 L544.0 388.28 L544.5 388.28 L545.0 388.28 L545.5 388.28 L546.0 388.28 L546.5 388.28 L547.0 388.28 L547.5 388.28 L548.0 388.28 L548.5 388.28 L549.0 388.28 L549.5 388.28 L550.0 388.28 L550.5 388.28 L551.0 388.28 L551.5 388.28 L552.0 388.28 L552.5 388.28 L553.0 388.28 L553.5 388.28 L554.0 388.28 L554.5 388.28 L555.0 388.28 L555.5 388.28 L556.0 388.28 L556.5 388.28 L557.0 388.28 L557.5 388.28 L558.0 388.28 L558.5 388.28 L559.0 388.28 L559.5 388.28 L560.0 388.28 L560.5 388.28 L561.0 388.28 L561.5 388.28 L562.0 388.28 L562.5 388.28 L563.0 388.28 L563.5 388.28 L564.0 388.28 L564.5 388.28 L565.0 388.28 L565.5 388.28 L566.0 388.28 L566.5 388.28 L567.0 388.28 L567.5 388.28 L568.0 388.28 L568.5 388.28 L569.0 388.28 L569.5 388.28 L570.0 387.97 L570.5 387.83 L571.0 387.70 L571.5 387.83 L572.0 387.97 L572.5 388.28 L573.0 388.28 L573.5 388.28 L574.0 388.28 L574.5 388.28 L575.0 388.28 L575.5 388.28 L576.0 388.28 L576.5 388.28 L577.0 388.28 L577.5 388.28 L578.0 388.28 L578.5 388.28 L579.0 388.28 L579.5 388.28 L580.0 388.28 L580.5 388.28 L581.0 388.28 L581.5 388.28 L582.0 388.28 L582.5 388.28 L583.0 388.28 L583.5 388.28 L584.0 388.28 L584.5 388.28 L585.0 388.28 L585.5 388.28 L586.0 388.28 L586.5 388.28 L587.0 388.28 L587.5 388.28 L588.0 388.28 L588.5 388.28 L589.0 388.28 L589.5 388.28 L590.0 388.28 L590.5 388.28 L591.0 388.28 L591.5 388.28 L592.0 388.28 L592.5 388.28 L593.0 388.28 L593.5 388.28 L594.0 388.28 L594.5 388.28 L595.0 388.28 L595.5 388.28 L596.0 388.28 L596.5 388.28 L597.0 388.28 L597.5 388.28 L598.0 388.28 L598.5 388.28 L599.0 387.97 L599.5 387.83 L600.0 387.70 L600.5 387.83 L601.0 387.97 L601.5 388.28 L602.0 388.28 L602.5 388.28 L603.0 388.28 L603.5 388.28 L604.0 388.28 L604.5 388.28 L605.0 388.28 L605.5 388.28 L606.0 388.28 L606.5 388.28 L607.0 388.28 L607.5 388.28 L608.0 388.28 L608.5 388.28 L609.0 388.28 L609.5 388.28 L610.0 388.28 L610.5 388.28 L611.0 388.28 L611.5 388.28 L612.0 388.28 L612.5 388.28 L613.0 388.28 L613.5 388.28 L614.0 388.28 L614.5 388.28 L615.0 388.28 L615.5 388.28 L616.0 388.28 L616.5 388.28 L617.0 388.28 L617.5 388.28 L618.0 387.74 L618.5 387.38 L619.0 387.02 L619.5 386.66 L620.0 386.30 L620.5 386.66 L621.0 387.02 L621.5 387.38 L622.0 387.74 L622.5 388.28 L623.0 388.28 L623.5 387.75 L624.0 387.40 L624.5 387.05 L625.0 386.70 L625.5 387.05 L626.0 387.40 L626.5 387.75 L627.0 388.28 L627.5 388.28 L628.0 388.28 L628.5 388.28 L629.0 388.28 L629.5 388.28 L630.0 388.28 L630.5 388.28 L631.0 388.28 L631.5 388.28 L632.0 388.28 L632.5 388.28 L633.0 388.28 L633.5 388.28 L634.0 388.28 L634.5 388.28 L635.0 388.28 L635.5 388.28 L636.0 388.28 L636.5 388.28 L637.0 388.28 L637.5 388.28 L638.0 388.28 L638.5 388.28 L639.0 387.97 L639.5 387.83 L640.0 387.70 L640.5 387.83 L641.0 387.97 L641.5 388.28 L642.0 388.28 L642.5 388.28 L643.0 388.28 L643.5 388.28 L644.0 388.28 L644.5 388.28 L645.0 388.28 L645.5 388.28 L646.0 388.28 L646.5 388.28 L647.0 388.28 L647.5 388.28 L648.0 388.28 L648.5 388.28 L649.0 388.28 L649.5 388.28 L650.0 388.28 L650.5 388.28 L651.0 388.28 L651.5 388.28 L652.0 388.28 L652.5 388.28 L653.0 388.28 L653.5 388.28 L654.0 388.28 L654.5 388.28 L655.0 388.28 L655.5 388.28 L656.0 388.28 L656.5 388.28 L657.0 388.28 L657.5 388.28 L658.0 388.28 L658.5 388.28 L659.0 388.28 L659.5 388.28 L660.0 388.28 L660.5 388.28 L661.0 388.28 L661.5 388.28 L662.0 388.28 L662.5 388.28 L663.0 388.28 L663.5 388.28 L664.0 388.28 L664.5 388.28 L665.0 387.89 L665.5 387.54 L666.0 387.20 L666.5 386.85 L667.0 386.50 L667.5 386.85 L668.0 387.20 L668.5 387.54 L669.0 387.89 L669.5 388.28 L670.0 388.28 L670.5 388.28 L671.0 388.28 L671.5 388.28 L672.0 388.28 L672.5 388.28 L673.0 388.28 L673.5 388.28 L674.0 388.28 L674.5 388.28 L675.0 388.28 L675.5 388.28 L676.0 388.28 L676.5 388.28 L677.0 388.28 L677.5 388.28 L678.0 388.28 L678.5 388.28 L679.0 387.93 L679.5 387.77 L680.0 387.60 L680.5 387.77 L681.0 387.93 L681.5 388.28 L682.0 388.28 L682.5 388.28 L683.0 388.28 L683.5 388.28 L684.0 388.28 L684.5 388.28 L685.0 388.28 L685.5 388.28 L686.0 388.28 L686.5 388.28 L687.0 388.28 L687.5 388.28 L688.0 388.28 L688.5 388.28 L689.0 388.28 L689.5 388.28 L690.0 388.28 L690.5 388.28 L691.0 388.28 L691.5 388.28 L692.0 388.28 L692.5 388.28 L693.0 388.28 L693.5 388.28 L694.0 388.28 L694.5 388.28 L695.0 388.28 L695.5 388.28 L696.0 388.28 L696.5 388.28 L697.0 388.28 L697.5 388.28 L698.0 388.28 L698.5 388.28 L699.0 388.28 L699.5 388.28 L700.0 388.28 L700.5 388.28 L701.0 388.28 L701.5 388.28 L702.0 388.28 L702.5 388.28 L703.0 388.28 L703.5 388.28 L704.0 387.96 L704.5 387.62 L705.0 387.28 L705.5 386.94 L706.0 386.60 L706.5 386.94 L707.0 387.28 L707.5 387.62 L708.0 387.96 L708.5 388.28 L709.0 388.28 L709.5 388.28 L710.0 388.28 L710.5 388.28 L711.0 388.28 L711.5 388.28 L712.0 388.28 L712.5 388.28 L713.0 388.28 L713.5 388.28 L714.0 388.28 L714.5 388.28 L715.0 388.28 L715.5 388.28 L716.0 388.28 L716.5 388.28 L717.0 388.28 L717.5 388.28 L718.0 388.28 L718.5 388.28 L719.0 388.28 L719.5 388.28 L720.0 388.28 L720.5 388.28 L721.0 388.28 L721.5 388.28 L722.0 388.28 L722.0 388.52 L721.5 388.52 L721.0 388.52 L720.5 388.52 L720.0 388.52 L719.5 388.52 L719.0 388.52 L718.5 388.52 L718.0 388.52 L717.5 388.52 L717.0 388.52 L716.5 388.52 L716.0 388.52 L715.5 388.52 L715.0 388.52 L714.5 388.52 L714.0 388.52 L713.5 388.52 L713.0 388.52 L712.5 388.52 L712.0 388.52 L711.5 388.52 L711.0 388.52 L710.5 388.52 L710.0 388.52 L709.5 388.52 L709.0 388.52 L708.5 388.52 L708.0 388.84 L707.5 389.18 L707.0 389.52 L706.5 389.86 L706.0 390.20 L705.5 389.86 L705.0 389.52 L704.5 389.18 L704.0 388.84 L703.5 388.52 L703.0 388.52 L702.5 388.52 L702.0 388.52 L701.5 388.52 L701.0 388.52 L700.5 388.52 L700.0 388.52 L699.5 388.52 L699.0 388.52 L698.5 388.52 L698.0 388.52 L697.5 388.52 L697.0 388.52 L696.5 388.52 L696.0 388.52 L695.5 388.52 L695.0 388.52 L694.5 388.52 L694.0 388.52 L693.5 388.52 L693.0 388.52 L692.5 388.52 L692.0 388.52 L691.5 388.52 L691.0 388.52 L690.5 388.52 L690.0 388.52 L689.5 388.52 L689.0 388.52 L688.5 388.52 L688.0 388.52 L687.5 388.52 L687.0 388.52 L686.5 388.52 L686.0 388.52 L685.5 388.52 L685.0 388.52 L684.5 388.52 L684.0 388.52 L683.5 388.52 L683.0 388.52 L682.5 388.52 L682.0 388.52 L681.5 388.52 L681.0 388.87 L680.5 389.03 L680.0 389.20 L679.5 389.03 L679.0 388.87 L678.5 388.52 L678.0 388.52 L677.5 388.52 L677.0 388.52 L676.5 388.52 L676.0 388.52 L675.5 388.52 L675.0 388.52 L674.5 388.52 L674.0 388.52 L673.5 388.52 L673.0 388.52 L672.5 388.52 L672.0 388.52 L671.5 388.52 L671.0 388.52 L670.5 388.52 L670.0 388.52 L669.5 388.52 L669.0 388.91 L668.5 389.26 L668.0 389.60 L667.5 389.95 L667.0 390.30 L666.5 389.95 L666.0 389.60 L665.5 389.26 L665.0 388.91 L664.5 388.52 L664.0 388.52 L663.5 388.52 L663.0 388.52 L662.5 388.52 L662.0 388.52 L661.5 388.52 L661.0 388.52 L660.5 388.52 L660.0 388.52 L659.5 388.52 L659.0 388.52 L658.5 388.52 L658.0 388.52 L657.5 388.52 L657.0 388.52 L656.5 388.52 L656.0 388.52 L655.5 388.52 L655.0 388.52 L654.5 388.52 L654.0 388.52 L653.5 388.52 L653.0 388.52 L652.5 388.52 L652.0 388.52 L651.5 388.52 L651.0 388.52 L650.5 388.52 L650.0 388.52 L649.5 388.52 L649.0 388.52 L648.5 388.52 L648.0 388.52 L647.5 388.52 L647.0 388.52 L646.5 388.52 L646.0 388.52 L645.5 388.52 L645.0 388.52 L644.5 388.52 L644.0 388.52 L643.5 388.52 L643.0 388.52 L642.5 388.52 L642.0 388.52 L641.5 388.52 L641.0 388.83 L640.5 388.97 L640.0 389.10 L639.5 388.97 L639.0 388.83 L638.5 388.52 L638.0 388.52 L637.5 388.52 L637.0 388.52 L636.5 388.52 L636.0 388.52 L635.5 388.52 L635.0 388.52 L634.5 388.52 L634.0 388.52 L633.5 388.52 L633.0 388.52 L632.5 388.52 L632.0 388.52 L631.5 388.52 L631.0 388.52 L630.5 388.52 L630.0 388.52 L629.5 388.52 L629.0 388.52 L628.5 388.52 L628.0 388.52 L627.5 388.52 L627.0 388.52 L626.5 389.05 L626.0 389.40 L625.5 389.75 L625.0 390.10 L624.5 389.75 L624.0 389.40 L623.5 389.05 L623.0 388.52 L622.5 388.52 L622.0 389.06 L621.5 389.42 L621.0 389.78 L620.5 390.14 L620.0 390.50 L619.5 390.14 L619.0 389.78 L618.5 389.42 L618.0 389.06 L617.5 388.52 L617.0 388.52 L616.5 388.52 L616.0 388.52 L615.5 388.52 L615.0 388.52 L614.5 388.52 L614.0 388.52 L613.5 388.52 L613.0 388.52 L612.5 388.52 L612.0 388.52 L611.5 388.52 L611.0 388.52 L610.5 388.52 L610.0 388.52 L609.5 388.52 L609.0 388.52 L608.5 388.52 L608.0 388.52 L607.5 388.52 L607.0 388.52 L606.5 388.52 L606.0 388.52 L605.5 388.52 L605.0 388.52 L604.5 388.52 L604.0 388.52 L603.5 388.52 L603.0 388.52 L602.5 388.52 L602.0 388.52 L601.5 388.52 L601.0 388.83 L600.5 388.97 L600.0 389.10 L599.5 388.97 L599.0 388.83 L598.5 388.52 L598.0 388.52 L597.5 388.52 L597.0 388.52 L596.5 388.52 L596.0 388.52 L595.5 388.52 L595.0 388.52 L594.5 388.52 L594.0 388.52 L593.5 388.52 L593.0 388.52 L592.5 388.52 L592.0 388.52 L591.5 388.52 L591.0 388.52 L590.5 388.52 L590.0 388.52 L589.5 388.52 L589.0 388.52 L588.5 388.52 L588.0 388.52 L587.5 388.52 L587.0 388.52 L586.5 388.52 L586.0 388.52 L585.5 388.52 L585.0 388.52 L584.5 388.52 L584.0 388.52 L583.5 388.52 L583.0 388.52 L582.5 388.52 L582.0 388.52 L581.5 388.52 L581.0 388.52 L580.5 388.52 L580.0 388.52 L579.5 388.52 L579.0 388.52 L578.5 388.52 L578.0 388.52 L577.5 388.52 L577.0 388.52 L576.5 388.52 L576.0 388.52 L575.5 388.52 L575.0 388.52 L574.5 388.52 L574.0 388.52 L573.5 388.52 L573.0 388.52 L572.5 388.52 L572.0 388.83 L571.5 388.97 L571.0 389.10 L570.5 388.97 L570.0 388.83 L569.5 388.52 L569.0 388.52 L568.5 388.52 L568.0 388.52 L567.5 388.52 L567.0 388.52 L566.5 388.52 L566.0 388.52 L565.5 388.52 L565.0 388.52 L564.5 388.52 L564.0 388.52 L563.5 388.52 L563.0 388.52 L562.5 388.52 L562.0 388.52 L561.5 388.52 L561.0 388.52 L560.5 388.52 L560.0 388.52 L559.5 388.52 L559.0 388.52 L558.5 388.52 L558.0 388.52 L557.5 388.52 L557.0 388.52 L556.5 388.52 L556.0 388.52 L555.5 388.52 L555.0 388.52 L554.5 388.52 L554.0 388.52 L553.5 388.52 L553.0 388.52 L552.5 388.52 L552.0 388.52 L551.5 388.52 L551.0 388.52 L550.5 388.52 L550.0 388.52 L549.5 388.52 L549.0 388.52 L548.5 388.52 L548.0 388.52 L547.5 388.52 L547.0 388.52 L546.5 388.52 L546.0 388.52 L545.5 388.52 L545.0 388.52 L544.5 388.52 L544.0 388.52 L543.5 388.52 L543.0 388.52 L542.5 388.52 L542.0 388.52 L541.5 388.52 L541.0 388.52 L540.5 388.52 L540.0 388.52 L539.5 388.52 L539.0 388.52 L538.5 388.52 L538.0 388.52 L537.5 388.52 L537.0 388.87 L536.5 389.03 L536.0 389.20 L535.5 389.03 L535.0 388.87 L534.5 388.52 L534.0 388.52 L533.5 388.52 L533.0 388.52 L532.5 388.52 L532.0 388.52 L531.5 388.52 L531.0 388.52 L530.5 388.52 L530.0 388.52 L529.5 388.52 L529.0 388.52 L528.5 388.52 L528.0 388.52 L527.5 388.52 L527.0 388.52 L526.5 388.52 L526.0 388.52 L525.5 388.52 L525.0 388.52 L524.5 388.52 L524.0 388.52 L523.5 388.52 L523.0 388.52 L522.5 388.52 L522.0 388.52 L521.5 388.52 L521.0 388.52 L520.5 388.52 L520.0 388.52 L519.5 388.52 L519.0 388.52 L518.5 388.52 L518.0 388.52 L517.5 388.52 L517.0 388.52 L516.5 388.52 L516.0 388.52 L515.5 388.52 L515.0 388.52 L514.5 388.52 L514.0 388.52 L513.5 388.52 L513.0 388.52 L512.5 388.52 L512.0 388.52 L511.5 388.52 L511.0 388.52 L510.5 388.52 L510.0 388.52 L509.5 388.52 L509.0 388.52 L508.5 388.52 L508.0 388.52 L507.5 388.52 L507.0 388.52 L506.5 388.52 L506.0 388.52 L505.5 388.52 L505.0 388.52 L504.5 388.52 L504.0 388.52 L503.5 388.52 L503.0 388.52 L502.5 388.52 L502.0 388.52 L501.5 388.52 L501.0 388.52 L500.5 388.52 L500.0 388.52 L499.5 388.52 L499.0 388.52 L498.5 388.52 L498.0 388.52 L497.5 388.52 L497.0 388.52 L496.5 388.52 L496.0 388.52 L495.5 388.52 L495.0 388.52 L494.5 388.52 L494.0 388.52 L493.5 388.52 L493.0 388.52 L492.5 388.52 L492.0 388.52 L491.5 388.52 L491.0 388.52 L490.5 388.52 L490.0 388.52 L489.5 388.52 L489.0 388.52 L488.5 388.52 L488.0 388.52 L487.5 388.52 L487.0 388.52 L486.5 388.52 L486.0 388.52 L485.5 388.52 L485.0 388.52 L484.5 388.52 L484.0 388.83 L483.5 388.97 L483.0 389.10 L482.5 388.97 L482.0 388.83 L481.5 388.52 L481.0 388.52 L480.5 388.52 L480.0 388.52 L479.5 388.52 L479.0 388.52 L478.5 388.52 L478.0 388.52 L477.5 388.52 L477.0 388.52 L476.5 388.52 L476.0 388.52 L475.5 388.52 L475.0 388.52 L474.5 388.52 L474.0 388.52 L473.5 388.52 L473.0 388.52 L472.5 388.52 L472.0 388.52 L471.5 388.52 L471.0 388.52 L470.5 388.52 L470.0 388.52 L469.5 388.52 L469.0 388.52 L468.5 388.52 L468.0 388.52 L467.5 388.52 L467.0 388.52 L466.5 388.52 L466.0 388.52 L465.5 388.52 L465.0 388.87 L464.5 389.15 L464.0 389.43 L463.5 389.72 L463.0 390.00 L462.5 389.72 L462.0 389.43 L461.5 389.15 L461.0 388.87 L460.5 388.52 L460.0 388.52 L459.5 388.52 L459.0 388.52 L458.5 388.52 L458.0 388.52 L457.5 388.52 L457.0 388.52 L456.5 388.52 L456.0 388.52 L455.5 388.52 L455.0 388.52 L454.5 388.52 L454.0 388.52 L453.5 388.52 L453.0 388.52 L452.5 388.52 L452.0 388.52 L451.5 388.52 L451.0 388.52 L450.5 388.52 L450.0 388.52 L449.5 388.52 L449.0 388.52 L448.5 388.52 L448.0 388.52 L447.5 388.52 L447.0 388.52 L446.5 388.52 L446.0 388.52 L445.5 388.52 L445.0 388.52 L444.5 388.52 L444.0 388.52 L443.5 388.52 L443.0 388.52 L442.5 388.52 L442.0 388.52 L441.5 388.52 L441.0 388.52 L440.5 388.52 L440.0 388.52 L439.5 388.52 L439.0 388.52 L438.5 388.52 L438.0 388.52 L437.5 388.52 L437.0 388.52 L436.5 388.52 L436.0 388.52 L435.5 388.52 L435.0 388.52 L434.5 388.52 L434.0 388.52 L433.5 388.52 L433.0 388.52 L432.5 388.52 L432.0 388.52 L431.5 388.52 L431.0 388.52 L430.5 388.52 L430.0 388.52 L429.5 388.52 L429.0 388.52 L428.5 388.52 L428.0 388.52 L427.5 388.52 L427.0 388.52 L426.5 388.52 L426.0 388.52 L425.5 388.52 L425.0 388.52 L424.5 388.52 L424.0 388.52 L423.5 388.52 L423.0 388.52 L422.5 388.52 L422.0 388.52 L421.5 388.52 L421.0 388.52 L420.5 388.52 L420.0 388.52 L419.5 388.52 L419.0 388.52 L418.5 388.52 L418.0 388.52 L417.5 388.52 L417.0 388.52 L416.5 388.52 L416.0 388.52 L415.5 388.52 L415.0 388.52 L414.5 388.52 L414.0 388.52 L413.5 388.52 L413.0 388.52 L412.5 388.52 L412.0 388.52 L411.5 388.52 L411.0 388.52 L410.5 388.52 L410.0 388.52 L409.5 388.52 L409.0 388.52 L408.5 388.52 L408.0 388.52Z" fill="#b0b0b0" stroke="#404040" stroke-width="0.9" stroke-linejoin="round"/></svg>
<svg class="a" style="left:445.5px;top:236px" width="10" height="10" viewBox="0 0 10 10"><path d="M1.2 4.8 L3.3 7.9 L7.8 1.2" fill="none" stroke="#111" stroke-width="1.9"/></svg>
<div class="el" style="left:458.7px;top:234.1px">SN</div>
<div class="el" style="left:476px;top:234.1px">N_18</div>
<svg class="a" style="left:445.5px;top:282px" width="10" height="10" viewBox="0 0 10 10"><path d="M1.2 4.8 L3.3 7.9 L7.8 1.2" fill="none" stroke="#111" stroke-width="1.9"/></svg>
<div class="el" style="left:458.7px;top:280.1px">T1.</div>
<div class="el" style="left:476px;top:280.1px">1_18</div>
<svg class="a" style="left:445.5px;top:328px" width="10" height="10" viewBox="0 0 10 10"><path d="M1.2 4.8 L3.3 7.9 L7.8 1.2" fill="none" stroke="#111" stroke-width="1.9"/></svg>
<div class="el" style="left:458.7px;top:326.1px">T2.</div>
<div class="el" style="left:476px;top:326.1px">2_18</div>
<svg class="a" style="left:445.5px;top:374px" width="10" height="10" viewBox="0 0 10 10"><path d="M1.2 4.8 L3.3 7.9 L7.8 1.2" fill="none" stroke="#111" stroke-width="1.9"/></svg>
<div class="el" style="left:458.7px;top:372.1px">T3.</div>
<div class="el" style="left:476px;top:372.1px">3_18</div>
<div class="a" style="left:1px;top:189px;width:228px;height:517px;background:#262a2d"></div>
<div class="a" style="left:1px;top:183px;width:228px;height:2px;background:#63676b"></div>
<div class="a" style="left:1px;top:185px;width:228px;height:28px;background:#2a2e31"></div>
<div class="a" style="left:1px;top:213px;width:228px;height:1px;background:#6c7074"></div>
<div class="a" style="left:1px;top:214px;width:228px;height:12px;background:#2a2e31"></div>
<div class="a" style="left:1px;top:458px;width:228px;height:44px;background:#45484b"></div>
<div class="a" style="left:1px;top:225.5px;width:228px;height:2px;background:#0b0c0d"></div>
<div class="a" style="left:1px;top:271.5px;width:228px;height:2px;background:#0b0c0d"></div>
<div class="a" style="left:1px;top:317.5px;width:228px;height:2px;background:#0b0c0d"></div>
<div class="a" style="left:1px;top:363.5px;width:228px;height:2px;background:#0b0c0d"></div>
<div class="a" style="left:1px;top:409.5px;width:228px;height:2px;background:#0b0c0d"></div>
<div class="a" style="left:1px;top:455.5px;width:228px;height:2px;background:#0b0c0d"></div>
<div class="a" style="left:1px;top:501.5px;width:228px;height:2px;background:#0b0c0d"></div>
<div class="a" style="left:1px;top:547.5px;width:228px;height:2px;background:#0b0c0d"></div>
<div class="a" style="left:1px;top:593.5px;width:228px;height:2px;background:#0b0c0d"></div>
<div class="a" style="left:1px;top:639.5px;width:228px;height:2px;background:#0b0c0d"></div>
<div class="a" style="left:1px;top:685.5px;width:228px;height:2px;background:#0b0c0d"></div>
<div class="a" style="left:-8px;top:230px;width:21px;height:17px;background:#34383b;border-radius:2px"></div>
<div class="t" style="left:-2.6px;top:232.5px;font-size:13px;font-weight:700;color:#c9cbcd">S</div>
<div class="a" style="left:-8px;top:276px;width:21px;height:17px;background:#34383b;border-radius:2px"></div>
<div class="t" style="left:-2.6px;top:278.5px;font-size:13px;font-weight:700;color:#c9cbcd">S</div>
<div class="a" style="left:-8px;top:322px;width:21px;height:17px;background:#34383b;border-radius:2px"></div>
<div class="t" style="left:-2.6px;top:324.5px;font-size:13px;font-weight:700;color:#c9cbcd">S</div>
<div class="a" style="left:-8px;top:368px;width:21px;height:17px;background:#34383b;border-radius:2px"></div>
<div class="t" style="left:-2.6px;top:370.5px;font-size:13px;font-weight:700;color:#c9cbcd">S</div>
<div class="a" style="left:-6px;top:413px;width:9px;height:18px;border:1px solid #17191b;border-radius:3px"></div>
<div class="a" style="left:-6px;top:459px;width:9px;height:18px;border:1px solid #17191b;border-radius:3px"></div>
<div class="a" style="left:-6px;top:505px;width:9px;height:18px;border:1px solid #17191b;border-radius:3px"></div>
<div class="a" style="left:-6px;top:551px;width:9px;height:18px;border:1px solid #17191b;border-radius:3px"></div>
<div class="a" style="left:-6px;top:597px;width:9px;height:18px;border:1px solid #17191b;border-radius:3px"></div>
<div class="a" style="left:-6px;top:643px;width:9px;height:18px;border:1px solid #17191b;border-radius:3px"></div>
<div class="a" style="left:-6px;top:689px;width:9px;height:18px;border:1px solid #17191b;border-radius:3px"></div>
<div class="a" style="left:9px;top:434px;width:20px;height:18px;background:#2f3336;border:1px solid #191b1d;border-radius:3px"></div>
<div class="a" style="left:9px;top:480px;width:20px;height:18px;background:#2f3336;border:1px solid #191b1d;border-radius:3px"></div>
<div class="a" style="left:9px;top:526px;width:20px;height:18px;background:#2f3336;border:1px solid #191b1d;border-radius:3px"></div>
<div class="grp" style="left:10px;top:572.5px;width:46.5px"></div>
<div class="grp" style="left:59.5px;top:572.5px;width:46.5px"></div>
<div class="grp" style="left:109.5px;top:572.5px;width:46.5px"></div>
<div class="grp" style="left:159.5px;top:572.5px;width:22px"></div>
<div class="grp" style="left:184.5px;top:572.5px;width:22px"></div>
<svg class="a" style="left:0;top:572.5px" width="230" height="18" viewBox="0 0 230 18"><circle cx="20.8" cy="8.8" r="4" fill="#b9bbbd"/><path d="M39.2 6.8 H41.6 L45 3.6 V14.4 L41.6 11.2 H39.2Z" fill="#b9bbbd"/><path d="M47.2 5.4 Q49.6 9 47.2 12.6" fill="none" stroke="#b9bbbd" stroke-width="1.3"/><path d="M67.4 10.4 L74.9 7.7 C75.2 5.3 72.6 4.1 70.3 4.7 C67.5 5.5 65.9 8.4 66.7 10.8 C67.5 13.3 70.5 14 72.9 13.2 C73.9 12.8 74.7 12.2 75.3 11.5" fill="none" stroke="#b9bbbd" stroke-width="1.8" stroke-linecap="round" stroke-linejoin="round"/><circle cx="92" cy="9.6" r="3.4" fill="none" stroke="#b9bbbd" stroke-width="1.5"/><circle cx="98.2" cy="9.6" r="3.4" fill="none" stroke="#b9bbbd" stroke-width="1.5"/><g stroke="#b9bbbd" stroke-width="1.4"><path d="M190 5 H201.2 M190 8 H194.6 M196.4 8 H201.2 M190 11 H194.6 M196.4 11 H201.2 M190 14 H201.2"/></g></svg>
<div class="t" style="left:116.5px;top:575.5px;font-size:12.5px;font-weight:700;color:#b9bbbd">R</div>
<div class="t" style="left:139px;top:575.5px;font-size:12.5px;font-weight:700;color:#b9bbbd">W</div>
<div class="t" style="left:166px;top:575.0px;font-size:14px;font-weight:700;color:#b9bbbd">L</div>
<div class="grp" style="left:10px;top:618.5px;width:46.5px"></div>
<div class="grp" style="left:59.5px;top:618.5px;width:46.5px"></div>
<div class="grp" style="left:109.5px;top:618.5px;width:46.5px"></div>
<div class="grp" style="left:159.5px;top:618.5px;width:22px"></div>
<div class="grp" style="left:184.5px;top:618.5px;width:22px"></div>
<svg class="a" style="left:0;top:618.5px" width="230" height="18" viewBox="0 0 230 18"><circle cx="20.8" cy="8.8" r="4" fill="#b9bbbd"/><path d="M39.2 6.8 H41.6 L45 3.6 V14.4 L41.6 11.2 H39.2Z" fill="#b9bbbd"/><path d="M47.2 5.4 Q49.6 9 47.2 12.6" fill="none" stroke="#b9bbbd" stroke-width="1.3"/><path d="M67.4 10.4 L74.9 7.7 C75.2 5.3 72.6 4.1 70.3 4.7 C67.5 5.5 65.9 8.4 66.7 10.8 C67.5 13.3 70.5 14 72.9 13.2 C73.9 12.8 74.7 12.2 75.3 11.5" fill="none" stroke="#b9bbbd" stroke-width="1.8" stroke-linecap="round" stroke-linejoin="round"/><circle cx="92" cy="9.6" r="3.4" fill="none" stroke="#b9bbbd" stroke-width="1.5"/><circle cx="98.2" cy="9.6" r="3.4" fill="none" stroke="#b9bbbd" stroke-width="1.5"/><g stroke="#b9bbbd" stroke-width="1.4"><path d="M190 5 H201.2 M190 8 H194.6 M196.4 8 H201.2 M190 11 H194.6 M196.4 11 H201.2 M190 14 H201.2"/></g></svg>
<div class="t" style="left:116.5px;top:621.5px;font-size:12.5px;font-weight:700;color:#b9bbbd">R</div>
<div class="t" style="left:139px;top:621.5px;font-size:12.5px;font-weight:700;color:#b9bbbd">W</div>
<div class="t" style="left:166px;top:621.0px;font-size:14px;font-weight:700;color:#b9bbbd">L</div>
<div class="grp" style="left:10px;top:664.5px;width:46.5px"></div>
<div class="grp" style="left:59.5px;top:664.5px;width:46.5px"></div>
<div class="grp" style="left:109.5px;top:664.5px;width:46.5px"></div>
<div class="grp" style="left:159.5px;top:664.5px;width:22px"></div>
<div class="grp" style="left:184.5px;top:664.5px;width:22px"></div>
<svg class="a" style="left:0;top:664.5px" width="230" height="18" viewBox="0 0 230 18"><circle cx="20.8" cy="8.8" r="4" fill="#b9bbbd"/><path d="M39.2 6.8 H41.6 L45 3.6 V14.4 L41.6 11.2 H39.2Z" fill="#b9bbbd"/><path d="M47.2 5.4 Q49.6 9 47.2 12.6" fill="none" stroke="#b9bbbd" stroke-width="1.3"/><path d="M67.4 10.4 L74.9 7.7 C75.2 5.3 72.6 4.1 70.3 4.7 C67.5 5.5 65.9 8.4 66.7 10.8 C67.5 13.3 70.5 14 72.9 13.2 C73.9 12.8 74.7 12.2 75.3 11.5" fill="none" stroke="#b9bbbd" stroke-width="1.8" stroke-linecap="round" stroke-linejoin="round"/><circle cx="92" cy="9.6" r="3.4" fill="none" stroke="#b9bbbd" stroke-width="1.5"/><circle cx="98.2" cy="9.6" r="3.4" fill="none" stroke="#b9bbbd" stroke-width="1.5"/><g stroke="#b9bbbd" stroke-width="1.4"><path d="M190 5 H201.2 M190 8 H194.6 M196.4 8 H201.2 M190 11 H194.6 M196.4 11 H201.2 M190 14 H201.2"/></g></svg>
<div class="t" style="left:116.5px;top:667.5px;font-size:12.5px;font-weight:700;color:#b9bbbd">R</div>
<div class="t" style="left:139px;top:667.5px;font-size:12.5px;font-weight:700;color:#b9bbbd">W</div>
<div class="t" style="left:166px;top:667.0px;font-size:14px;font-weight:700;color:#b9bbbd">L</div>
<div class="tn" style="left:12.1px;top:555.2px;letter-spacing:-0.3px">Backing Guitar 2 1_Stereo</div>
<div class="tn" style="left:12.1px;top:600.5px;letter-spacing:-0.85px">bass_bip</div>
<div class="tn" style="left:12.1px;top:646.5px;letter-spacing:0.12px">Drum-01</div>
<svg class="a" style="left:12.1px;top:692.8px" width="40.0" height="12.0" viewBox="0 0 40 12"><g fill="none" stroke="#f0f0f0" stroke-width="1.75"><path d="M0.8 1.6 H7.2 C7.2 6 5 9 0.8 10.6 M1 5.6 H7"/><path d="M9.5 0 V12"/><path d="M15.6 0.4 V6.4 H22.6 V0.4 M15.6 3.4 H22.6 M19.1 6.4 V10 M13.4 10.2 H24.8"/><path d="M35.6 1 H28.6 V6.6 H35.8 M26.4 10.2 H37.8"/></g></svg>
<div class="a" style="left:229px;top:189px;width:12px;height:517px;background:#050505"></div>
<div class="a" style="left:241px;top:189px;width:2px;height:517px;background:#7e7e7e"></div>
<div class="a" style="left:243px;top:189px;width:1px;height:517px;background:#3a3a3a"></div>
<div class="a" style="left:240.6px;top:540px;width:3px;height:44px;background:#1c1c1c"></div>
<div class="a" style="left:241.3px;top:539.6px;width:1.9px;height:44px;background:repeating-linear-gradient(#fff 0,#fff 4.1px,#222 4.1px,#222 6px)"></div>
<div class="a" style="left:243.7px;top:413px;width:478.3px;height:293px;background:#e5e5e5"></div>
<div class="a" style="left:243.6px;top:413px;width:1px;height:293px;background:#f6f6f6"></div>
<div class="a" style="left:403px;top:413.6px;width:319px;height:12px;background:#f2f2f2"></div>
<div class="a" style="left:423px;top:413px;width:1px;height:11px;background:#b0b0b0"></div>
<div class="a" style="left:504px;top:413px;width:1px;height:11px;background:#b0b0b0"></div>
<div class="a" style="left:585px;top:413px;width:1px;height:11px;background:#b0b0b0"></div>
<div class="a" style="left:665px;top:413px;width:1px;height:11px;background:#b0b0b0"></div>
<div class="a" style="left:243.7px;top:214px;width:160px;height:200px;background:#e5e5e5"></div>
<div class="a" style="left:243px;top:700px;width:479px;height:6px;background:#e9e9e9"></div>
<div class="ev" style="left:252px;top:550px;width:132.2px;height:43px;background:#f2f2f2;border-color:#a2a2a2"></div>
<div class="a" style="left:384.2px;top:550px;width:1px;height:43px;background:#fafafa"></div>
<div class="ev" style="left:385px;top:550px;width:345px;height:43px;background:#f2f2f2;border-color:#a2a2a2;border-left:none"></div>
<div class="ev" style="left:252px;top:596px;width:132.2px;height:43px;background:#f2f2f2;border-color:#a2a2a2"></div>
<div class="a" style="left:384.2px;top:596px;width:1px;height:43px;background:#fafafa"></div>
<div class="ev" style="left:385px;top:596px;width:345px;height:43px;background:#f2f2f2;border-color:#a2a2a2;border-left:none"></div>
<div class="ev" style="left:252px;top:642px;width:132.2px;height:43px;background:#f2f2f2;border-color:#a2a2a2"></div>
<div class="a" style="left:384.2px;top:642px;width:1px;height:43px;background:#fafafa"></div>
<div class="ev" style="left:385px;top:642px;width:345px;height:43px;background:#f2f2f2;border-color:#a2a2a2;border-left:none"></div>
<div class="ev" style="left:252px;top:688px;width:132.2px;height:20px;background:#f2f2f2;border-color:#a2a2a2"></div>
<div class="a" style="left:384.2px;top:688px;width:1px;height:20px;background:#fafafa"></div>
<div class="ev" style="left:385px;top:688px;width:345px;height:20px;background:#f2f2f2;border-color:#a2a2a2;border-left:none"></div>
<div class="a" style="left:244.5px;top:594.2px;width:8px;height:0.8px;background:#c4c4c4"></div>
<div class="a" style="left:252px;top:593px;width:470px;height:3px;background:linear-gradient(#e4aeb0 0,#e4aeb0 1px,#d6a8aa 1px,#d6a8aa 2px,#e4aeb0 2px,#e4aeb0 3px)"></div>
<div class="a" style="left:244.5px;top:640.2px;width:8px;height:0.8px;background:#c4c4c4"></div>
<div class="a" style="left:252px;top:639px;width:470px;height:3px;background:linear-gradient(#e4aeb0 0,#e4aeb0 1px,#d6a8aa 1px,#d6a8aa 2px,#e4aeb0 2px,#e4aeb0 3px)"></div>
<div class="a" style="left:244.5px;top:686.2px;width:8px;height:0.8px;background:#c4c4c4"></div>
<div class="a" style="left:252px;top:685px;width:470px;height:3px;background:linear-gradient(#e4aeb0 0,#e4aeb0 1px,#d6a8aa 1px,#d6a8aa 2px,#e4aeb0 2px,#e4aeb0 3px)"></div>
<div class="a" style="left:262px;top:540px;width:1px;height:166px;background:rgba(150,150,150,0.3)"></div>
<div class="a" style="left:263px;top:540px;width:1px;height:166px;background:rgba(255,255,255,0.55)"></div>
<div class="a" style="left:262px;top:593px;width:1px;height:3px;background:#8f8f8f"></div>
<div class="a" style="left:262px;top:639px;width:1px;height:3px;background:#8f8f8f"></div>
<div class="a" style="left:262px;top:685px;width:1px;height:3px;background:#8f8f8f"></div>
<div class="a" style="left:343px;top:540px;width:1px;height:166px;background:rgba(150,150,150,0.3)"></div>
<div class="a" style="left:344px;top:540px;width:1px;height:166px;background:rgba(255,255,255,0.55)"></div>
<div class="a" style="left:343px;top:593px;width:1px;height:3px;background:#8f8f8f"></div>
<div class="a" style="left:343px;top:639px;width:1px;height:3px;background:#8f8f8f"></div>
<div class="a" style="left:343px;top:685px;width:1px;height:3px;background:#8f8f8f"></div>
<div class="a" style="left:423px;top:540px;width:1px;height:166px;background:rgba(150,150,150,0.45)"></div>
<div class="a" style="left:504px;top:540px;width:1px;height:166px;background:rgba(150,150,150,0.45)"></div>
<div class="a" style="left:585px;top:540px;width:1px;height:166px;background:rgba(150,150,150,0.45)"></div>
<div class="a" style="left:665px;top:540px;width:1px;height:166px;background:rgba(150,150,150,0.45)"></div>
<svg class="a" style="left:0;top:0" width="723" height="707" viewBox="0 0 723 707"><path d="M262.5 562.05 L263.0 559.27 L263.5 559.09 L264.0 558.74 L264.5 558.91 L265.0 559.35 L265.5 559.31 L266.0 559.26 L266.5 559.19 L267.0 559.42 L267.5 559.80 L268.0 559.49 L268.5 559.24 L269.0 559.13 L269.5 558.99 L270.0 558.83 L270.5 559.50 L271.0 559.88 L271.5 559.68 L272.0 559.75 L272.5 559.95 L273.0 559.26 L273.5 558.84 L274.0 558.95 L274.5 559.41 L275.0 560.03 L275.5 559.13 L276.0 558.53 L276.5 558.55 L277.0 558.76 L277.5 559.05 L278.0 559.09 L278.5 559.26 L279.0 559.70 L279.5 559.94 L280.0 560.08 L280.5 559.58 L281.0 559.40 L281.5 559.85 L282.0 559.92 L282.5 559.80 L283.0 559.75 L283.5 559.78 L284.0 559.98 L284.5 559.77 L285.0 559.36 L285.5 559.38 L286.0 559.27 L286.5 558.88 L287.0 558.96 L287.5 559.27 L288.0 559.15 L288.5 559.12 L289.0 559.26 L289.5 559.20 L290.0 559.04 L290.5 559.24 L291.0 559.43 L291.5 559.60 L292.0 559.19 L292.5 558.50 L293.0 558.51 L293.5 558.56 L294.0 558.71 L294.5 558.84 L295.0 558.97 L295.5 559.34 L296.0 559.62 L296.5 559.71 L297.0 559.69 L297.5 559.64 L298.0 559.85 L298.5 559.76 L299.0 559.10 L299.5 559.11 L300.0 559.46 L300.5 559.03 L301.0 558.89 L301.5 559.33 L302.0 559.12 L302.5 558.57 L303.0 558.67 L303.5 559.02 L304.0 559.83 L304.5 559.97 L305.0 559.76 L305.5 559.09 L306.0 558.78 L306.5 559.21 L307.0 559.02 L307.5 558.53 L308.0 559.09 L308.5 559.57 L309.0 559.88 L309.5 559.63 L310.0 559.09 L310.5 557.55 L311.0 557.62 L311.5 558.11 L312.0 558.39 L312.5 558.56 L313.0 558.32 L313.5 557.97 L314.0 557.36 L314.5 557.29 L315.0 557.49 L315.5 558.10 L316.0 558.47 L316.5 558.35 L317.0 558.40 L317.5 558.54 L318.0 558.58 L318.5 558.37 L319.0 557.66 L319.5 557.82 L320.0 558.42 L320.5 558.05 L321.0 557.84 L321.5 557.95 L322.0 558.15 L322.5 558.39 L323.0 557.88 L323.5 557.72 L324.0 558.30 L324.5 558.16 L325.0 557.67 L325.5 558.18 L326.0 558.42 L326.5 558.12 L327.0 558.16 L327.5 558.36 L328.0 558.30 L328.5 558.04 L329.0 557.37 L329.5 557.25 L330.0 557.41 L330.5 557.89 L331.0 558.03 L331.5 557.47 L332.0 557.72 L332.5 558.36 L333.0 558.19 L333.5 557.92 L334.0 557.48 L334.5 557.47 L335.0 557.67 L335.5 558.19 L336.0 558.25 L336.5 557.40 L337.0 557.61 L337.5 558.36 L338.0 558.32 L338.5 558.12 L339.0 557.63 L339.5 557.75 L340.0 558.17 L340.5 558.20 L341.0 558.30 L341.5 558.51 L342.0 558.57 L342.5 558.56 L343.0 558.08 L343.5 557.88 L344.0 558.20 L344.5 558.08 L345.0 557.74 L345.5 557.96 L346.0 558.08 L346.5 558.00 L347.0 557.65 L347.5 557.17 L348.0 557.62 L348.5 557.90 L349.0 557.81 L349.5 557.59 L350.0 557.31 L350.5 557.97 L351.0 558.42 L351.5 558.44 L352.0 557.97 L352.5 557.25 L353.0 557.33 L353.5 557.57 L354.0 558.12 L354.5 558.34 L355.0 558.40 L355.5 557.87 L356.0 557.45 L356.5 557.26 L357.0 557.67 L357.5 558.39 L358.0 557.66 L358.5 557.20 L359.0 557.27 L359.5 557.47 L360.0 557.73 L360.5 557.91 L361.0 558.13 L361.5 558.43 L362.0 558.58 L362.5 558.64 L363.0 557.75 L363.5 557.39 L364.0 558.09 L364.5 558.02 L365.0 557.57 L365.5 558.00 L366.0 558.11 L366.5 557.56 L367.0 557.53 L367.5 557.75 L368.0 558.04 L368.5 558.27 L369.0 558.38 L369.5 558.07 L370.0 557.55 L370.5 558.17 L371.0 558.54 L371.5 558.39 L372.0 558.12 L372.5 557.81 L373.0 557.52 L373.5 557.41 L374.0 557.64 L374.5 557.93 L375.0 558.25 L375.5 557.64 L376.0 557.46 L376.5 558.15 L377.0 558.49 L377.5 558.67 L378.0 558.43 L378.5 558.21 L379.0 558.04 L379.5 558.23 L380.0 558.60 L380.5 558.49 L381.0 558.36 L381.5 558.17 L382.0 557.98 L382.0 567.02 L381.5 566.83 L381.0 566.64 L380.5 566.51 L380.0 566.40 L379.5 566.77 L379.0 566.96 L378.5 566.79 L378.0 566.57 L377.5 566.33 L377.0 566.51 L376.5 566.85 L376.0 567.54 L375.5 567.36 L375.0 566.75 L374.5 567.07 L374.0 567.36 L373.5 567.59 L373.0 567.48 L372.5 567.19 L372.0 566.88 L371.5 566.61 L371.0 566.46 L370.5 566.83 L370.0 567.45 L369.5 566.93 L369.0 566.62 L368.5 566.73 L368.0 566.96 L367.5 567.25 L367.0 567.47 L366.5 567.44 L366.0 566.89 L365.5 567.00 L365.0 567.43 L364.5 566.98 L364.0 566.91 L363.5 567.61 L363.0 567.25 L362.5 566.36 L362.0 566.42 L361.5 566.57 L361.0 566.87 L360.5 567.09 L360.0 567.27 L359.5 567.53 L359.0 567.73 L358.5 567.80 L358.0 567.34 L357.5 566.61 L357.0 567.33 L356.5 567.74 L356.0 567.55 L355.5 567.13 L355.0 566.60 L354.5 566.66 L354.0 566.88 L353.5 567.43 L353.0 567.67 L352.5 567.75 L352.0 567.03 L351.5 566.56 L351.0 566.58 L350.5 567.03 L350.0 567.69 L349.5 567.41 L349.0 567.19 L348.5 567.10 L348.0 567.38 L347.5 567.83 L347.0 567.35 L346.5 567.00 L346.0 566.92 L345.5 567.04 L345.0 567.26 L344.5 566.92 L344.0 566.80 L343.5 567.12 L343.0 566.92 L342.5 566.44 L342.0 566.43 L341.5 566.49 L341.0 566.70 L340.5 566.80 L340.0 566.83 L339.5 567.25 L339.0 567.37 L338.5 566.88 L338.0 566.68 L337.5 566.64 L337.0 567.39 L336.5 567.60 L336.0 566.75 L335.5 566.81 L335.0 567.33 L334.5 567.53 L334.0 567.52 L333.5 567.08 L333.0 566.81 L332.5 566.64 L332.0 567.28 L331.5 567.53 L331.0 566.97 L330.5 567.11 L330.0 567.59 L329.5 567.75 L329.0 567.63 L328.5 566.96 L328.0 566.70 L327.5 566.64 L327.0 566.84 L326.5 566.88 L326.0 566.58 L325.5 566.82 L325.0 567.33 L324.5 566.84 L324.0 566.70 L323.5 567.28 L323.0 567.12 L322.5 566.61 L322.0 566.85 L321.5 567.05 L321.0 567.16 L320.5 566.95 L320.0 566.58 L319.5 567.18 L319.0 567.34 L318.5 566.63 L318.0 566.42 L317.5 566.46 L317.0 566.60 L316.5 566.65 L316.0 566.53 L315.5 566.90 L315.0 567.51 L314.5 567.71 L314.0 567.64 L313.5 567.03 L313.0 566.68 L312.5 566.44 L312.0 566.61 L311.5 566.89 L311.0 567.38 L310.5 567.45 L310.0 565.91 L309.5 565.37 L309.0 565.12 L308.5 565.43 L308.0 565.91 L307.5 566.47 L307.0 565.98 L306.5 565.79 L306.0 566.22 L305.5 565.91 L305.0 565.24 L304.5 565.03 L304.0 565.17 L303.5 565.98 L303.0 566.33 L302.5 566.43 L302.0 565.88 L301.5 565.67 L301.0 566.11 L300.5 565.97 L300.0 565.54 L299.5 565.89 L299.0 565.90 L298.5 565.24 L298.0 565.15 L297.5 565.36 L297.0 565.31 L296.5 565.29 L296.0 565.38 L295.5 565.66 L295.0 566.03 L294.5 566.16 L294.0 566.29 L293.5 566.44 L293.0 566.49 L292.5 566.50 L292.0 565.81 L291.5 565.40 L291.0 565.57 L290.5 565.76 L290.0 565.96 L289.5 565.80 L289.0 565.74 L288.5 565.88 L288.0 565.85 L287.5 565.73 L287.0 566.04 L286.5 566.12 L286.0 565.73 L285.5 565.62 L285.0 565.64 L284.5 565.23 L284.0 565.02 L283.5 565.22 L283.0 565.25 L282.5 565.20 L282.0 565.08 L281.5 565.15 L281.0 565.60 L280.5 565.42 L280.0 564.92 L279.5 565.06 L279.0 565.30 L278.5 565.74 L278.0 565.91 L277.5 565.95 L277.0 566.24 L276.5 566.45 L276.0 566.47 L275.5 565.87 L275.0 564.97 L274.5 565.59 L274.0 566.05 L273.5 566.16 L273.0 565.74 L272.5 565.05 L272.0 565.25 L271.5 565.32 L271.0 565.12 L270.5 565.50 L270.0 566.17 L269.5 566.01 L269.0 565.87 L268.5 565.76 L268.0 565.51 L267.5 565.20 L267.0 565.58 L266.5 565.81 L266.0 565.74 L265.5 565.69 L265.0 565.65 L264.5 566.09 L264.0 566.26 L263.5 565.91 L263.0 565.73 L262.5 562.95Z" fill="#d4d4d4" stroke="#c4c4c4" stroke-width="0.6"/><path d="M254.0 582.25 L254.5 582.25 L255.0 582.25 L255.5 582.25 L256.0 582.25 L256.5 582.25 L257.0 582.25 L257.5 582.25 L258.0 582.25 L258.5 582.25 L259.0 582.25 L259.5 582.25 L260.0 582.25 L260.5 582.25 L261.0 582.25 L261.5 582.25 L262.0 582.25 L262.5 580.25 L263.0 579.96 L263.5 578.75 L264.0 579.18 L264.5 578.45 L265.0 578.40 L265.5 578.47 L266.0 578.24 L266.5 578.53 L267.0 578.89 L267.5 578.25 L268.0 578.71 L268.5 579.74 L269.0 579.34 L269.5 579.09 L270.0 578.98 L270.5 578.86 L271.0 578.89 L271.5 579.08 L272.0 579.11 L272.5 579.05 L273.0 578.87 L273.5 578.64 L274.0 578.63 L274.5 579.12 L275.0 578.86 L275.5 578.41 L276.0 578.06 L276.5 577.93 L277.0 577.98 L277.5 578.45 L278.0 578.39 L278.5 578.04 L279.0 578.02 L279.5 578.24 L280.0 578.67 L280.5 578.73 L281.0 578.95 L281.5 579.34 L282.0 579.27 L282.5 579.22 L283.0 579.26 L283.5 579.79 L284.0 580.02 L284.5 579.39 L285.0 578.90 L285.5 578.55 L286.0 578.58 L286.5 578.63 L287.0 578.70 L287.5 578.95 L288.0 578.74 L288.5 578.30 L289.0 578.38 L289.5 578.48 L290.0 578.61 L290.5 578.16 L291.0 578.34 L291.5 579.23 L292.0 578.70 L292.5 578.66 L293.0 579.57 L293.5 579.29 L294.0 579.01 L294.5 579.26 L295.0 579.60 L295.5 579.77 L296.0 579.30 L296.5 579.32 L297.0 579.47 L297.5 579.30 L298.0 578.97 L298.5 578.34 L299.0 579.58 L299.5 580.56 L300.0 581.33 L300.5 581.51 L301.0 581.65 L301.5 581.73 L302.0 581.66 L302.5 581.22 L303.0 580.49 L303.5 579.03 L304.0 577.77 L304.5 577.27 L305.0 577.27 L305.5 577.27 L306.0 576.71 L306.5 576.94 L307.0 577.36 L307.5 576.94 L308.0 577.08 L308.5 577.51 L309.0 577.24 L309.5 576.89 L310.0 576.49 L310.5 576.39 L311.0 576.37 L311.5 576.44 L312.0 577.00 L312.5 577.30 L313.0 577.14 L313.5 577.42 L314.0 577.75 L314.5 578.02 L315.0 577.82 L315.5 577.49 L316.0 577.17 L316.5 577.10 L317.0 577.15 L317.5 577.34 L318.0 577.26 L318.5 577.09 L319.0 577.84 L319.5 578.24 L320.0 578.34 L320.5 578.00 L321.0 577.88 L321.5 578.03 L322.0 578.06 L322.5 577.95 L323.0 577.67 L323.5 577.37 L324.0 577.19 L324.5 577.27 L325.0 577.39 L325.5 577.35 L326.0 576.72 L326.5 576.39 L327.0 576.31 L327.5 576.87 L328.0 577.34 L328.5 577.73 L329.0 577.78 L329.5 577.32 L330.0 576.42 L330.5 577.37 L331.0 577.57 L331.5 576.89 L332.0 577.03 L332.5 577.30 L333.0 577.65 L333.5 577.31 L334.0 577.27 L334.5 578.19 L335.0 578.34 L335.5 578.21 L336.0 577.90 L336.5 578.16 L337.0 578.45 L337.5 577.58 L338.0 577.64 L338.5 578.25 L339.0 578.34 L339.5 578.42 L340.0 578.48 L340.5 577.79 L341.0 577.49 L341.5 577.63 L342.0 577.40 L342.5 577.20 L343.0 577.10 L343.5 576.89 L344.0 576.66 L344.5 576.44 L345.0 576.58 L345.5 576.89 L346.0 577.39 L346.5 577.32 L347.0 577.10 L347.5 577.42 L348.0 577.67 L348.5 577.81 L349.0 577.33 L349.5 576.99 L350.0 576.77 L350.5 577.41 L351.0 577.74 L351.5 577.70 L352.0 577.68 L352.5 577.55 L353.0 577.22 L353.5 577.39 L354.0 577.55 L354.5 577.50 L355.0 577.40 L355.5 577.41 L356.0 577.84 L356.5 577.67 L357.0 577.28 L357.5 577.15 L358.0 577.64 L358.5 578.38 L359.0 577.41 L359.5 577.06 L360.0 577.24 L360.5 577.84 L361.0 577.96 L361.5 577.54 L362.0 577.27 L362.5 576.97 L363.0 576.59 L363.5 576.98 L364.0 577.27 L364.5 577.02 L365.0 576.67 L365.5 576.40 L366.0 576.47 L366.5 576.38 L367.0 576.33 L367.5 576.88 L368.0 576.98 L368.5 576.86 L369.0 577.40 L369.5 577.37 L370.0 576.86 L370.5 576.81 L371.0 576.91 L371.5 577.17 L372.0 577.18 L372.5 577.40 L373.0 578.02 L373.5 577.51 L374.0 577.01 L374.5 576.95 L375.0 576.96 L375.5 577.09 L376.0 577.59 L376.5 577.54 L377.0 577.37 L377.5 577.86 L378.0 577.62 L378.5 576.98 L379.0 576.99 L379.5 577.26 L380.0 577.76 L380.5 577.99 L381.0 577.90 L381.5 577.44 L382.0 577.23 L382.0 588.17 L381.5 587.96 L381.0 587.50 L380.5 587.41 L380.0 587.64 L379.5 588.14 L379.0 588.41 L378.5 588.42 L378.0 587.78 L377.5 587.54 L377.0 588.03 L376.5 587.86 L376.0 587.81 L375.5 588.31 L375.0 588.44 L374.5 588.45 L374.0 588.39 L373.5 587.89 L373.0 587.38 L372.5 588.00 L372.0 588.22 L371.5 588.23 L371.0 588.49 L370.5 588.59 L370.0 588.54 L369.5 588.03 L369.0 588.00 L368.5 588.54 L368.0 588.42 L367.5 588.52 L367.0 589.07 L366.5 589.02 L366.0 588.93 L365.5 589.00 L365.0 588.73 L364.5 588.38 L364.0 588.13 L363.5 588.42 L363.0 588.81 L362.5 588.43 L362.0 588.13 L361.5 587.86 L361.0 587.44 L360.5 587.56 L360.0 588.16 L359.5 588.34 L359.0 587.99 L358.5 587.02 L358.0 587.76 L357.5 588.25 L357.0 588.12 L356.5 587.73 L356.0 587.56 L355.5 587.99 L355.0 588.00 L354.5 587.90 L354.0 587.85 L353.5 588.01 L353.0 588.18 L352.5 587.85 L352.0 587.72 L351.5 587.70 L351.0 587.66 L350.5 587.99 L350.0 588.63 L349.5 588.41 L349.0 588.07 L348.5 587.59 L348.0 587.73 L347.5 587.98 L347.0 588.30 L346.5 588.08 L346.0 588.01 L345.5 588.51 L345.0 588.82 L344.5 588.96 L344.0 588.74 L343.5 588.51 L343.0 588.30 L342.5 588.20 L342.0 588.00 L341.5 587.77 L341.0 587.91 L340.5 587.61 L340.0 586.92 L339.5 586.98 L339.0 587.06 L338.5 587.15 L338.0 587.76 L337.5 587.82 L337.0 586.95 L336.5 587.24 L336.0 587.50 L335.5 587.19 L335.0 587.06 L334.5 587.21 L334.0 588.13 L333.5 588.09 L333.0 587.75 L332.5 588.10 L332.0 588.37 L331.5 588.51 L331.0 587.83 L330.5 588.03 L330.0 588.98 L329.5 588.08 L329.0 587.62 L328.5 587.67 L328.0 588.06 L327.5 588.53 L327.0 589.09 L326.5 589.01 L326.0 588.68 L325.5 588.05 L325.0 588.01 L324.5 588.13 L324.0 588.21 L323.5 588.03 L323.0 587.73 L322.5 587.45 L322.0 587.34 L321.5 587.37 L321.0 587.52 L320.5 587.40 L320.0 587.06 L319.5 587.16 L319.0 587.56 L318.5 588.31 L318.0 588.14 L317.5 588.06 L317.0 588.25 L316.5 588.30 L316.0 588.23 L315.5 587.91 L315.0 587.58 L314.5 587.38 L314.0 587.65 L313.5 587.98 L313.0 588.26 L312.5 588.10 L312.0 588.40 L311.5 588.96 L311.0 589.03 L310.5 589.01 L310.0 588.91 L309.5 588.51 L309.0 588.16 L308.5 587.89 L308.0 588.32 L307.5 588.46 L307.0 588.04 L306.5 588.46 L306.0 588.69 L305.5 588.13 L305.0 588.13 L304.5 588.13 L304.0 587.63 L303.5 586.37 L303.0 584.91 L302.5 584.18 L302.0 583.74 L301.5 583.67 L301.0 583.75 L300.5 583.89 L300.0 584.07 L299.5 584.84 L299.0 585.82 L298.5 587.06 L298.0 586.43 L297.5 586.10 L297.0 585.93 L296.5 586.08 L296.0 586.10 L295.5 585.63 L295.0 585.80 L294.5 586.14 L294.0 586.39 L293.5 586.11 L293.0 585.83 L292.5 586.74 L292.0 586.70 L291.5 586.17 L291.0 587.06 L290.5 587.24 L290.0 586.79 L289.5 586.92 L289.0 587.02 L288.5 587.10 L288.0 586.66 L287.5 586.45 L287.0 586.70 L286.5 586.77 L286.0 586.82 L285.5 586.85 L285.0 586.50 L284.5 586.01 L284.0 585.38 L283.5 585.61 L283.0 586.14 L282.5 586.18 L282.0 586.13 L281.5 586.06 L281.0 586.45 L280.5 586.67 L280.0 586.73 L279.5 587.16 L279.0 587.38 L278.5 587.36 L278.0 587.01 L277.5 586.95 L277.0 587.42 L276.5 587.47 L276.0 587.34 L275.5 586.99 L275.0 586.54 L274.5 586.28 L274.0 586.77 L273.5 586.76 L273.0 586.53 L272.5 586.35 L272.0 586.29 L271.5 586.32 L271.0 586.51 L270.5 586.54 L270.0 586.42 L269.5 586.31 L269.0 586.06 L268.5 585.66 L268.0 586.69 L267.5 587.15 L267.0 586.51 L266.5 586.87 L266.0 587.16 L265.5 586.93 L265.0 587.00 L264.5 586.95 L264.0 586.22 L263.5 586.65 L263.0 585.44 L262.5 585.15 L262.0 583.15 L261.5 583.15 L261.0 583.15 L260.5 583.15 L260.0 583.15 L259.5 583.15 L259.0 583.15 L258.5 583.15 L258.0 583.15 L257.5 583.15 L257.0 583.15 L256.5 583.15 L256.0 583.15 L255.5 583.15 L255.0 583.15 L254.5 583.15 L254.0 583.15Z" fill="#b1b1b1" stroke="#484848" stroke-width="0.85" stroke-linejoin="round"/><path d="M385.8 580.8 V584.6 M385.8 582.7 H722" stroke="#444" stroke-width="0.9" fill="none"/><path d="M304.8 607.41 L305.3 607.57 L305.8 607.77 L306.3 607.47 L306.8 607.32 L307.3 607.63 L307.8 607.57 L308.3 607.26 L308.8 607.49 L309.3 607.66 L309.8 607.59 L310.3 607.45 L310.8 607.26 L311.3 607.50 L311.8 607.70 L312.3 607.70 L312.8 607.60 L313.3 607.45 L313.8 607.36 L314.3 607.28 L314.8 607.23 L315.3 607.25 L315.8 607.31 L316.3 607.22 L316.8 607.19 L317.3 607.38 L317.8 607.34 L318.3 607.15 L318.8 607.47 L319.3 607.72 L319.8 607.67 L320.3 607.57 L320.8 607.44 L321.3 607.52 L321.8 607.55 L322.3 607.36 L322.8 607.31 L323.3 607.35 L323.8 607.40 L324.3 607.40 L324.8 607.26 L325.3 607.28 L325.8 607.40 L326.3 607.51 L326.8 607.57 L327.3 607.54 L327.8 607.42 L328.3 607.22 L328.8 607.19 L329.3 607.25 L329.8 607.54 L330.3 607.49 L330.8 607.22 L331.3 607.16 L331.8 607.17 L332.3 607.36 L332.8 607.42 L333.3 607.40 L333.8 607.54 L334.3 607.62 L334.8 607.48 L335.3 607.43 L335.8 607.45 L336.3 607.41 L336.8 607.44 L337.3 607.68 L337.8 607.54 L338.3 607.15 L338.8 607.30 L339.3 607.45 L339.8 607.50 L340.3 607.42 L340.8 607.25 L341.3 607.33 L341.8 607.41 L342.3 607.44 L342.8 607.41 L343.3 607.32 L343.8 607.56 L344.3 607.70 L344.8 607.50 L345.3 607.45 L345.8 607.51 L346.3 607.30 L346.8 607.13 L347.3 607.15 L347.8 607.32 L348.3 607.59 L348.8 607.53 L349.3 607.51 L349.8 607.65 L350.3 607.63 L350.8 607.51 L351.3 607.35 L351.8 607.22 L352.3 607.18 L352.8 607.28 L353.3 607.45 L353.8 607.53 L354.3 607.59 L354.8 607.64 L355.3 607.56 L355.8 607.38 L356.3 607.25 L356.8 607.24 L357.3 607.58 L357.8 607.55 L358.3 607.27 L358.8 607.55 L359.3 607.76 L359.8 607.69 L360.3 607.66 L360.8 607.64 L361.3 607.46 L361.8 607.36 L362.3 607.51 L362.8 607.57 L363.3 607.55 L363.8 607.45 L364.3 607.42 L364.8 607.64 L365.3 607.57 L365.8 607.31 L366.3 607.53 L366.8 607.67 L367.3 607.51 L367.8 607.51 L368.3 607.62 L368.8 607.65 L369.3 607.62 L369.8 607.48 L370.3 607.45 L370.8 607.49 L371.3 607.52 L371.8 607.53 L372.3 607.52 L372.8 607.48 L373.3 607.43 L373.8 607.57 L374.3 607.68 L374.8 607.66 L375.3 607.55 L375.8 607.37 L376.3 607.36 L376.8 607.37 L377.3 607.41 L377.8 607.35 L378.3 607.21 L378.8 607.30 L379.3 607.34 L379.8 607.24 L380.3 607.36 L380.8 607.62 L381.3 607.44 L381.8 607.27 L381.8 609.33 L381.3 609.16 L380.8 608.98 L380.3 609.24 L379.8 609.36 L379.3 609.26 L378.8 609.30 L378.3 609.39 L377.8 609.25 L377.3 609.19 L376.8 609.23 L376.3 609.24 L375.8 609.23 L375.3 609.05 L374.8 608.94 L374.3 608.92 L373.8 609.03 L373.3 609.17 L372.8 609.12 L372.3 609.08 L371.8 609.07 L371.3 609.08 L370.8 609.11 L370.3 609.15 L369.8 609.12 L369.3 608.98 L368.8 608.95 L368.3 608.98 L367.8 609.09 L367.3 609.09 L366.8 608.93 L366.3 609.07 L365.8 609.29 L365.3 609.03 L364.8 608.96 L364.3 609.18 L363.8 609.15 L363.3 609.05 L362.8 609.03 L362.3 609.09 L361.8 609.24 L361.3 609.14 L360.8 608.96 L360.3 608.94 L359.8 608.91 L359.3 608.84 L358.8 609.05 L358.3 609.33 L357.8 609.05 L357.3 609.02 L356.8 609.36 L356.3 609.35 L355.8 609.22 L355.3 609.04 L354.8 608.96 L354.3 609.01 L353.8 609.07 L353.3 609.15 L352.8 609.32 L352.3 609.42 L351.8 609.38 L351.3 609.25 L350.8 609.09 L350.3 608.97 L349.8 608.95 L349.3 609.09 L348.8 609.07 L348.3 609.01 L347.8 609.28 L347.3 609.45 L346.8 609.47 L346.3 609.30 L345.8 609.09 L345.3 609.15 L344.8 609.10 L344.3 608.90 L343.8 609.04 L343.3 609.28 L342.8 609.19 L342.3 609.16 L341.8 609.19 L341.3 609.27 L340.8 609.35 L340.3 609.18 L339.8 609.10 L339.3 609.15 L338.8 609.30 L338.3 609.45 L337.8 609.06 L337.3 608.92 L336.8 609.16 L336.3 609.19 L335.8 609.15 L335.3 609.17 L334.8 609.12 L334.3 608.98 L333.8 609.06 L333.3 609.20 L332.8 609.18 L332.3 609.24 L331.8 609.43 L331.3 609.44 L330.8 609.38 L330.3 609.11 L329.8 609.06 L329.3 609.35 L328.8 609.41 L328.3 609.38 L327.8 609.18 L327.3 609.06 L326.8 609.03 L326.3 609.09 L325.8 609.20 L325.3 609.32 L324.8 609.34 L324.3 609.20 L323.8 609.20 L323.3 609.25 L322.8 609.29 L322.3 609.24 L321.8 609.05 L321.3 609.08 L320.8 609.16 L320.3 609.03 L319.8 608.93 L319.3 608.88 L318.8 609.13 L318.3 609.45 L317.8 609.26 L317.3 609.22 L316.8 609.41 L316.3 609.38 L315.8 609.29 L315.3 609.35 L314.8 609.37 L314.3 609.32 L313.8 609.24 L313.3 609.15 L312.8 609.00 L312.3 608.90 L311.8 608.90 L311.3 609.10 L310.8 609.34 L310.3 609.15 L309.8 609.01 L309.3 608.94 L308.8 609.11 L308.3 609.34 L307.8 609.03 L307.3 608.97 L306.8 609.28 L306.3 609.13 L305.8 608.83 L305.3 609.03 L304.8 609.19Z" fill="#8a8a8a" stroke="#505050" stroke-width="0.7" stroke-linejoin="round"/><path d="M385.5 608.3 H390" stroke="#999" stroke-width="0.9"/><path d="M254 628.7 H304.8" stroke="#444" stroke-width="0.9"/><path d="M304.8 627.88 L305.3 627.98 L305.8 627.98 L306.3 627.74 L306.8 627.63 L307.3 627.93 L307.8 627.85 L308.3 627.52 L308.8 627.54 L309.3 627.66 L309.8 627.98 L310.3 628.08 L310.8 628.04 L311.3 627.84 L311.8 627.74 L312.3 627.94 L312.8 628.06 L313.3 628.13 L313.8 627.84 L314.3 627.66 L314.8 627.84 L315.3 627.81 L315.8 627.66 L316.3 627.91 L316.8 628.08 L317.3 627.96 L317.8 627.85 L318.3 627.73 L318.8 627.98 L319.3 628.17 L319.8 628.09 L320.3 627.94 L320.8 627.74 L321.3 627.63 L321.8 627.56 L322.3 627.53 L322.8 627.74 L323.3 628.10 L323.8 627.97 L324.3 627.82 L324.8 627.71 L325.3 627.73 L325.8 627.84 L326.3 627.78 L326.8 627.78 L327.3 627.98 L327.8 628.10 L328.3 628.15 L328.8 628.14 L329.3 628.13 L329.8 628.16 L330.3 628.04 L330.8 627.83 L331.3 627.83 L331.8 627.83 L332.3 627.81 L332.8 627.91 L333.3 628.09 L333.8 628.08 L334.3 628.07 L334.8 628.06 L335.3 627.90 L335.8 627.63 L336.3 627.55 L336.8 627.51 L337.3 627.54 L337.8 627.76 L338.3 628.11 L338.8 628.15 L339.3 628.06 L339.8 627.68 L340.3 627.66 L340.8 627.86 L341.3 627.76 L341.8 627.71 L342.3 627.90 L342.8 627.94 L343.3 627.88 L343.8 627.85 L344.3 627.85 L344.8 627.88 L345.3 627.86 L345.8 627.78 L346.3 628.01 L346.8 628.11 L347.3 627.82 L347.8 627.67 L348.3 627.61 L348.8 627.87 L349.3 628.04 L349.8 627.93 L350.3 627.81 L350.8 627.69 L351.3 627.81 L351.8 627.94 L352.3 628.03 L352.8 628.07 L353.3 628.08 L353.8 627.95 L354.3 627.90 L354.8 628.11 L355.3 627.97 L355.8 627.60 L356.3 627.61 L356.8 627.65 L357.3 627.69 L357.8 627.67 L358.3 627.60 L358.8 627.69 L359.3 627.78 L359.8 627.88 L360.3 627.87 L360.8 627.79 L361.3 627.82 L361.8 627.79 L362.3 627.59 L362.8 627.56 L363.3 627.63 L363.8 627.85 L364.3 627.95 L364.8 627.67 L365.3 627.60 L365.8 627.67 L366.3 627.67 L366.8 627.65 L367.3 627.64 L367.8 627.73 L368.3 627.90 L368.8 627.72 L369.3 627.57 L369.8 627.58 L370.3 627.63 L370.8 627.71 L371.3 627.69 L371.8 627.66 L372.3 627.66 L372.8 627.75 L373.3 627.91 L373.8 627.79 L374.3 627.77 L374.8 628.04 L375.3 628.08 L375.8 627.97 L376.3 627.91 L376.8 627.92 L377.3 628.12 L377.8 628.11 L378.3 627.96 L378.8 627.84 L379.3 627.75 L379.8 627.76 L380.3 627.86 L380.8 628.03 L381.3 627.76 L381.8 627.57 L381.8 629.83 L381.3 629.64 L380.8 629.37 L380.3 629.54 L379.8 629.64 L379.3 629.65 L378.8 629.56 L378.3 629.44 L377.8 629.29 L377.3 629.28 L376.8 629.48 L376.3 629.49 L375.8 629.43 L375.3 629.32 L374.8 629.36 L374.3 629.63 L373.8 629.61 L373.3 629.49 L372.8 629.65 L372.3 629.74 L371.8 629.74 L371.3 629.71 L370.8 629.69 L370.3 629.77 L369.8 629.82 L369.3 629.83 L368.8 629.68 L368.3 629.50 L367.8 629.67 L367.3 629.76 L366.8 629.75 L366.3 629.73 L365.8 629.73 L365.3 629.80 L364.8 629.73 L364.3 629.45 L363.8 629.55 L363.3 629.77 L362.8 629.84 L362.3 629.81 L361.8 629.61 L361.3 629.58 L360.8 629.61 L360.3 629.53 L359.8 629.52 L359.3 629.62 L358.8 629.71 L358.3 629.80 L357.8 629.73 L357.3 629.71 L356.8 629.75 L356.3 629.79 L355.8 629.80 L355.3 629.43 L354.8 629.29 L354.3 629.50 L353.8 629.45 L353.3 629.32 L352.8 629.33 L352.3 629.37 L351.8 629.46 L351.3 629.59 L350.8 629.71 L350.3 629.59 L349.8 629.47 L349.3 629.36 L348.8 629.53 L348.3 629.79 L347.8 629.73 L347.3 629.58 L346.8 629.29 L346.3 629.39 L345.8 629.62 L345.3 629.54 L344.8 629.52 L344.3 629.55 L343.8 629.55 L343.3 629.52 L342.8 629.46 L342.3 629.50 L341.8 629.69 L341.3 629.64 L340.8 629.54 L340.3 629.74 L339.8 629.72 L339.3 629.34 L338.8 629.25 L338.3 629.29 L337.8 629.64 L337.3 629.86 L336.8 629.89 L336.3 629.85 L335.8 629.77 L335.3 629.50 L334.8 629.34 L334.3 629.33 L333.8 629.32 L333.3 629.31 L332.8 629.49 L332.3 629.59 L331.8 629.57 L331.3 629.57 L330.8 629.57 L330.3 629.36 L329.8 629.24 L329.3 629.27 L328.8 629.26 L328.3 629.25 L327.8 629.30 L327.3 629.42 L326.8 629.62 L326.3 629.62 L325.8 629.56 L325.3 629.67 L324.8 629.69 L324.3 629.58 L323.8 629.43 L323.3 629.30 L322.8 629.66 L322.3 629.87 L321.8 629.84 L321.3 629.77 L320.8 629.66 L320.3 629.46 L319.8 629.31 L319.3 629.23 L318.8 629.42 L318.3 629.67 L317.8 629.55 L317.3 629.44 L316.8 629.32 L316.3 629.49 L315.8 629.74 L315.3 629.59 L314.8 629.56 L314.3 629.74 L313.8 629.56 L313.3 629.27 L312.8 629.34 L312.3 629.46 L311.8 629.66 L311.3 629.56 L310.8 629.36 L310.3 629.32 L309.8 629.42 L309.3 629.74 L308.8 629.86 L308.3 629.88 L307.8 629.55 L307.3 629.47 L306.8 629.77 L306.3 629.66 L305.8 629.42 L305.3 629.42 L304.8 629.52Z" fill="#8a8a8a" stroke="#505050" stroke-width="0.7" stroke-linejoin="round"/><path d="M385.8 626.8 V630.6 M385.8 628.7 H722" stroke="#444" stroke-width="0.9" fill="none"/><path d="M308.2 653.05 L308.6 652.23 L309.0 651.75 L309.4 651.49 L309.8 651.37 L310.2 651.39 L310.6 651.53 L311.0 651.81 L311.4 652.26 L311.8 653.04 L312.2 652.24 L312.6 651.70 L313.0 651.30 L313.4 651.24 L313.8 651.31 L314.2 651.48 L314.6 651.74 L315.0 652.14 L315.4 652.89 L315.8 652.12 L316.2 651.67 L316.6 651.36 L317.0 651.18 L317.4 651.37 L317.8 651.70 L318.2 652.01 L318.6 652.31 L319.0 652.94 L319.4 652.16 L319.8 651.72 L320.2 651.48 L320.6 651.44 L321.0 651.54 L321.4 651.65 L321.8 651.89 L322.2 652.33 L322.6 653.15 L323.0 652.47 L323.4 652.02 L323.8 651.72 L324.2 651.55 L324.6 651.52 L325.0 651.62 L325.4 651.94 L325.8 652.42 L326.2 653.19 L326.6 652.40 L327.0 651.95 L327.4 651.55 L327.8 651.28 L328.2 651.25 L328.6 651.46 L329.0 651.80 L329.4 652.23 L329.8 652.99 L330.2 652.20 L330.6 651.68 L331.0 651.32 L331.4 651.26 L331.8 651.34 L332.2 651.48 L332.6 651.66 L333.0 652.00 L333.4 652.82 L333.8 652.14 L334.2 651.74 L334.6 651.43 L335.0 651.26 L335.4 651.41 L335.8 651.69 L336.2 651.99 L336.6 652.30 L337.0 652.95 L337.4 652.16 L337.8 651.71 L338.2 651.50 L338.6 651.50 L339.0 651.64 L339.4 651.60 L339.8 651.70 L340.2 652.11 L340.6 653.02 L341.0 652.42 L341.4 651.93 L341.8 651.60 L342.2 651.46 L342.6 651.52 L343.0 651.72 L343.4 651.93 L343.8 652.28 L344.2 652.99 L344.6 652.21 L345.0 651.77 L345.4 651.61 L345.8 651.58 L346.2 651.55 L346.6 651.51 L347.0 651.60 L347.4 652.13 L347.8 652.99 L348.2 652.27 L348.6 651.83 L349.0 651.54 L349.4 651.39 L349.8 651.38 L350.2 651.53 L350.6 651.85 L351.0 652.31 L351.4 653.08 L351.8 652.34 L352.2 651.90 L352.6 651.55 L353.0 651.34 L353.4 651.36 L353.8 651.51 L354.2 651.82 L354.6 652.30 L355.0 653.11 L355.4 652.27 L355.8 651.76 L356.2 651.49 L356.6 651.43 L357.0 651.52 L357.4 651.71 L357.8 652.04 L358.2 652.46 L358.6 653.17 L359.0 652.37 L359.4 651.99 L359.8 651.76 L360.2 651.63 L360.6 651.61 L361.0 651.72 L361.4 651.88 L361.8 652.18 L362.2 652.91 L362.6 652.23 L363.0 651.88 L363.4 651.51 L363.8 651.27 L364.2 651.23 L364.6 651.40 L365.0 651.70 L365.4 652.26 L365.8 653.16 L366.2 652.38 L366.6 651.77 L367.0 651.31 L367.4 651.18 L367.8 651.19 L368.2 651.42 L368.6 651.86 L369.0 652.46 L369.4 653.05 L369.8 652.13 L370.2 651.67 L370.6 651.49 L371.0 651.45 L371.4 651.44 L371.8 651.57 L372.2 651.79 L372.6 652.11 L373.0 652.76 L373.4 652.15 L373.8 651.88 L374.2 651.65 L374.6 651.46 L375.0 651.41 L375.4 651.46 L375.8 651.65 L376.2 652.05 L376.6 652.85 L377.0 652.13 L377.4 651.77 L377.8 651.54 L378.2 651.38 L378.6 651.28 L379.0 651.31 L379.4 651.62 L379.8 652.07 L380.2 652.86 L380.6 652.15 L381.0 651.77 L381.4 651.60 L381.8 651.56 L381.8 656.44 L381.4 656.40 L381.0 656.23 L380.6 655.85 L380.2 655.14 L379.8 655.93 L379.4 656.38 L379.0 656.69 L378.6 656.72 L378.2 656.62 L377.8 656.46 L377.4 656.23 L377.0 655.87 L376.6 655.15 L376.2 655.95 L375.8 656.35 L375.4 656.54 L375.0 656.59 L374.6 656.54 L374.2 656.35 L373.8 656.12 L373.4 655.85 L373.0 655.24 L372.6 655.89 L372.2 656.21 L371.8 656.43 L371.4 656.56 L371.0 656.55 L370.6 656.51 L370.2 656.33 L369.8 655.87 L369.4 654.95 L369.0 655.54 L368.6 656.14 L368.2 656.58 L367.8 656.81 L367.4 656.82 L367.0 656.69 L366.6 656.23 L366.2 655.62 L365.8 654.84 L365.4 655.74 L365.0 656.30 L364.6 656.60 L364.2 656.77 L363.8 656.73 L363.4 656.49 L363.0 656.12 L362.6 655.77 L362.2 655.09 L361.8 655.82 L361.4 656.12 L361.0 656.28 L360.6 656.39 L360.2 656.37 L359.8 656.24 L359.4 656.01 L359.0 655.63 L358.6 654.83 L358.2 655.54 L357.8 655.96 L357.4 656.29 L357.0 656.48 L356.6 656.57 L356.2 656.51 L355.8 656.24 L355.4 655.73 L355.0 654.89 L354.6 655.70 L354.2 656.18 L353.8 656.49 L353.4 656.64 L353.0 656.66 L352.6 656.45 L352.2 656.10 L351.8 655.66 L351.4 654.92 L351.0 655.69 L350.6 656.15 L350.2 656.47 L349.8 656.62 L349.4 656.61 L349.0 656.46 L348.6 656.17 L348.2 655.73 L347.8 655.01 L347.4 655.87 L347.0 656.40 L346.6 656.49 L346.2 656.45 L345.8 656.42 L345.4 656.39 L345.0 656.23 L344.6 655.79 L344.2 655.01 L343.8 655.72 L343.4 656.07 L343.0 656.28 L342.6 656.48 L342.2 656.54 L341.8 656.40 L341.4 656.07 L341.0 655.58 L340.6 654.98 L340.2 655.89 L339.8 656.30 L339.4 656.40 L339.0 656.36 L338.6 656.50 L338.2 656.50 L337.8 656.29 L337.4 655.84 L337.0 655.05 L336.6 655.70 L336.2 656.01 L335.8 656.31 L335.4 656.59 L335.0 656.74 L334.6 656.57 L334.2 656.26 L333.8 655.86 L333.4 655.18 L333.0 656.00 L332.6 656.34 L332.2 656.52 L331.8 656.66 L331.4 656.74 L331.0 656.68 L330.6 656.32 L330.2 655.80 L329.8 655.01 L329.4 655.77 L329.0 656.20 L328.6 656.54 L328.2 656.75 L327.8 656.72 L327.4 656.45 L327.0 656.05 L326.6 655.60 L326.2 654.81 L325.8 655.58 L325.4 656.06 L325.0 656.38 L324.6 656.48 L324.2 656.45 L323.8 656.28 L323.4 655.98 L323.0 655.53 L322.6 654.85 L322.2 655.67 L321.8 656.11 L321.4 656.35 L321.0 656.46 L320.6 656.56 L320.2 656.52 L319.8 656.28 L319.4 655.84 L319.0 655.06 L318.6 655.69 L318.2 655.99 L317.8 656.30 L317.4 656.63 L317.0 656.82 L316.6 656.64 L316.2 656.33 L315.8 655.88 L315.4 655.11 L315.0 655.86 L314.6 656.26 L314.2 656.52 L313.8 656.69 L313.4 656.76 L313.0 656.70 L312.6 656.30 L312.2 655.76 L311.8 654.96 L311.4 655.74 L311.0 656.19 L310.6 656.47 L310.2 656.61 L309.8 656.63 L309.4 656.51 L309.0 656.25 L308.6 655.77 L308.2 654.95Z" fill="#b1b1b1" stroke="#484848" stroke-width="0.85" stroke-linejoin="round"/><path d="M254 674.2 H300" stroke="#444" stroke-width="0.9"/><path d="M300.0 673.14 L300.4 672.35 L300.8 671.93 L301.2 671.66 L301.6 671.54 L302.0 671.55 L302.4 671.69 L302.8 671.96 L303.2 672.31 L303.6 672.77 L304.0 672.68 L304.4 672.20 L304.8 671.90 L305.2 671.66 L305.6 671.50 L306.0 671.47 L306.4 671.59 L306.8 671.86 L307.2 672.32 L307.6 673.18 L308.0 672.40 L308.4 671.98 L308.8 671.71 L309.2 671.53 L309.6 671.43 L310.0 671.47 L310.4 671.74 L310.8 672.15 L311.2 672.70 L311.6 672.62 L312.0 671.99 L312.4 671.66 L312.8 671.47 L313.2 671.34 L313.6 671.28 L314.0 671.36 L314.4 671.68 L314.8 672.15 L315.2 673.00 L315.6 672.22 L316.0 671.80 L316.4 671.59 L316.8 671.52 L317.2 671.55 L317.6 671.68 L318.0 671.94 L318.4 672.17 L318.8 672.57 L319.2 672.51 L319.6 671.97 L320.0 671.61 L320.4 671.40 L320.8 671.33 L321.2 671.40 L321.6 671.63 L322.0 671.99 L322.4 672.47 L322.8 673.31 L323.2 672.45 L323.6 671.91 L324.0 671.52 L324.4 671.37 L324.8 671.36 L325.2 671.47 L325.6 671.71 L326.0 672.08 L326.4 672.64 L326.8 672.63 L327.2 672.05 L327.6 671.65 L328.0 671.38 L328.4 671.39 L328.8 671.54 L329.2 671.76 L329.6 672.06 L330.0 672.51 L330.4 673.18 L330.8 672.21 L331.2 671.69 L331.6 671.39 L332.0 671.23 L332.4 671.20 L332.8 671.31 L333.2 671.64 L333.6 672.19 L334.0 672.92 L334.4 672.92 L334.8 672.35 L335.2 671.95 L335.6 671.66 L336.0 671.52 L336.4 671.52 L336.8 671.66 L337.2 671.94 L337.6 672.36 L338.0 673.14 L338.4 672.42 L338.8 672.07 L339.2 671.77 L339.6 671.51 L340.0 671.38 L340.4 671.58 L340.8 671.91 L341.2 672.34 L341.6 672.90 L342.0 672.90 L342.4 672.22 L342.8 671.72 L343.2 671.43 L343.6 671.35 L344.0 671.41 L344.4 671.57 L344.8 671.86 L345.2 672.34 L345.6 673.21 L346.0 672.44 L346.4 671.96 L346.8 671.63 L347.2 671.48 L347.6 671.50 L348.0 671.65 L348.4 671.87 L348.8 672.22 L349.2 672.73 L349.6 672.65 L350.0 672.01 L350.4 671.61 L350.8 671.35 L351.2 671.31 L351.6 671.50 L352.0 671.82 L352.4 672.12 L352.8 672.58 L353.2 673.32 L353.6 672.36 L354.0 671.77 L354.4 671.49 L354.8 671.36 L355.2 671.33 L355.6 671.40 L356.0 671.61 L356.4 672.11 L356.8 672.78 L357.2 672.81 L357.6 672.21 L358.0 671.79 L358.4 671.58 L358.8 671.51 L359.2 671.50 L359.6 671.57 L360.0 671.77 L360.4 672.31 L360.8 673.22 L361.2 672.42 L361.6 671.90 L362.0 671.53 L362.4 671.29 L362.8 671.19 L363.2 671.33 L363.6 671.70 L364.0 672.22 L364.4 672.73 L364.8 672.69 L365.2 672.09 L365.6 671.66 L366.0 671.38 L366.4 671.25 L366.8 671.25 L367.2 671.45 L367.6 671.86 L368.0 672.42 L368.4 673.25 L368.8 672.44 L369.2 672.01 L369.6 671.76 L370.0 671.64 L370.4 671.45 L370.8 671.40 L371.2 671.64 L371.6 672.18 L372.0 672.90 L372.4 672.90 L372.8 672.34 L373.2 671.91 L373.6 671.57 L374.0 671.37 L374.4 671.42 L374.8 671.61 L375.2 671.91 L375.6 672.33 L376.0 673.11 L376.4 672.37 L376.8 671.98 L377.2 671.66 L377.6 671.40 L378.0 671.27 L378.4 671.51 L378.8 671.89 L379.2 672.33 L379.6 672.86 L380.0 672.83 L380.4 672.18 L380.8 671.71 L381.2 671.48 L381.6 671.50 L382.0 671.65 L382.0 676.75 L381.6 676.90 L381.2 676.92 L380.8 676.69 L380.4 676.22 L380.0 675.57 L379.6 675.54 L379.2 676.07 L378.8 676.51 L378.4 676.89 L378.0 677.13 L377.6 677.00 L377.2 676.74 L376.8 676.42 L376.4 676.03 L376.0 675.29 L375.6 676.07 L375.2 676.49 L374.8 676.79 L374.4 676.98 L374.0 677.03 L373.6 676.83 L373.2 676.49 L372.8 676.06 L372.4 675.50 L372.0 675.50 L371.6 676.22 L371.2 676.76 L370.8 677.00 L370.4 676.95 L370.0 676.76 L369.6 676.64 L369.2 676.39 L368.8 675.96 L368.4 675.15 L368.0 675.98 L367.6 676.54 L367.2 676.95 L366.8 677.15 L366.4 677.15 L366.0 677.02 L365.6 676.74 L365.2 676.31 L364.8 675.71 L364.4 675.67 L364.0 676.18 L363.6 676.70 L363.2 677.07 L362.8 677.21 L362.4 677.11 L362.0 676.87 L361.6 676.50 L361.2 675.98 L360.8 675.18 L360.4 676.09 L360.0 676.63 L359.6 676.83 L359.2 676.90 L358.8 676.89 L358.4 676.82 L358.0 676.61 L357.6 676.19 L357.2 675.59 L356.8 675.62 L356.4 676.29 L356.0 676.79 L355.6 677.00 L355.2 677.07 L354.8 677.04 L354.4 676.91 L354.0 676.63 L353.6 676.04 L353.2 675.08 L352.8 675.82 L352.4 676.28 L352.0 676.58 L351.6 676.90 L351.2 677.09 L350.8 677.05 L350.4 676.79 L350.0 676.39 L349.6 675.75 L349.2 675.67 L348.8 676.18 L348.4 676.53 L348.0 676.75 L347.6 676.90 L347.2 676.92 L346.8 676.77 L346.4 676.44 L346.0 675.96 L345.6 675.19 L345.2 676.06 L344.8 676.54 L344.4 676.83 L344.0 676.99 L343.6 677.05 L343.2 676.97 L342.8 676.68 L342.4 676.18 L342.0 675.50 L341.6 675.50 L341.2 676.06 L340.8 676.49 L340.4 676.82 L340.0 677.02 L339.6 676.89 L339.2 676.63 L338.8 676.33 L338.4 675.98 L338.0 675.26 L337.6 676.04 L337.2 676.46 L336.8 676.74 L336.4 676.88 L336.0 676.88 L335.6 676.74 L335.2 676.45 L334.8 676.05 L334.4 675.48 L334.0 675.48 L333.6 676.21 L333.2 676.76 L332.8 677.09 L332.4 677.20 L332.0 677.17 L331.6 677.01 L331.2 676.71 L330.8 676.19 L330.4 675.22 L330.0 675.89 L329.6 676.34 L329.2 676.64 L328.8 676.86 L328.4 677.01 L328.0 677.02 L327.6 676.75 L327.2 676.35 L326.8 675.77 L326.4 675.76 L326.0 676.32 L325.6 676.69 L325.2 676.93 L324.8 677.04 L324.4 677.03 L324.0 676.88 L323.6 676.49 L323.2 675.95 L322.8 675.09 L322.4 675.93 L322.0 676.41 L321.6 676.77 L321.2 677.00 L320.8 677.07 L320.4 677.00 L320.0 676.79 L319.6 676.43 L319.2 675.89 L318.8 675.83 L318.4 676.23 L318.0 676.46 L317.6 676.72 L317.2 676.85 L316.8 676.88 L316.4 676.81 L316.0 676.60 L315.6 676.18 L315.2 675.40 L314.8 676.25 L314.4 676.72 L314.0 677.04 L313.6 677.12 L313.2 677.06 L312.8 676.93 L312.4 676.74 L312.0 676.41 L311.6 675.78 L311.2 675.70 L310.8 676.25 L310.4 676.66 L310.0 676.93 L309.6 676.97 L309.2 676.87 L308.8 676.69 L308.4 676.42 L308.0 676.00 L307.6 675.22 L307.2 676.08 L306.8 676.54 L306.4 676.81 L306.0 676.93 L305.6 676.90 L305.2 676.74 L304.8 676.50 L304.4 676.20 L304.0 675.72 L303.6 675.63 L303.2 676.09 L302.8 676.44 L302.4 676.71 L302.0 676.85 L301.6 676.86 L301.2 676.74 L300.8 676.47 L300.4 676.05 L300.0 675.26Z" fill="#b1b1b1" stroke="#484848" stroke-width="0.85" stroke-linejoin="round"/><path d="M385.6 673.75 L385.9 672.99 L386.2 672.55 L386.5 672.23 L386.8 672.02 L387.1 671.91 L387.4 671.91 L387.7 672.02 L388.0 672.23 L388.3 672.55 L388.6 672.99 L388.9 673.75 L389.2 672.99 L389.5 672.55 L389.8 672.23 L390.1 672.02 L390.4 671.91 L390.7 671.91 L391.0 672.02 L391.3 672.23 L391.6 672.55 L391.9 672.99 L392.2 673.75 L392.5 672.99 L392.8 672.55 L393.1 672.23 L393.4 672.02 L393.7 671.91 L394.0 671.91 L394.3 672.02 L394.6 672.23 L394.9 672.55 L395.2 672.99 L395.5 673.75 L395.8 672.99 L396.1 672.55 L396.4 672.23 L396.7 672.02 L397.0 671.91 L397.3 671.91 L397.6 672.02 L397.9 672.23 L398.2 672.55 L398.5 672.99 L398.8 673.75 L399.1 672.99 L399.4 672.55 L399.7 672.23 L400.0 672.02 L400.3 671.91 L400.6 671.91 L400.9 672.02 L401.2 672.23 L401.5 672.55 L401.8 672.99 L402.1 673.75 L402.4 672.99 L402.7 672.55 L403.0 672.23 L403.3 672.02 L403.6 671.91 L403.9 671.91 L404.2 672.02 L404.5 672.23 L404.8 672.55 L405.1 672.99 L405.4 673.75 L405.7 672.99 L406.0 672.55 L406.3 672.23 L406.6 672.02 L406.9 671.91 L407.2 671.91 L407.5 672.02 L407.8 672.23 L408.1 672.55 L408.4 672.99 L408.7 673.75 L409.0 672.99 L409.3 672.55 L409.6 672.23 L409.9 672.02 L409.9 676.38 L409.6 676.17 L409.3 675.85 L409.0 675.41 L408.7 674.65 L408.4 675.41 L408.1 675.85 L407.8 676.17 L407.5 676.38 L407.2 676.49 L406.9 676.49 L406.6 676.38 L406.3 676.17 L406.0 675.85 L405.7 675.41 L405.4 674.65 L405.1 675.41 L404.8 675.85 L404.5 676.17 L404.2 676.38 L403.9 676.49 L403.6 676.49 L403.3 676.38 L403.0 676.17 L402.7 675.85 L402.4 675.41 L402.1 674.65 L401.8 675.41 L401.5 675.85 L401.2 676.17 L400.9 676.38 L400.6 676.49 L400.3 676.49 L400.0 676.38 L399.7 676.17 L399.4 675.85 L399.1 675.41 L398.8 674.65 L398.5 675.41 L398.2 675.85 L397.9 676.17 L397.6 676.38 L397.3 676.49 L397.0 676.49 L396.7 676.38 L396.4 676.17 L396.1 675.85 L395.8 675.41 L395.5 674.65 L395.2 675.41 L394.9 675.85 L394.6 676.17 L394.3 676.38 L394.0 676.49 L393.7 676.49 L393.4 676.38 L393.1 676.17 L392.8 675.85 L392.5 675.41 L392.2 674.65 L391.9 675.41 L391.6 675.85 L391.3 676.17 L391.0 676.38 L390.7 676.49 L390.4 676.49 L390.1 676.38 L389.8 676.17 L389.5 675.85 L389.2 675.41 L388.9 674.65 L388.6 675.41 L388.3 675.85 L388.0 676.17 L387.7 676.38 L387.4 676.49 L387.1 676.49 L386.8 676.38 L386.5 676.17 L386.2 675.85 L385.9 675.41 L385.6 674.65Z" fill="#d0d0d0" stroke="#484848" stroke-width="0.8"/><path d="M714.0 671.90 L714.3 671.97 L714.6 672.15 L714.9 672.43 L715.2 672.82 L715.5 673.39 L715.8 673.17 L716.1 672.68 L716.4 672.32 L716.7 672.08 L717.0 671.94 L717.3 671.90 L717.6 671.97 L717.9 672.15 L718.2 672.43 L718.5 672.82 L718.8 673.39 L719.1 673.17 L719.4 672.68 L719.7 672.32 L720.0 672.08 L720.3 671.94 L720.6 671.90 L720.9 671.97 L721.2 672.15 L721.5 672.43 L721.8 672.82 L721.8 675.58 L721.5 675.97 L721.2 676.25 L720.9 676.43 L720.6 676.50 L720.3 676.46 L720.0 676.32 L719.7 676.08 L719.4 675.72 L719.1 675.23 L718.8 675.01 L718.5 675.58 L718.2 675.97 L717.9 676.25 L717.6 676.43 L717.3 676.50 L717.0 676.46 L716.7 676.32 L716.4 676.08 L716.1 675.72 L715.8 675.23 L715.5 675.01 L715.2 675.58 L714.9 675.97 L714.6 676.25 L714.3 676.43 L714.0 676.50Z" fill="#d0d0d0" stroke="#484848" stroke-width="0.8"/><path d="M714.0 651.70 L714.3 651.77 L714.6 651.95 L714.9 652.23 L715.2 652.62 L715.5 653.19 L715.8 652.97 L716.1 652.48 L716.4 652.12 L716.7 651.88 L717.0 651.74 L717.3 651.70 L717.6 651.77 L717.9 651.95 L718.2 652.23 L718.5 652.62 L718.8 653.19 L719.1 652.97 L719.4 652.48 L719.7 652.12 L720.0 651.88 L720.3 651.74 L720.6 651.70 L720.9 651.77 L721.2 651.95 L721.5 652.23 L721.8 652.62 L721.8 655.38 L721.5 655.77 L721.2 656.05 L720.9 656.23 L720.6 656.30 L720.3 656.26 L720.0 656.12 L719.7 655.88 L719.4 655.52 L719.1 655.03 L718.8 654.81 L718.5 655.38 L718.2 655.77 L717.9 656.05 L717.6 656.23 L717.3 656.30 L717.0 656.26 L716.7 656.12 L716.4 655.88 L716.1 655.52 L715.8 655.03 L715.5 654.81 L715.2 655.38 L714.9 655.77 L714.6 656.05 L714.3 656.23 L714.0 656.30Z" fill="#d0d0d0" stroke="#484848" stroke-width="0.8"/><path d="M385.5 654 H390" stroke="#999" stroke-width="0.9"/><path d="M254 700.2 H294" stroke="#b4b4b4" stroke-width="0.9"/><path d="M294 699.8 H303.5" stroke="#444" stroke-width="0.9"/><path d="M303.5 699.29 L303.9 698.91 L304.3 698.72 L304.7 698.58 L305.1 698.50 L305.5 698.49 L305.9 698.52 L306.3 698.56 L306.7 698.62 L307.1 698.69 L307.5 698.76 L307.9 698.87 L308.3 699.00 L308.7 699.25 L309.1 698.91 L309.5 698.78 L309.9 698.70 L310.3 698.64 L310.7 698.61 L311.1 698.58 L311.5 698.49 L311.9 698.43 L312.3 698.49 L312.7 698.62 L313.1 698.76 L313.5 698.89 L313.9 699.15 L314.3 698.82 L314.7 698.63 L315.1 698.49 L315.5 698.39 L315.9 698.32 L316.3 698.35 L316.7 698.42 L317.1 698.50 L317.5 698.51 L317.9 698.56 L318.3 698.74 L318.7 699.01 L319.1 699.35 L319.5 699.06 L319.9 698.88 L320.3 698.73 L320.7 698.61 L321.1 698.51 L321.5 698.39 L321.9 698.30 L322.3 698.32 L322.7 698.40 L323.1 698.53 L323.5 698.77 L323.9 699.06 L324.3 699.35 L324.7 699.06 L325.1 698.86 L325.5 698.72 L325.9 698.61 L326.3 698.54 L326.7 698.51 L327.1 698.51 L327.5 698.54 L327.9 698.60 L328.3 698.71 L328.7 698.85 L329.1 699.04 L329.5 699.35 L329.9 699.10 L330.3 698.88 L330.7 698.68 L331.1 698.52 L331.5 698.42 L331.9 698.34 L332.3 698.37 L332.7 698.44 L333.1 698.53 L333.5 698.59 L333.9 698.68 L334.3 698.89 L334.7 699.24 L335.1 698.98 L335.5 698.86 L335.9 698.78 L336.3 698.62 L336.7 698.46 L337.1 698.35 L337.5 698.33 L337.9 698.34 L338.3 698.48 L338.7 698.68 L339.1 698.90 L339.5 699.13 L339.9 699.35 L340.3 699.12 L340.7 698.86 L341.1 698.66 L341.5 698.55 L341.9 698.47 L342.3 698.43 L342.7 698.43 L343.1 698.45 L343.5 698.45 L343.9 698.49 L344.3 698.65 L344.7 698.89 L345.1 699.23 L345.5 698.90 L345.9 698.69 L346.3 698.63 L346.7 698.64 L347.1 698.64 L347.5 698.53 L347.9 698.45 L348.3 698.44 L348.7 698.47 L349.1 698.58 L349.5 698.83 L349.9 699.13 L350.3 699.35 L350.7 699.15 L351.1 698.94 L351.5 698.70 L351.9 698.49 L352.3 698.37 L352.7 698.31 L353.1 698.33 L353.5 698.49 L353.9 698.69 L354.3 698.76 L354.7 698.82 L355.1 698.95 L355.5 699.34 L355.9 699.11 L356.3 698.87 L356.7 698.64 L357.1 698.46 L357.5 698.41 L357.9 698.39 L358.3 698.44 L358.7 698.54 L359.1 698.66 L359.5 698.77 L359.9 698.91 L360.3 699.03 L360.7 699.26 L361.1 698.89 L361.5 698.75 L361.9 698.64 L362.3 698.52 L362.7 698.41 L363.1 698.36 L363.5 698.42 L363.9 698.52 L364.3 698.61 L364.7 698.72 L365.1 698.84 L365.5 698.93 L365.9 699.14 L366.3 698.84 L366.7 698.70 L367.1 698.60 L367.5 698.53 L367.9 698.48 L368.3 698.45 L368.7 698.44 L369.1 698.47 L369.5 698.51 L369.9 698.58 L370.3 698.72 L370.7 698.90 L371.1 699.21 L371.5 698.86 L371.9 698.65 L372.3 698.56 L372.7 698.53 L373.1 698.51 L373.5 698.41 L373.9 698.34 L374.3 698.38 L374.7 698.47 L375.1 698.59 L375.5 698.70 L375.9 698.85 L376.3 699.16 L376.7 698.86 L377.1 698.68 L377.5 698.53 L377.9 698.43 L378.3 698.35 L378.7 698.31 L379.1 698.30 L379.5 698.32 L379.9 698.38 L380.3 698.52 L380.7 698.71 L381.1 698.94 L381.5 699.27 L381.9 698.97 L381.9 700.63 L381.5 700.33 L381.1 700.66 L380.7 700.89 L380.3 701.08 L379.9 701.22 L379.5 701.28 L379.1 701.30 L378.7 701.29 L378.3 701.25 L377.9 701.17 L377.5 701.07 L377.1 700.92 L376.7 700.74 L376.3 700.44 L375.9 700.75 L375.5 700.90 L375.1 701.01 L374.7 701.13 L374.3 701.22 L373.9 701.26 L373.5 701.19 L373.1 701.09 L372.7 701.07 L372.3 701.04 L371.9 700.95 L371.5 700.74 L371.1 700.39 L370.7 700.70 L370.3 700.88 L369.9 701.02 L369.5 701.09 L369.1 701.13 L368.7 701.16 L368.3 701.15 L367.9 701.12 L367.5 701.07 L367.1 701.00 L366.7 700.90 L366.3 700.76 L365.9 700.46 L365.5 700.67 L365.1 700.76 L364.7 700.88 L364.3 700.99 L363.9 701.08 L363.5 701.18 L363.1 701.24 L362.7 701.19 L362.3 701.08 L361.9 700.96 L361.5 700.85 L361.1 700.71 L360.7 700.34 L360.3 700.57 L359.9 700.69 L359.5 700.83 L359.1 700.94 L358.7 701.06 L358.3 701.16 L357.9 701.21 L357.5 701.19 L357.1 701.14 L356.7 700.96 L356.3 700.73 L355.9 700.49 L355.5 700.26 L355.1 700.65 L354.7 700.78 L354.3 700.84 L353.9 700.91 L353.5 701.11 L353.1 701.27 L352.7 701.29 L352.3 701.23 L351.9 701.11 L351.5 700.90 L351.1 700.66 L350.7 700.45 L350.3 700.25 L349.9 700.47 L349.5 700.77 L349.1 701.02 L348.7 701.13 L348.3 701.16 L347.9 701.15 L347.5 701.07 L347.1 700.96 L346.7 700.96 L346.3 700.97 L345.9 700.91 L345.5 700.70 L345.1 700.37 L344.7 700.71 L344.3 700.95 L343.9 701.11 L343.5 701.15 L343.1 701.15 L342.7 701.17 L342.3 701.17 L341.9 701.13 L341.5 701.05 L341.1 700.94 L340.7 700.74 L340.3 700.48 L339.9 700.25 L339.5 700.47 L339.1 700.70 L338.7 700.92 L338.3 701.12 L337.9 701.26 L337.5 701.27 L337.1 701.25 L336.7 701.14 L336.3 700.98 L335.9 700.82 L335.5 700.74 L335.1 700.62 L334.7 700.36 L334.3 700.71 L333.9 700.92 L333.5 701.01 L333.1 701.07 L332.7 701.16 L332.3 701.23 L331.9 701.26 L331.5 701.18 L331.1 701.08 L330.7 700.92 L330.3 700.72 L329.9 700.50 L329.5 700.25 L329.1 700.56 L328.7 700.75 L328.3 700.89 L327.9 701.00 L327.5 701.06 L327.1 701.09 L326.7 701.09 L326.3 701.06 L325.9 700.99 L325.5 700.88 L325.1 700.74 L324.7 700.54 L324.3 700.25 L323.9 700.54 L323.5 700.83 L323.1 701.07 L322.7 701.20 L322.3 701.28 L321.9 701.30 L321.5 701.21 L321.1 701.09 L320.7 700.99 L320.3 700.87 L319.9 700.72 L319.5 700.54 L319.1 700.25 L318.7 700.59 L318.3 700.86 L317.9 701.04 L317.5 701.09 L317.1 701.10 L316.7 701.18 L316.3 701.25 L315.9 701.28 L315.5 701.21 L315.1 701.11 L314.7 700.97 L314.3 700.78 L313.9 700.45 L313.5 700.71 L313.1 700.84 L312.7 700.98 L312.3 701.11 L311.9 701.17 L311.5 701.11 L311.1 701.02 L310.7 700.99 L310.3 700.96 L309.9 700.90 L309.5 700.82 L309.1 700.69 L308.7 700.35 L308.3 700.60 L307.9 700.73 L307.5 700.84 L307.1 700.91 L306.7 700.98 L306.3 701.04 L305.9 701.08 L305.5 701.11 L305.1 701.10 L304.7 701.02 L304.3 700.88 L303.9 700.69 L303.5 700.31Z" fill="#8a8a8a" stroke="#505050" stroke-width="0.7" stroke-linejoin="round"/></svg>
<div class="a" style="left:255px;top:550px;width:128.5px;height:20px;overflow:hidden"><div class="el" style="left:2.2px;top:5.8px;letter-spacing:0.1px">Backing Guitar 2 1 (Backing</div></div>
<div class="el" style="left:257px;top:601.8px;letter-spacing:-0.32px">bass_bip</div>
<div class="el" style="left:389px;top:601.8px;letter-spacing:-0.32px">bass</div>
<div class="el" style="left:257.1px;top:647.8px;letter-spacing:0.33px">Drum-01</div>
<div class="el" style="left:388.6px;top:647.8px;letter-spacing:0.33px">Drum</div>
<svg class="a" style="left:257.2px;top:693.5px" width="33.6" height="10.08" viewBox="0 0 40 12"><g fill="none" stroke="#111" stroke-width="1.8"><path d="M0.8 1.6 H7.2 C7.2 6 5 9 0.8 10.6 M1 5.6 H7"/><path d="M9.5 0 V12"/><path d="M15.6 0.4 V6.4 H22.6 V0.4 M15.6 3.4 H22.6 M19.1 6.4 V10 M13.4 10.2 H24.8"/><path d="M35.6 1 H28.6 V6.6 H35.8 M26.4 10.2 H37.8"/></g></svg>
<svg class="a" style="left:388.6px;top:693.5px" width="33.6" height="10.08" viewBox="0 0 40 12"><g fill="none" stroke="#111" stroke-width="1.8"><path d="M0.8 1.6 H7.2 C7.2 6 5 9 0.8 10.6 M1 5.6 H7"/><path d="M9.5 0 V12"/><path d="M15.6 0.4 V6.4 H22.6 V0.4 M15.6 3.4 H22.6 M19.1 6.4 V10 M13.4 10.2 H24.8"/><path d="M35.6 1 H28.6 V6.6 H35.8 M26.4 10.2 H37.8"/></g></svg>
<div class="a" style="left:15px;top:14px;width:57px;height:24px;background:#97c8f5"></div>
<div class="t" style="left:-0.5px;top:18.5px;font-size:15px;color:#141414;letter-spacing:0px;transform:scaleY(1.08);transform-origin:0 13.3px">t</div>
<div class="t" style="left:22px;top:18.5px;font-size:15px;color:#141414;letter-spacing:0.09px;transform:scaleY(1.08);transform-origin:0 13.3px">Studio</div>
<div class="t" style="left:83px;top:18.5px;font-size:15px;color:#141414;letter-spacing:-0.19px;transform:scaleY(1.08);transform-origin:0 13.3px">Workspaces</div>
<div class="t" style="left:182px;top:18.5px;font-size:15px;color:#141414;letter-spacing:0.33px;transform:scaleY(1.08);transform-origin:0 13.3px">Window</div>
<div class="t" style="left:255px;top:18.5px;font-size:15px;color:#141414;letter-spacing:-0.23px;transform:scaleY(1.08);transform-origin:0 13.3px">VST Cloud</div>
<div class="t" style="left:343.5px;top:18.5px;font-size:15px;color:#141414;letter-spacing:0px;transform:scaleY(1.08);transform-origin:0 13.3px">Hub</div>
<div class="t" style="left:389.3px;top:18.5px;font-size:15px;color:#141414;letter-spacing:0.05px;transform:scaleY(1.08);transform-origin:0 13.3px">Help</div>
<div class="a" style="left:243px;top:41px;width:167.6px;height:524.4px;background:rgba(0,0,0,0.42);filter:blur(1.4px)"></div>
<div class="a" style="left:12.8px;top:38px;width:395.2px;height:524.6px;background:#f2f2f2;border-top:1px solid #9a9a9a;border-left:0.6px solid #a0a0a0;border-bottom:0.6px solid #a8a8a8;box-shadow:inset 2.2px 0 0 #fafafa,inset -2.2px -2.2px 0 #fafafa"></div>
<div class="a" style="left:18px;top:428px;width:386px;height:27px;background:#97c8f5"></div>
<div class="sep" style="left:17px;top:73px;width:387px"></div>
<div class="sep" style="left:17px;top:247px;width:387px"></div>
<div class="sep" style="left:17px;top:421px;width:387px"></div>
<div class="sep" style="left:17px;top:460px;width:387px"></div>
<div class="sep" style="left:17px;top:526px;width:387px"></div>
<div class="mi" style="left:53.6px;top:42px;letter-spacing:0.09px">Audio Connections...</div>
<div class="sc" style="left:282.3px;width:100px;top:42px;transform:scale(0.9,1.07)">F4</div>
<div class="mi" style="left:53.6px;top:81px;letter-spacing:-0.04px">MixConsole</div>
<div class="sc" style="left:282.3px;width:100px;top:81px;transform:scale(0.9,1.07)">F3</div>
<div class="mi" style="left:53.6px;top:108px;letter-spacing:0.07px">MixConsole 2</div>
<div class="mi" style="left:53.6px;top:135px;letter-spacing:0.07px">MixConsole 3</div>
<div class="mi" style="left:53.6px;top:162px;letter-spacing:0.07px">MixConsole 4</div>
<div class="mi" style="left:53.6px;top:189px;letter-spacing:0.24px">MixConsole in Project Window</div>
<div class="sc" style="left:282.6px;width:100px;top:189px;letter-spacing:0.14px">Alt+F3</div>
<div class="mi" style="left:53.6px;top:216px;letter-spacing:0.21px">Control Room</div>
<div class="mi" style="left:53.6px;top:255px;letter-spacing:0.24px">MIDI Remote Manager</div>
<div class="mi" style="left:53.6px;top:282px;letter-spacing:0.09px">VST Plug-in Manager</div>
<div class="mi" style="left:53.6px;top:309px;letter-spacing:-0.07px">VST Instruments</div>
<div class="sc" style="left:282.3px;width:100px;top:309px;transform:scale(0.9,1.07)">F11</div>
<div class="mi" style="left:53.6px;top:336px;letter-spacing:0.14px">Audio Performance</div>
<div class="sc" style="left:282.3px;width:100px;top:336px;transform:scale(0.9,1.07)">F12</div>
<div class="mi" style="left:53.6px;top:363px;letter-spacing:0.01px">Video Player</div>
<div class="sc" style="left:282.3px;width:100px;top:363px;transform:scale(0.9,1.07)">F8</div>
<div class="mi" style="left:53.6px;top:390px;letter-spacing:-0.06px">On-Screen Keyboard...</div>
<div class="sc" style="left:282.6px;width:100px;top:390px;letter-spacing:0.35px">Alt+K</div>
<div class="mi" style="left:53.6px;top:429px;letter-spacing:0.4px">More Options</div>
<div class="mi" style="left:53.6px;top:468px;letter-spacing:-0.12px">GoPro VR Player Remote</div>
<div class="mi" style="left:53.6px;top:495px;letter-spacing:0.13px">Head Tracking</div>
<div class="mi" style="left:53.6px;top:534px;letter-spacing:0.0px">Studio Setup...</div>
<svg class="a" style="left:385px;top:435px" width="10" height="13" viewBox="0 0 10 13"><path d="M2.2 2 L7.6 6.5 L2.2 11" fill="none" stroke="#7a7a7a" stroke-width="1.2"/></svg>
<div class="a" style="left:405px;top:428px;width:316.3px;height:275.6px;background:rgba(0,0,0,0.5);filter:blur(1.1px)"></div>
<svg class="a" style="left:408px;top:420px" width="314" height="6" viewBox="0 0 314 6"><path d="M0 4.25 H60 L62 3.9 L64 4.25 H150 L152 3.95 H154 L156 4.25 H208 L211 3.7 L214 3.7 L217 4.25 H256 L258 3.9 L260 4.25 H314" fill="none" stroke="#484848" stroke-width="1.5"/></svg>
<div class="a" style="left:402px;top:425px;width:316.2px;height:275.6px;background:#f2f2f2;border-top:1px solid #b0b0b0;border-left:1px solid #9a9a9a;border-bottom:0.6px solid #a8a8a8;box-shadow:inset 2.2px 1.5px 0 #f9f7f6,inset -2.2px -2.2px 0 #f9f7f6"></div>
<div class="a" style="left:407px;top:428px;width:307px;height:27px;background:#97c8f5"></div>
<div class="mi" style="left:442px;top:429px;letter-spacing:0.14px">MIDI Device Manager...</div>
<div class="mi" style="left:442px;top:456px;letter-spacing:0.17px">MMC Master Panel</div>
<div class="mi" style="left:442px;top:483px;letter-spacing:0.28px">Mackie Control</div>
<div class="mi" style="left:442px;top:510px;letter-spacing:0.3px">Mackie Control 2</div>
<div class="mi" style="left:442px;top:537px;letter-spacing:0.3px">Mackie Control 3</div>
<div class="mi" style="left:442px;top:564px;letter-spacing:0.3px">Mackie Control 4</div>
<div class="mi" style="left:442px;top:591px;letter-spacing:0.09px">Max. Record Time</div>
<div class="mi" style="left:442px;top:618px;letter-spacing:0.08px">Time Display</div>
<div class="mi" style="left:442px;top:645px;letter-spacing:0.26px">System Component Information</div>
<div class="mi" style="left:442px;top:672px;letter-spacing:0.07px">Studio Panel</div>
<div class="a" style="left:0;top:0;width:723px;height:707px;border:1px solid #000;pointer-events:none"></div>
</div></body></html>
